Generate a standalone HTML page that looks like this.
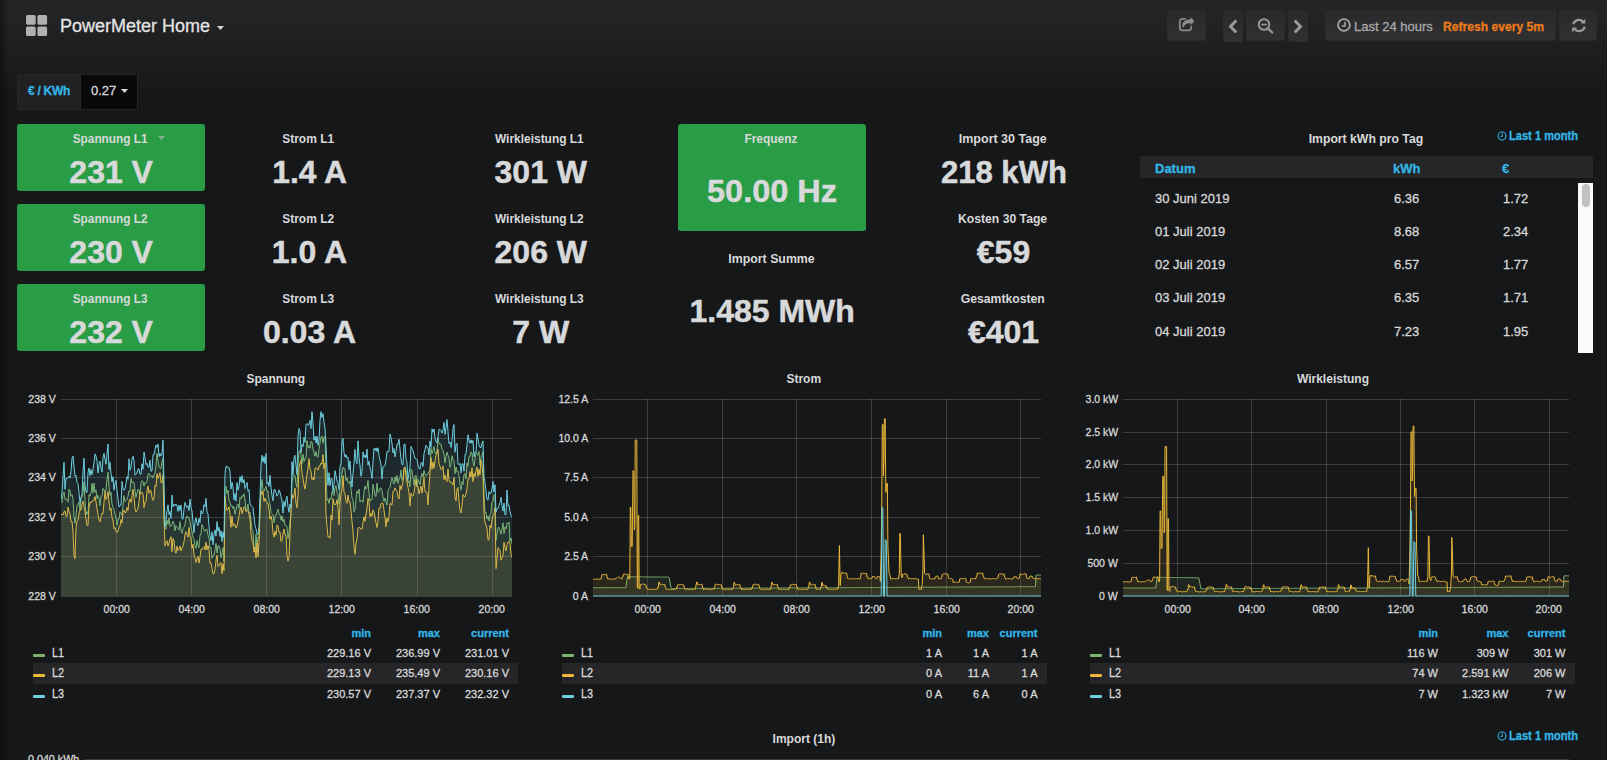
<!DOCTYPE html>
<html lang="de"><head><meta charset="utf-8"><title>PowerMeter Home</title>
<style>
html,body{margin:0;padding:0}
body{width:1607px;height:760px;overflow:hidden;position:relative;background:#161719 linear-gradient(180deg,#222426 10px,#161719 100px) no-repeat;background-size:100% 760px;color:#d8d9da;font-family:"Liberation Sans",Arial,sans-serif;font-size:13px}
.a{position:absolute;white-space:nowrap;-webkit-text-stroke:.3px currentColor}
.lshadow{left:0;top:0;width:9px;height:760px;background:linear-gradient(90deg,rgba(0,0,0,.38),rgba(0,0,0,0))}
.btn{top:10px;height:29px;border:1px solid #2b2b2e;border-radius:2px;background:linear-gradient(180deg,#29292c,#313134);box-sizing:content-box}
.btn svg{position:absolute}
.ttl{-webkit-text-stroke:0;font-weight:bold;font-size:13px;line-height:16px;text-align:center;color:#d8d9da}
.ttl span,.sb{display:inline-block;transform:scaleX(.925);transform-origin:50% 50%}
.sl{display:inline-block;transform-origin:0 50%}
.sr{display:inline-block;transform-origin:100% 50%}
.sc{display:inline-block;transform-origin:50% 50%}
.val{-webkit-text-stroke:.5px currentColor;font-weight:bold;font-size:32px;line-height:36px;text-align:center;color:#d8d9da}
.green{background:#299c46;border-radius:3px}
.ax{font-size:11px;line-height:12px;color:#d8d9da}
.lg{font-size:11px;line-height:14px;color:#d8d9da}
.ln{font-size:12px;line-height:14px;color:#d8d9da}
.lh{font-size:11px;line-height:14px;color:#33b5e5;font-weight:bold}
.r{text-align:right}
.c{text-align:center}
.td{font-size:13px;line-height:16px;color:#d8d9da}
.th{font-size:13px;line-height:16px;color:#33b5e5;font-weight:bold}
.th span{display:inline-block;transform:scaleX(1);transform-origin:0 50%}
.tinfo{font-size:12px;line-height:14px;color:#33b5e5;font-weight:bold}
.tinfo span{display:inline-block;transform:scaleX(.924);transform-origin:0 50%}
</style></head><body>
<div class="a lshadow"></div>

<svg class="a" style="left:26px;top:14.800px" width="22" height="22" viewBox="0 0 22 22"><g fill="#b1b2b1"><rect x="0" y="0" width="9.700" height="9.700" rx="1.600"/><rect x="11.400" y="0" width="9.700" height="9.700" rx="1.600"/><rect x="0" y="11.400" width="9.700" height="9.700" rx="1.600"/><rect x="11.400" y="11.400" width="9.700" height="9.700" rx="1.600"/></g></svg>
<div class="a" id="dtitle" style="left:60px;top:14px;font-size:18px;line-height:24px;color:#e3e3e3">PowerMeter Home</div>
<svg class="a" style="left:217px;top:26px" width="7" height="4" viewBox="0 0 7 4"><path d="M0 0h7L3.5 4z" fill="#d8d9da"/></svg>
<svg class="a" style="left:1176px;top:15px;z-index:2" width="20" height="20" viewBox="0 0 20 20"><path d="M9.200 3.800H6.400A2.600 2.600 0 0 0 3.800 6.400V12.700A2.600 2.600 0 0 0 6.400 15.300H12.700A2.600 2.600 0 0 0 15.300 12.700V11.600" fill="none" stroke="#8c8c8c" stroke-width="1.700" stroke-linecap="round"/><path d="M14.700 2.100L18.200 6.200L14.700 10.300V8.200C10.800 8.100 8.600 9.200 7 13.100C5.300 8.600 7.500 4.300 14.700 4.200Z" fill="#8f8f8f"/></svg>
<div class="a btn" style="left:1167px;width:37px;"></div>
<div class="a btn" style="left:1223px;width:18px;height:30px"><svg style="left:4px;top:8px" width="10" height="15" viewBox="0 0 10 15"><path d="M8.300 1.600L2.500 7.500l5.800 5.900" fill="none" stroke="#9a9a9a" stroke-width="2.900"/></svg></div>
<div class="a btn" style="left:1246px;width:37px;"></div>
<svg class="a" style="left:1254px;top:15px;z-index:2" width="20" height="20" viewBox="0 0 20 20"><circle cx="10" cy="9.500" r="5.300" fill="none" stroke="#979797" stroke-width="2"/><path d="M13.900 13.400l4.300 4.100" stroke="#979797" stroke-width="2.400" stroke-linecap="round"/><path d="M7.100 9.500h5.800" stroke="#979797" stroke-width="1.700"/></svg>
<div class="a btn" style="left:1288px;width:18px;height:30px"><svg style="left:4px;top:8px" width="10" height="15" viewBox="0 0 10 15"><path d="M1.700 1.600l5.800 5.900-5.800 5.900" fill="none" stroke="#9a9a9a" stroke-width="2.900"/></svg></div>
<svg class="a" style="left:1335.600px;top:17.100px;z-index:2" width="16" height="16" viewBox="0 0 16 16"><circle cx="8" cy="8" r="5.900" fill="none" stroke="#a6a6a6" stroke-width="1.800"/><path d="M9 4.700v4.300H5.600" fill="none" stroke="#a6a6a6" stroke-width="1.500"/></svg>
<div class="a btn" style="left:1325px;width:229px;"><span class="a" id="tr1" style="left:28px;top:7px;font-size:13px;line-height:17px;color:#a8a8a8">Last 24 hours</span><span class="a" id="tr2" style="left:117px;top:7px;font-size:13px;line-height:17px;color:#eb7b18;font-weight:bold"><span class="sl" style="transform:scaleX(.932)">Refresh every 5m</span></span></div>
<div class="a btn" style="left:1559px;width:36px;"><svg style="left:10.500px;top:7px" width="15.500" height="15" viewBox="-.5 0 15.500 15"><path d="M1.800 6.200A5.700 5.400 0 0 1 11.700 3.700" fill="none" stroke="#9a9a9a" stroke-width="2.300"/><path d="M13.800 .8v4.600H9.200z" fill="#9a9a9a"/><path d="M13.200 8.800A5.700 5.400 0 0 1 3.300 11.300" fill="none" stroke="#9a9a9a" stroke-width="2.300"/><path d="M.6 14.300V9.400h4.900z" fill="#9a9a9a"/></svg></div>
<div class="a" style="left:17px;top:74px;width:63px;height:34px;background:#212124;border:1px solid #262628;border-right:none;border-radius:2px 0 0 2px"></div>
<div class="a" id="vlab" style="left:28px;top:84px;font-size:12px;line-height:15px;font-weight:bold;color:#33b5e5;letter-spacing:-.28px">€ / KWh</div>
<div class="a" style="left:80px;top:74px;width:56px;height:34px;background:#09090b;border:1px solid #262628;border-radius:0 2px 2px 0"></div>
<div class="a" id="vval" style="left:91px;top:83px;font-size:13px;line-height:16px;color:#d8d9da">0.27</div>
<svg class="a" style="left:121px;top:89px" width="7" height="4" viewBox="0 0 7 4"><path d="M0 0h7L3.500 4z" fill="#d8d9da"/></svg>
<div class="a green" style="left:17.0px;top:124px;width:188.3px;height:67px"></div>
<div class="a ttl" style="left:16.0px;top:131px;width:188.3px"><span style="transform:scaleX(0.911)">Spannung L1</span></div>
<div class="a val" style="left:17.0px;top:154.0px;width:188.3px"><span class="sc" style="transform:scaleX(1.000)">231 V</span></div>
<svg class="a" style="left:158px;top:136px" width="7" height="4" viewBox="0 0 7 4"><path d="M0 0h7L3.500 4z" fill="#7fb38b"/></svg>
<div class="a ttl" style="left:214.3px;top:131px;width:188.3px"><span style="transform:scaleX(0.923)">Strom L1</span></div>
<div class="a val" style="left:215.3px;top:154.0px;width:188.3px"><span class="sc" style="transform:scaleX(0.992)">1.4 A</span></div>
<div class="a ttl" style="left:412.6px;top:131px;width:254.4px"><span style="transform:scaleX(0.919)">Wirkleistung L1</span></div>
<div class="a val" style="left:413.6px;top:154.0px;width:254.4px"><span class="sc" style="transform:scaleX(1.000)">301 W</span></div>
<div class="a green" style="left:17.0px;top:204px;width:188.3px;height:67px"></div>
<div class="a ttl" style="left:16.0px;top:211px;width:188.3px"><span style="transform:scaleX(0.911)">Spannung L2</span></div>
<div class="a val" style="left:17.0px;top:234.0px;width:188.3px"><span class="sc" style="transform:scaleX(1.000)">230 V</span></div>
<div class="a ttl" style="left:214.3px;top:211px;width:188.3px"><span style="transform:scaleX(0.923)">Strom L2</span></div>
<div class="a val" style="left:215.3px;top:234.0px;width:188.3px"><span class="sc" style="transform:scaleX(1.000)">1.0 A</span></div>
<div class="a ttl" style="left:412.6px;top:211px;width:254.4px"><span style="transform:scaleX(0.919)">Wirkleistung L2</span></div>
<div class="a val" style="left:413.6px;top:234.0px;width:254.4px"><span class="sc" style="transform:scaleX(1.000)">206 W</span></div>
<div class="a green" style="left:17.0px;top:284px;width:188.3px;height:67px"></div>
<div class="a ttl" style="left:16.0px;top:291px;width:188.3px"><span style="transform:scaleX(0.911)">Spannung L3</span></div>
<div class="a val" style="left:17.0px;top:314.0px;width:188.3px"><span class="sc" style="transform:scaleX(1.000)">232 V</span></div>
<div class="a ttl" style="left:214.3px;top:291px;width:188.3px"><span style="transform:scaleX(0.923)">Strom L3</span></div>
<div class="a val" style="left:215.3px;top:314.0px;width:188.3px"><span class="sc" style="transform:scaleX(1.000)">0.03 A</span></div>
<div class="a ttl" style="left:412.6px;top:291px;width:254.4px"><span style="transform:scaleX(0.919)">Wirkleistung L3</span></div>
<div class="a val" style="left:413.6px;top:314.0px;width:254.4px"><span class="sc" style="transform:scaleX(1.000)">7 W</span></div>
<div class="a green" style="left:678.0px;top:124px;width:188.3px;height:107px"></div>
<div class="a ttl" style="left:677.0px;top:131px;width:188.3px"><span style="transform:scaleX(0.917)">Frequenz</span></div>
<div class="a val" style="left:678.0px;top:173.2px;width:188.3px"><span class="sc" style="transform:scaleX(1.015)">50.00 Hz</span></div>
<div class="a ttl" style="left:677.0px;top:251px;width:188.3px"><span style="transform:scaleX(0.949)">Import Summe</span></div>
<div class="a val" style="left:678.0px;top:293.2px;width:188.3px"><span class="sc" style="transform:scaleX(1.000)">1.485 MWh</span></div>
<div class="a ttl" style="left:875.3px;top:131px;width:254.4px"><span style="transform:scaleX(0.961)">Import 30 Tage</span></div>
<div class="a val" style="left:876.3px;top:154.0px;width:254.4px"><span class="sc" style="transform:scaleX(0.971)">218 kWh</span></div>
<div class="a ttl" style="left:875.3px;top:211px;width:254.4px"><span style="transform:scaleX(0.937)">Kosten 30 Tage</span></div>
<div class="a val" style="left:876.3px;top:234.0px;width:254.4px"><span class="sc" style="transform:scaleX(1.000)">€59</span></div>
<div class="a ttl" style="left:875.3px;top:291px;width:254.4px"><span style="transform:scaleX(0.938)">Gesamtkosten</span></div>
<div class="a val" style="left:876.3px;top:314.0px;width:254.4px"><span class="sc" style="transform:scaleX(1.000)">€401</span></div>
<div class="a ttl" style="left:1139.7px;top:131px;width:452.7px"><span style="transform:scaleX(0.940)">Import kWh pro Tag</span></div>
<svg class="a" style="left:1497px;top:131px" width="10" height="10" viewBox="0 0 10 10"><circle cx="5" cy="5" r="4" fill="none" stroke="#33b5e5" stroke-width="1.100"/><path d="M5.300 2.600v2.800H3.300" fill="none" stroke="#33b5e5" stroke-width="1"/></svg>
<div class="a tinfo" style="left:1509px;top:129px"><span>Last 1 month</span></div>
<div class="a" style="left:1140px;top:156px;width:453px;height:22px;background:#262628"></div>
<div class="a th" style="left:1155px;top:161px"><span>Datum</span></div>
<div class="a th" style="left:1393px;top:161px"><span>kWh</span></div>
<div class="a th" style="left:1502px;top:161px"><span>€</span></div>
<div class="a td" style="left:1155px;top:190.5px">30 Juni 2019</div>
<div class="a td" style="left:1394px;top:190.5px">6.36</div>
<div class="a td" style="left:1503px;top:190.5px">1.72</div>
<div class="a td" style="left:1155px;top:223.8px">01 Juli 2019</div>
<div class="a td" style="left:1394px;top:223.8px">8.68</div>
<div class="a td" style="left:1503px;top:223.8px">2.34</div>
<div class="a td" style="left:1155px;top:257.0px">02 Juli 2019</div>
<div class="a td" style="left:1394px;top:257.0px">6.57</div>
<div class="a td" style="left:1503px;top:257.0px">1.77</div>
<div class="a td" style="left:1155px;top:290.2px">03 Juli 2019</div>
<div class="a td" style="left:1394px;top:290.2px">6.35</div>
<div class="a td" style="left:1503px;top:290.2px">1.71</div>
<div class="a td" style="left:1155px;top:323.5px">04 Juli 2019</div>
<div class="a td" style="left:1394px;top:323.5px">7.23</div>
<div class="a td" style="left:1503px;top:323.5px">1.95</div>
<div class="a" style="left:1578px;top:183px;width:15px;height:170px;background:#fafafa"></div>
<div class="a" style="left:1581.500px;top:184px;width:8.500px;height:23px;background:#c1c1c1;border-radius:4px"></div>
<div class="a ttl" style="left:16.0px;top:371px;width:518.8px"><span>Spannung</span></div>
<svg class="a" style="left:0;top:390px" width="1607" height="215" viewBox="0 390 1607 215"><path d="M61 399.5H512" stroke="#fff" stroke-opacity=".16" stroke-width="1"/><path d="M61 438.5H512" stroke="#fff" stroke-opacity=".16" stroke-width="1"/><path d="M61 477.5H512" stroke="#fff" stroke-opacity=".16" stroke-width="1"/><path d="M61 517.5H512" stroke="#fff" stroke-opacity=".16" stroke-width="1"/><path d="M61 556.5H512" stroke="#fff" stroke-opacity=".16" stroke-width="1"/><path d="M61 596.5H512" stroke="#fff" stroke-opacity=".16" stroke-width="1"/><path d="M116.5 399V596" stroke="#fff" stroke-opacity=".16" stroke-width="1"/><path d="M191.5 399V596" stroke="#fff" stroke-opacity=".16" stroke-width="1"/><path d="M266.5 399V596" stroke="#fff" stroke-opacity=".16" stroke-width="1"/><path d="M341.5 399V596" stroke="#fff" stroke-opacity=".16" stroke-width="1"/><path d="M417.5 399V596" stroke="#fff" stroke-opacity=".16" stroke-width="1"/><path d="M492.5 399V596" stroke="#fff" stroke-opacity=".16" stroke-width="1"/><clipPath id="cp61"><rect x="61" y="396" width="451" height="201.500"/></clipPath><g clip-path="url(#cp61)"><path d="M61.0 500.8 62.0 502.5 63.0 494.9 64.0 492.1 65.0 499.1 66.0 499.6 67.0 499.0 68.0 502.1 69.0 489.2 70.0 491.0 71.0 496.1 72.0 494.6 73.0 499.1 74.0 516.9 75.0 523.3 76.0 515.6 77.0 505.1 78.0 504.7 79.0 502.0 80.0 509.8 81.0 498.3 82.0 496.9 83.0 493.8 84.0 482.1 85.0 499.2 86.0 514.9 87.0 511.6 88.0 514.3 89.0 494.6 90.0 496.1 91.0 493.1 92.0 483.4 93.0 492.9 94.0 483.1 95.0 492.2 96.0 489.9 97.0 498.9 98.0 495.2 99.0 498.1 100.0 505.8 101.0 496.5 102.0 495.9 103.0 488.3 104.0 490.0 105.0 491.7 106.0 489.9 107.0 479.2 108.0 472.1 109.0 485.9 110.0 495.4 111.0 492.2 112.0 503.9 113.0 507.5 114.0 509.9 115.0 514.4 116.0 518.1 117.0 525.5 118.0 518.8 119.0 519.2 120.0 511.7 121.0 513.7 122.0 515.6 123.0 505.3 124.0 495.6 125.0 501.2 126.0 500.6 127.0 499.4 128.0 496.3 129.0 490.7 130.0 491.6 131.0 478.4 132.0 483.1 133.0 481.7 134.0 482.6 135.0 490.1 136.0 497.4 137.0 493.0 138.0 489.1 139.0 490.5 140.0 494.5 141.0 482.7 142.0 480.5 143.0 481.6 144.0 486.0 145.0 482.3 146.0 483.1 147.0 481.4 148.0 474.6 149.0 473.2 150.0 476.3 151.0 476.4 152.0 475.5 153.0 477.8 154.0 475.1 155.0 472.7 156.0 465.4 157.0 453.5 158.0 460.3 159.0 466.3 160.0 468.1 161.0 468.4 162.0 461.1 163.0 458.1 164.0 505.1 165.0 527.6 166.0 529.3 167.0 520.3 168.0 524.2 169.0 517.9 170.0 526.6 171.0 526.1 172.0 524.0 173.0 521.1 174.0 523.3 175.0 530.8 176.0 525.6 177.0 526.7 178.0 528.9 179.0 530.2 180.0 521.5 181.0 530.7 182.0 533.3 183.0 528.2 184.0 527.3 185.0 524.8 186.0 518.1 187.0 516.0 188.0 517.8 189.0 517.5 190.0 522.3 191.0 527.9 192.0 531.5 193.0 537.2 194.0 539.1 195.0 545.5 196.0 548.5 197.0 540.5 198.0 545.7 199.0 547.7 200.0 534.9 201.0 534.2 202.0 524.6 203.0 526.6 204.0 529.8 205.0 531.3 206.0 529.4 207.0 529.4 208.0 535.1 209.0 538.1 210.0 548.2 211.0 547.2 212.0 558.4 213.0 555.5 214.0 555.4 215.0 550.3 216.0 543.4 217.0 553.1 218.0 545.8 219.0 545.9 220.0 548.6 221.0 557.7 222.0 552.9 223.0 547.6 224.0 561.3 225.0 488.5 226.0 486.2 227.0 493.5 228.0 490.0 229.0 500.1 230.0 502.6 231.0 506.2 232.0 505.3 233.0 508.6 234.0 506.6 235.0 514.4 236.0 510.5 237.0 505.5 238.0 504.1 239.0 508.4 240.0 497.4 241.0 498.8 242.0 495.6 243.0 496.5 244.0 493.7 245.0 500.0 246.0 509.7 247.0 509.7 248.0 503.9 249.0 512.6 250.0 512.0 251.0 520.2 252.0 529.6 253.0 531.5 254.0 548.0 255.0 551.9 256.0 534.3 257.0 546.5 258.0 537.1 259.0 538.0 260.0 503.5 261.0 488.8 262.0 479.5 263.0 490.4 264.0 491.2 265.0 488.7 266.0 486.5 267.0 490.8 268.0 491.1 269.0 500.5 270.0 504.0 271.0 512.4 272.0 513.7 273.0 514.7 274.0 522.7 275.0 515.6 276.0 515.7 277.0 511.8 278.0 509.3 279.0 514.1 280.0 514.8 281.0 520.3 282.0 515.6 283.0 521.9 284.0 519.1 285.0 525.0 286.0 525.1 287.0 526.8 288.0 538.6 289.0 531.7 290.0 520.6 291.0 514.3 292.0 482.4 293.0 476.3 294.0 476.1 295.0 475.6 296.0 483.4 297.0 487.4 298.0 463.8 299.0 451.5 300.0 450.6 301.0 454.6 302.0 464.2 303.0 454.2 304.0 461.6 305.0 458.1 306.0 457.8 307.0 440.6 308.0 447.7 309.0 445.6 310.0 448.3 311.0 441.2 312.0 442.3 313.0 449.2 314.0 452.4 315.0 456.2 316.0 451.4 317.0 456.4 318.0 457.2 319.0 449.3 320.0 442.8 321.0 437.0 322.0 435.9 323.0 443.2 324.0 437.2 325.0 436.2 326.0 469.5 327.0 500.3 328.0 498.9 329.0 503.4 330.0 498.0 331.0 499.0 332.0 491.8 333.0 493.5 334.0 495.7 335.0 488.1 336.0 485.8 337.0 492.4 338.0 494.4 339.0 504.4 340.0 484.6 341.0 478.6 342.0 472.8 343.0 467.5 344.0 467.9 345.0 470.6 346.0 480.5 347.0 477.6 348.0 482.4 349.0 483.7 350.0 481.1 351.0 488.8 352.0 497.8 353.0 500.4 354.0 511.8 355.0 509.4 356.0 498.8 357.0 491.0 358.0 493.6 359.0 489.1 360.0 501.9 361.0 501.3 362.0 500.0 363.0 502.3 364.0 491.7 365.0 485.9 366.0 489.0 367.0 487.5 368.0 480.5 369.0 493.6 370.0 501.0 371.0 499.6 372.0 499.6 373.0 484.3 374.0 489.5 375.0 495.7 376.0 496.4 377.0 483.1 378.0 492.4 379.0 491.6 380.0 488.3 381.0 487.9 382.0 490.5 383.0 497.0 384.0 501.4 385.0 497.9 386.0 502.1 387.0 505.2 388.0 490.6 389.0 488.6 390.0 487.4 391.0 481.7 392.0 477.5 393.0 481.3 394.0 484.1 395.0 476.8 396.0 481.7 397.0 475.4 398.0 483.5 399.0 478.6 400.0 478.1 401.0 470.0 402.0 480.5 403.0 479.3 404.0 468.6 405.0 466.5 406.0 470.4 407.0 475.4 408.0 483.0 409.0 480.6 410.0 487.0 411.0 469.0 412.0 470.5 413.0 478.1 414.0 485.4 415.0 475.8 416.0 475.3 417.0 486.4 418.0 479.2 419.0 482.2 420.0 484.7 421.0 477.3 422.0 473.4 423.0 476.8 424.0 470.5 425.0 474.1 426.0 476.2 427.0 474.3 428.0 474.0 429.0 471.6 430.0 469.9 431.0 448.3 432.0 453.5 433.0 449.9 434.0 446.5 435.0 453.2 436.0 453.9 437.0 450.8 438.0 437.7 439.0 443.7 440.0 443.6 441.0 444.2 442.0 449.1 443.0 450.9 444.0 454.1 445.0 462.9 446.0 456.7 447.0 452.0 448.0 455.5 449.0 458.3 450.0 467.3 451.0 464.1 452.0 455.7 453.0 459.9 454.0 460.7 455.0 473.7 456.0 466.9 457.0 471.9 458.0 471.4 459.0 475.1 460.0 484.8 461.0 490.3 462.0 481.4 463.0 484.6 464.0 474.1 465.0 473.6 466.0 478.8 467.0 462.9 468.0 466.4 469.0 456.5 470.0 456.3 471.0 451.9 472.0 452.7 473.0 462.8 474.0 466.1 475.0 458.2 476.0 453.7 477.0 453.5 478.0 455.2 479.0 451.5 480.0 465.0 481.0 456.9 482.0 454.9 483.0 451.8 484.0 493.8 485.0 512.8 486.0 512.2 487.0 519.1 488.0 515.8 489.0 520.9 490.0 515.4 491.0 512.5 492.0 501.7 493.0 501.3 494.0 495.1 495.0 494.9 496.0 540.2 497.0 534.1 498.0 527.6 499.0 527.3 500.0 530.5 501.0 534.2 502.0 529.2 503.0 522.8 504.0 533.6 505.0 526.8 506.0 529.0 507.0 523.1 508.0 523.4 509.0 522.1 510.0 541.4 511.0 537.9 512.0 544.1 L512.0 596 L61.0 596Z" fill="#7eb26d" fill-opacity=".1"/><path d="M61.0 500.8 62.0 502.5 63.0 494.9 64.0 492.1 65.0 499.1 66.0 499.6 67.0 499.0 68.0 502.1 69.0 489.2 70.0 491.0 71.0 496.1 72.0 494.6 73.0 499.1 74.0 516.9 75.0 523.3 76.0 515.6 77.0 505.1 78.0 504.7 79.0 502.0 80.0 509.8 81.0 498.3 82.0 496.9 83.0 493.8 84.0 482.1 85.0 499.2 86.0 514.9 87.0 511.6 88.0 514.3 89.0 494.6 90.0 496.1 91.0 493.1 92.0 483.4 93.0 492.9 94.0 483.1 95.0 492.2 96.0 489.9 97.0 498.9 98.0 495.2 99.0 498.1 100.0 505.8 101.0 496.5 102.0 495.9 103.0 488.3 104.0 490.0 105.0 491.7 106.0 489.9 107.0 479.2 108.0 472.1 109.0 485.9 110.0 495.4 111.0 492.2 112.0 503.9 113.0 507.5 114.0 509.9 115.0 514.4 116.0 518.1 117.0 525.5 118.0 518.8 119.0 519.2 120.0 511.7 121.0 513.7 122.0 515.6 123.0 505.3 124.0 495.6 125.0 501.2 126.0 500.6 127.0 499.4 128.0 496.3 129.0 490.7 130.0 491.6 131.0 478.4 132.0 483.1 133.0 481.7 134.0 482.6 135.0 490.1 136.0 497.4 137.0 493.0 138.0 489.1 139.0 490.5 140.0 494.5 141.0 482.7 142.0 480.5 143.0 481.6 144.0 486.0 145.0 482.3 146.0 483.1 147.0 481.4 148.0 474.6 149.0 473.2 150.0 476.3 151.0 476.4 152.0 475.5 153.0 477.8 154.0 475.1 155.0 472.7 156.0 465.4 157.0 453.5 158.0 460.3 159.0 466.3 160.0 468.1 161.0 468.4 162.0 461.1 163.0 458.1 164.0 505.1 165.0 527.6 166.0 529.3 167.0 520.3 168.0 524.2 169.0 517.9 170.0 526.6 171.0 526.1 172.0 524.0 173.0 521.1 174.0 523.3 175.0 530.8 176.0 525.6 177.0 526.7 178.0 528.9 179.0 530.2 180.0 521.5 181.0 530.7 182.0 533.3 183.0 528.2 184.0 527.3 185.0 524.8 186.0 518.1 187.0 516.0 188.0 517.8 189.0 517.5 190.0 522.3 191.0 527.9 192.0 531.5 193.0 537.2 194.0 539.1 195.0 545.5 196.0 548.5 197.0 540.5 198.0 545.7 199.0 547.7 200.0 534.9 201.0 534.2 202.0 524.6 203.0 526.6 204.0 529.8 205.0 531.3 206.0 529.4 207.0 529.4 208.0 535.1 209.0 538.1 210.0 548.2 211.0 547.2 212.0 558.4 213.0 555.5 214.0 555.4 215.0 550.3 216.0 543.4 217.0 553.1 218.0 545.8 219.0 545.9 220.0 548.6 221.0 557.7 222.0 552.9 223.0 547.6 224.0 561.3 225.0 488.5 226.0 486.2 227.0 493.5 228.0 490.0 229.0 500.1 230.0 502.6 231.0 506.2 232.0 505.3 233.0 508.6 234.0 506.6 235.0 514.4 236.0 510.5 237.0 505.5 238.0 504.1 239.0 508.4 240.0 497.4 241.0 498.8 242.0 495.6 243.0 496.5 244.0 493.7 245.0 500.0 246.0 509.7 247.0 509.7 248.0 503.9 249.0 512.6 250.0 512.0 251.0 520.2 252.0 529.6 253.0 531.5 254.0 548.0 255.0 551.9 256.0 534.3 257.0 546.5 258.0 537.1 259.0 538.0 260.0 503.5 261.0 488.8 262.0 479.5 263.0 490.4 264.0 491.2 265.0 488.7 266.0 486.5 267.0 490.8 268.0 491.1 269.0 500.5 270.0 504.0 271.0 512.4 272.0 513.7 273.0 514.7 274.0 522.7 275.0 515.6 276.0 515.7 277.0 511.8 278.0 509.3 279.0 514.1 280.0 514.8 281.0 520.3 282.0 515.6 283.0 521.9 284.0 519.1 285.0 525.0 286.0 525.1 287.0 526.8 288.0 538.6 289.0 531.7 290.0 520.6 291.0 514.3 292.0 482.4 293.0 476.3 294.0 476.1 295.0 475.6 296.0 483.4 297.0 487.4 298.0 463.8 299.0 451.5 300.0 450.6 301.0 454.6 302.0 464.2 303.0 454.2 304.0 461.6 305.0 458.1 306.0 457.8 307.0 440.6 308.0 447.7 309.0 445.6 310.0 448.3 311.0 441.2 312.0 442.3 313.0 449.2 314.0 452.4 315.0 456.2 316.0 451.4 317.0 456.4 318.0 457.2 319.0 449.3 320.0 442.8 321.0 437.0 322.0 435.9 323.0 443.2 324.0 437.2 325.0 436.2 326.0 469.5 327.0 500.3 328.0 498.9 329.0 503.4 330.0 498.0 331.0 499.0 332.0 491.8 333.0 493.5 334.0 495.7 335.0 488.1 336.0 485.8 337.0 492.4 338.0 494.4 339.0 504.4 340.0 484.6 341.0 478.6 342.0 472.8 343.0 467.5 344.0 467.9 345.0 470.6 346.0 480.5 347.0 477.6 348.0 482.4 349.0 483.7 350.0 481.1 351.0 488.8 352.0 497.8 353.0 500.4 354.0 511.8 355.0 509.4 356.0 498.8 357.0 491.0 358.0 493.6 359.0 489.1 360.0 501.9 361.0 501.3 362.0 500.0 363.0 502.3 364.0 491.7 365.0 485.9 366.0 489.0 367.0 487.5 368.0 480.5 369.0 493.6 370.0 501.0 371.0 499.6 372.0 499.6 373.0 484.3 374.0 489.5 375.0 495.7 376.0 496.4 377.0 483.1 378.0 492.4 379.0 491.6 380.0 488.3 381.0 487.9 382.0 490.5 383.0 497.0 384.0 501.4 385.0 497.9 386.0 502.1 387.0 505.2 388.0 490.6 389.0 488.6 390.0 487.4 391.0 481.7 392.0 477.5 393.0 481.3 394.0 484.1 395.0 476.8 396.0 481.7 397.0 475.4 398.0 483.5 399.0 478.6 400.0 478.1 401.0 470.0 402.0 480.5 403.0 479.3 404.0 468.6 405.0 466.5 406.0 470.4 407.0 475.4 408.0 483.0 409.0 480.6 410.0 487.0 411.0 469.0 412.0 470.5 413.0 478.1 414.0 485.4 415.0 475.8 416.0 475.3 417.0 486.4 418.0 479.2 419.0 482.2 420.0 484.7 421.0 477.3 422.0 473.4 423.0 476.8 424.0 470.5 425.0 474.1 426.0 476.2 427.0 474.3 428.0 474.0 429.0 471.6 430.0 469.9 431.0 448.3 432.0 453.5 433.0 449.9 434.0 446.5 435.0 453.2 436.0 453.9 437.0 450.8 438.0 437.7 439.0 443.7 440.0 443.6 441.0 444.2 442.0 449.1 443.0 450.9 444.0 454.1 445.0 462.9 446.0 456.7 447.0 452.0 448.0 455.5 449.0 458.3 450.0 467.3 451.0 464.1 452.0 455.7 453.0 459.9 454.0 460.7 455.0 473.7 456.0 466.9 457.0 471.9 458.0 471.4 459.0 475.1 460.0 484.8 461.0 490.3 462.0 481.4 463.0 484.6 464.0 474.1 465.0 473.6 466.0 478.8 467.0 462.9 468.0 466.4 469.0 456.5 470.0 456.3 471.0 451.9 472.0 452.7 473.0 462.8 474.0 466.1 475.0 458.2 476.0 453.7 477.0 453.5 478.0 455.2 479.0 451.5 480.0 465.0 481.0 456.9 482.0 454.9 483.0 451.8 484.0 493.8 485.0 512.8 486.0 512.2 487.0 519.1 488.0 515.8 489.0 520.9 490.0 515.4 491.0 512.5 492.0 501.7 493.0 501.3 494.0 495.1 495.0 494.9 496.0 540.2 497.0 534.1 498.0 527.6 499.0 527.3 500.0 530.5 501.0 534.2 502.0 529.2 503.0 522.8 504.0 533.6 505.0 526.8 506.0 529.0 507.0 523.1 508.0 523.4 509.0 522.1 510.0 541.4 511.0 537.9 512.0 544.1" fill="none" stroke="#7eb26d" stroke-width="1" stroke-linejoin="round"/><path d="M61.0 514.9 62.0 514.1 63.0 515.0 64.0 511.4 65.0 511.1 66.0 515.9 67.0 516.3 68.0 507.1 69.0 511.5 70.0 513.4 71.0 521.8 72.0 521.2 73.0 531.6 74.0 555.4 75.0 558.7 76.0 527.8 77.0 521.3 78.0 520.0 79.0 513.5 80.0 510.0 81.0 510.0 82.0 504.3 83.0 501.3 84.0 506.0 85.0 512.0 86.0 518.1 87.0 525.4 88.0 525.3 89.0 507.0 90.0 502.2 91.0 503.0 92.0 500.9 93.0 501.2 94.0 500.2 95.0 496.5 96.0 501.8 97.0 507.9 98.0 514.1 99.0 520.4 100.0 522.0 101.0 516.9 102.0 513.0 103.0 513.7 104.0 502.2 105.0 491.5 106.0 499.3 107.0 497.4 108.0 491.5 109.0 501.9 110.0 510.6 111.0 508.1 112.0 517.4 113.0 520.0 114.0 528.9 115.0 527.5 116.0 531.2 117.0 532.6 118.0 530.9 119.0 526.5 120.0 526.2 121.0 519.5 122.0 523.0 123.0 512.3 124.0 510.1 125.0 512.7 126.0 512.4 127.0 507.3 128.0 510.3 129.0 501.3 130.0 499.2 131.0 502.4 132.0 495.8 133.0 489.1 134.0 497.2 135.0 508.1 136.0 512.0 137.0 510.4 138.0 508.3 139.0 501.6 140.0 491.6 141.0 493.3 142.0 492.3 143.0 494.0 144.0 507.5 145.0 502.0 146.0 501.3 147.0 491.0 148.0 486.1 149.0 493.3 150.0 490.5 151.0 490.6 152.0 497.4 153.0 500.4 154.0 498.1 155.0 485.1 156.0 486.6 157.0 473.6 158.0 478.5 159.0 475.9 160.0 472.7 161.0 482.6 162.0 482.5 163.0 475.2 164.0 519.7 165.0 545.8 166.0 542.5 167.0 540.6 168.0 546.0 169.0 542.7 170.0 539.2 171.0 536.7 172.0 551.7 173.0 538.4 174.0 541.0 175.0 550.5 176.0 553.2 177.0 546.0 178.0 550.7 179.0 549.3 180.0 545.9 181.0 550.9 182.0 548.2 183.0 546.5 184.0 541.7 185.0 534.6 186.0 531.6 187.0 534.5 188.0 537.2 189.0 527.3 190.0 536.1 191.0 538.4 192.0 548.4 193.0 544.3 194.0 555.0 195.0 557.7 196.0 562.4 197.0 558.9 198.0 556.4 199.0 563.1 200.0 557.2 201.0 549.1 202.0 549.6 203.0 547.6 204.0 546.6 205.0 549.9 206.0 542.1 207.0 549.8 208.0 545.5 209.0 549.5 210.0 563.3 211.0 562.6 212.0 568.5 213.0 573.8 214.0 573.8 215.0 569.4 216.0 560.3 217.0 555.3 218.0 566.5 219.0 565.5 220.0 563.4 221.0 562.5 222.0 573.8 223.0 563.7 224.0 570.8 225.0 496.3 226.0 506.7 227.0 510.5 228.0 509.0 229.0 506.8 230.0 514.4 231.0 527.4 232.0 516.0 233.0 526.2 234.0 523.7 235.0 524.8 236.0 527.9 237.0 525.6 238.0 521.0 239.0 515.7 240.0 509.6 241.0 507.2 242.0 513.7 243.0 510.0 244.0 506.7 245.0 507.5 246.0 511.7 247.0 510.3 248.0 510.7 249.0 514.6 250.0 519.2 251.0 533.9 252.0 540.2 253.0 542.7 254.0 552.3 255.0 547.0 256.0 558.0 257.0 543.0 258.0 556.7 259.0 542.3 260.0 510.1 261.0 490.6 262.0 494.5 263.0 491.4 264.0 501.4 265.0 498.4 266.0 501.3 267.0 503.0 268.0 503.4 269.0 509.4 270.0 519.2 271.0 516.1 272.0 520.7 273.0 532.6 274.0 537.2 275.0 531.1 276.0 535.2 277.0 524.9 278.0 525.9 279.0 532.5 280.0 531.9 281.0 541.6 282.0 540.5 283.0 533.6 284.0 529.1 285.0 534.9 286.0 535.3 287.0 555.8 288.0 561.2 289.0 557.4 290.0 532.6 291.0 512.2 292.0 494.5 293.0 498.4 294.0 494.8 295.0 488.0 296.0 503.3 297.0 507.8 298.0 495.5 299.0 466.5 300.0 463.0 301.0 460.5 302.0 473.3 303.0 478.4 304.0 484.9 305.0 489.1 306.0 482.0 307.0 473.9 308.0 467.9 309.0 458.6 310.0 469.1 311.0 471.5 312.0 479.7 313.0 477.5 314.0 480.0 315.0 468.1 316.0 468.1 317.0 468.6 318.0 470.1 319.0 466.1 320.0 465.7 321.0 463.0 322.0 464.1 323.0 454.6 324.0 468.6 325.0 463.0 326.0 514.8 327.0 526.4 328.0 537.0 329.0 536.4 330.0 538.4 331.0 514.9 332.0 520.2 333.0 498.7 334.0 504.1 335.0 504.4 336.0 504.3 337.0 499.7 338.0 508.3 339.0 524.9 340.0 502.7 341.0 494.3 342.0 489.9 343.0 475.8 344.0 492.0 345.0 493.7 346.0 501.1 347.0 503.2 348.0 495.1 349.0 501.7 350.0 501.9 351.0 510.6 352.0 521.5 353.0 530.9 354.0 547.0 355.0 554.4 356.0 543.1 357.0 538.9 358.0 528.4 359.0 527.1 360.0 528.4 361.0 529.1 362.0 529.1 363.0 522.2 364.0 516.9 365.0 521.3 366.0 513.9 367.0 508.4 368.0 498.2 369.0 501.0 370.0 516.7 371.0 513.3 372.0 516.1 373.0 509.8 374.0 512.4 375.0 517.0 376.0 522.9 377.0 527.5 378.0 521.3 379.0 508.0 380.0 508.4 381.0 503.8 382.0 503.0 383.0 503.3 384.0 510.6 385.0 516.9 386.0 526.9 387.0 517.9 388.0 521.7 389.0 516.4 390.0 503.5 391.0 504.0 392.0 504.9 393.0 491.1 394.0 490.8 395.0 487.9 396.0 489.8 397.0 491.7 398.0 496.7 399.0 499.0 400.0 485.4 401.0 489.6 402.0 486.1 403.0 481.9 404.0 467.9 405.0 468.2 406.0 476.3 407.0 482.3 408.0 487.2 409.0 492.9 410.0 505.9 411.0 493.0 412.0 495.9 413.0 495.9 414.0 492.6 415.0 485.5 416.0 479.3 417.0 487.0 418.0 486.5 419.0 493.8 420.0 489.5 421.0 486.1 422.0 493.1 423.0 485.9 424.0 477.2 425.0 491.6 426.0 491.3 427.0 492.9 428.0 504.8 429.0 487.1 430.0 473.1 431.0 457.4 432.0 469.3 433.0 461.9 434.0 468.3 435.0 460.9 436.0 455.3 437.0 453.1 438.0 449.1 439.0 463.4 440.0 466.3 441.0 469.4 442.0 469.3 443.0 465.9 444.0 479.7 445.0 474.8 446.0 479.8 447.0 481.5 448.0 469.0 449.0 479.5 450.0 482.1 451.0 482.9 452.0 482.7 453.0 484.9 454.0 477.4 455.0 497.6 456.0 500.8 457.0 488.9 458.0 487.4 459.0 501.4 460.0 510.5 461.0 513.0 462.0 505.4 463.0 494.5 464.0 496.5 465.0 496.9 466.0 493.3 467.0 488.8 468.0 479.1 469.0 478.6 470.0 471.6 471.0 477.1 472.0 467.6 473.0 481.6 474.0 473.3 475.0 476.7 476.0 470.1 477.0 467.0 478.0 476.3 479.0 469.2 480.0 474.9 481.0 460.0 482.0 465.2 483.0 475.7 484.0 512.8 485.0 522.8 486.0 524.7 487.0 528.3 488.0 539.8 489.0 539.8 490.0 525.1 491.0 528.3 492.0 519.6 493.0 515.3 494.0 514.5 495.0 507.7 496.0 568.6 497.0 558.2 498.0 547.7 499.0 549.1 500.0 550.3 501.0 560.2 502.0 557.9 503.0 555.8 504.0 542.3 505.0 547.9 506.0 550.8 507.0 544.2 508.0 542.1 509.0 541.6 510.0 543.8 511.0 554.3 512.0 557.4 L512.0 596 L61.0 596Z" fill="#eab839" fill-opacity=".1"/><path d="M61.0 514.9 62.0 514.1 63.0 515.0 64.0 511.4 65.0 511.1 66.0 515.9 67.0 516.3 68.0 507.1 69.0 511.5 70.0 513.4 71.0 521.8 72.0 521.2 73.0 531.6 74.0 555.4 75.0 558.7 76.0 527.8 77.0 521.3 78.0 520.0 79.0 513.5 80.0 510.0 81.0 510.0 82.0 504.3 83.0 501.3 84.0 506.0 85.0 512.0 86.0 518.1 87.0 525.4 88.0 525.3 89.0 507.0 90.0 502.2 91.0 503.0 92.0 500.9 93.0 501.2 94.0 500.2 95.0 496.5 96.0 501.8 97.0 507.9 98.0 514.1 99.0 520.4 100.0 522.0 101.0 516.9 102.0 513.0 103.0 513.7 104.0 502.2 105.0 491.5 106.0 499.3 107.0 497.4 108.0 491.5 109.0 501.9 110.0 510.6 111.0 508.1 112.0 517.4 113.0 520.0 114.0 528.9 115.0 527.5 116.0 531.2 117.0 532.6 118.0 530.9 119.0 526.5 120.0 526.2 121.0 519.5 122.0 523.0 123.0 512.3 124.0 510.1 125.0 512.7 126.0 512.4 127.0 507.3 128.0 510.3 129.0 501.3 130.0 499.2 131.0 502.4 132.0 495.8 133.0 489.1 134.0 497.2 135.0 508.1 136.0 512.0 137.0 510.4 138.0 508.3 139.0 501.6 140.0 491.6 141.0 493.3 142.0 492.3 143.0 494.0 144.0 507.5 145.0 502.0 146.0 501.3 147.0 491.0 148.0 486.1 149.0 493.3 150.0 490.5 151.0 490.6 152.0 497.4 153.0 500.4 154.0 498.1 155.0 485.1 156.0 486.6 157.0 473.6 158.0 478.5 159.0 475.9 160.0 472.7 161.0 482.6 162.0 482.5 163.0 475.2 164.0 519.7 165.0 545.8 166.0 542.5 167.0 540.6 168.0 546.0 169.0 542.7 170.0 539.2 171.0 536.7 172.0 551.7 173.0 538.4 174.0 541.0 175.0 550.5 176.0 553.2 177.0 546.0 178.0 550.7 179.0 549.3 180.0 545.9 181.0 550.9 182.0 548.2 183.0 546.5 184.0 541.7 185.0 534.6 186.0 531.6 187.0 534.5 188.0 537.2 189.0 527.3 190.0 536.1 191.0 538.4 192.0 548.4 193.0 544.3 194.0 555.0 195.0 557.7 196.0 562.4 197.0 558.9 198.0 556.4 199.0 563.1 200.0 557.2 201.0 549.1 202.0 549.6 203.0 547.6 204.0 546.6 205.0 549.9 206.0 542.1 207.0 549.8 208.0 545.5 209.0 549.5 210.0 563.3 211.0 562.6 212.0 568.5 213.0 573.8 214.0 573.8 215.0 569.4 216.0 560.3 217.0 555.3 218.0 566.5 219.0 565.5 220.0 563.4 221.0 562.5 222.0 573.8 223.0 563.7 224.0 570.8 225.0 496.3 226.0 506.7 227.0 510.5 228.0 509.0 229.0 506.8 230.0 514.4 231.0 527.4 232.0 516.0 233.0 526.2 234.0 523.7 235.0 524.8 236.0 527.9 237.0 525.6 238.0 521.0 239.0 515.7 240.0 509.6 241.0 507.2 242.0 513.7 243.0 510.0 244.0 506.7 245.0 507.5 246.0 511.7 247.0 510.3 248.0 510.7 249.0 514.6 250.0 519.2 251.0 533.9 252.0 540.2 253.0 542.7 254.0 552.3 255.0 547.0 256.0 558.0 257.0 543.0 258.0 556.7 259.0 542.3 260.0 510.1 261.0 490.6 262.0 494.5 263.0 491.4 264.0 501.4 265.0 498.4 266.0 501.3 267.0 503.0 268.0 503.4 269.0 509.4 270.0 519.2 271.0 516.1 272.0 520.7 273.0 532.6 274.0 537.2 275.0 531.1 276.0 535.2 277.0 524.9 278.0 525.9 279.0 532.5 280.0 531.9 281.0 541.6 282.0 540.5 283.0 533.6 284.0 529.1 285.0 534.9 286.0 535.3 287.0 555.8 288.0 561.2 289.0 557.4 290.0 532.6 291.0 512.2 292.0 494.5 293.0 498.4 294.0 494.8 295.0 488.0 296.0 503.3 297.0 507.8 298.0 495.5 299.0 466.5 300.0 463.0 301.0 460.5 302.0 473.3 303.0 478.4 304.0 484.9 305.0 489.1 306.0 482.0 307.0 473.9 308.0 467.9 309.0 458.6 310.0 469.1 311.0 471.5 312.0 479.7 313.0 477.5 314.0 480.0 315.0 468.1 316.0 468.1 317.0 468.6 318.0 470.1 319.0 466.1 320.0 465.7 321.0 463.0 322.0 464.1 323.0 454.6 324.0 468.6 325.0 463.0 326.0 514.8 327.0 526.4 328.0 537.0 329.0 536.4 330.0 538.4 331.0 514.9 332.0 520.2 333.0 498.7 334.0 504.1 335.0 504.4 336.0 504.3 337.0 499.7 338.0 508.3 339.0 524.9 340.0 502.7 341.0 494.3 342.0 489.9 343.0 475.8 344.0 492.0 345.0 493.7 346.0 501.1 347.0 503.2 348.0 495.1 349.0 501.7 350.0 501.9 351.0 510.6 352.0 521.5 353.0 530.9 354.0 547.0 355.0 554.4 356.0 543.1 357.0 538.9 358.0 528.4 359.0 527.1 360.0 528.4 361.0 529.1 362.0 529.1 363.0 522.2 364.0 516.9 365.0 521.3 366.0 513.9 367.0 508.4 368.0 498.2 369.0 501.0 370.0 516.7 371.0 513.3 372.0 516.1 373.0 509.8 374.0 512.4 375.0 517.0 376.0 522.9 377.0 527.5 378.0 521.3 379.0 508.0 380.0 508.4 381.0 503.8 382.0 503.0 383.0 503.3 384.0 510.6 385.0 516.9 386.0 526.9 387.0 517.9 388.0 521.7 389.0 516.4 390.0 503.5 391.0 504.0 392.0 504.9 393.0 491.1 394.0 490.8 395.0 487.9 396.0 489.8 397.0 491.7 398.0 496.7 399.0 499.0 400.0 485.4 401.0 489.6 402.0 486.1 403.0 481.9 404.0 467.9 405.0 468.2 406.0 476.3 407.0 482.3 408.0 487.2 409.0 492.9 410.0 505.9 411.0 493.0 412.0 495.9 413.0 495.9 414.0 492.6 415.0 485.5 416.0 479.3 417.0 487.0 418.0 486.5 419.0 493.8 420.0 489.5 421.0 486.1 422.0 493.1 423.0 485.9 424.0 477.2 425.0 491.6 426.0 491.3 427.0 492.9 428.0 504.8 429.0 487.1 430.0 473.1 431.0 457.4 432.0 469.3 433.0 461.9 434.0 468.3 435.0 460.9 436.0 455.3 437.0 453.1 438.0 449.1 439.0 463.4 440.0 466.3 441.0 469.4 442.0 469.3 443.0 465.9 444.0 479.7 445.0 474.8 446.0 479.8 447.0 481.5 448.0 469.0 449.0 479.5 450.0 482.1 451.0 482.9 452.0 482.7 453.0 484.9 454.0 477.4 455.0 497.6 456.0 500.8 457.0 488.9 458.0 487.4 459.0 501.4 460.0 510.5 461.0 513.0 462.0 505.4 463.0 494.5 464.0 496.5 465.0 496.9 466.0 493.3 467.0 488.8 468.0 479.1 469.0 478.6 470.0 471.6 471.0 477.1 472.0 467.6 473.0 481.6 474.0 473.3 475.0 476.7 476.0 470.1 477.0 467.0 478.0 476.3 479.0 469.2 480.0 474.9 481.0 460.0 482.0 465.2 483.0 475.7 484.0 512.8 485.0 522.8 486.0 524.7 487.0 528.3 488.0 539.8 489.0 539.8 490.0 525.1 491.0 528.3 492.0 519.6 493.0 515.3 494.0 514.5 495.0 507.7 496.0 568.6 497.0 558.2 498.0 547.7 499.0 549.1 500.0 550.3 501.0 560.2 502.0 557.9 503.0 555.8 504.0 542.3 505.0 547.9 506.0 550.8 507.0 544.2 508.0 542.1 509.0 541.6 510.0 543.8 511.0 554.3 512.0 557.4" fill="none" stroke="#eab839" stroke-width="1" stroke-linejoin="round"/><path d="M61.0 499.8 62.0 492.0 63.0 476.9 64.0 462.3 65.0 489.3 66.0 478.4 67.0 478.8 68.0 477.8 69.0 476.0 70.0 478.1 71.0 471.8 72.0 458.2 73.0 456.1 74.0 466.4 75.0 476.4 76.0 475.3 77.0 482.4 78.0 483.8 79.0 492.3 80.0 502.7 81.0 497.4 82.0 494.3 83.0 471.3 84.0 458.1 85.0 484.9 86.0 491.9 87.0 492.6 88.0 472.4 89.0 468.0 90.0 475.7 91.0 469.5 92.0 474.6 93.0 469.5 94.0 462.7 95.0 453.9 96.0 456.2 97.0 460.8 98.0 472.9 99.0 464.4 100.0 461.1 101.0 468.3 102.0 472.1 103.0 457.6 104.0 453.4 105.0 459.3 106.0 464.2 107.0 453.3 108.0 444.1 109.0 469.6 110.0 462.3 111.0 473.5 112.0 481.9 113.0 476.7 114.0 490.1 115.0 483.5 116.0 480.4 117.0 489.9 118.0 499.0 119.0 507.1 120.0 505.3 121.0 505.2 122.0 481.5 123.0 489.0 124.0 490.3 125.0 488.4 126.0 483.8 127.0 476.5 128.0 479.2 129.0 458.8 130.0 470.2 131.0 467.5 132.0 459.1 133.0 456.2 134.0 460.7 135.0 475.2 136.0 474.1 137.0 473.0 138.0 469.0 139.0 468.8 140.0 474.2 141.0 474.3 142.0 463.7 143.0 469.3 144.0 452.0 145.0 457.5 146.0 464.7 147.0 463.2 148.0 467.0 149.0 467.4 150.0 460.2 151.0 471.3 152.0 470.8 153.0 454.7 154.0 454.7 155.0 449.7 156.0 445.0 157.0 447.4 158.0 444.1 159.0 456.6 160.0 453.4 161.0 456.1 162.0 454.1 163.0 440.1 164.0 481.8 165.0 526.6 166.0 520.5 167.0 510.8 168.0 504.8 169.0 514.6 170.0 511.5 171.0 518.5 172.0 495.1 173.0 506.8 174.0 504.2 175.0 505.6 176.0 504.0 177.0 505.9 178.0 511.4 179.0 505.1 180.0 510.6 181.0 505.0 182.0 518.7 183.0 519.2 184.0 509.3 185.0 502.3 186.0 505.7 187.0 507.4 188.0 505.7 189.0 510.6 190.0 499.1 191.0 507.7 192.0 510.9 193.0 522.6 194.0 532.8 195.0 521.6 196.0 517.8 197.0 523.1 198.0 525.7 199.0 518.2 200.0 522.6 201.0 510.5 202.0 513.8 203.0 512.9 204.0 504.7 205.0 506.8 206.0 498.4 207.0 512.2 208.0 514.0 209.0 526.2 210.0 535.9 211.0 540.7 212.0 531.7 213.0 544.9 214.0 534.8 215.0 529.9 216.0 536.0 217.0 521.5 218.0 531.3 219.0 527.3 220.0 536.6 221.0 530.7 222.0 541.5 223.0 531.9 224.0 537.8 225.0 473.6 226.0 466.3 227.0 466.2 228.0 467.8 229.0 467.6 230.0 471.7 231.0 489.1 232.0 482.3 233.0 486.7 234.0 500.1 235.0 493.5 236.0 501.2 237.0 482.5 238.0 490.0 239.0 486.6 240.0 476.7 241.0 482.2 242.0 475.6 243.0 483.1 244.0 479.5 245.0 488.5 246.0 485.6 247.0 482.4 248.0 491.1 249.0 489.8 250.0 503.8 251.0 505.6 252.0 506.4 253.0 507.6 254.0 516.2 255.0 525.7 256.0 528.8 257.0 534.2 258.0 534.2 259.0 527.2 260.0 496.2 261.0 465.6 262.0 455.2 263.0 462.1 264.0 456.5 265.0 463.6 266.0 453.6 267.0 483.6 268.0 482.2 269.0 486.4 270.0 475.3 271.0 487.4 272.0 495.7 273.0 500.8 274.0 489.6 275.0 489.6 276.0 492.9 277.0 496.1 278.0 494.6 279.0 489.8 280.0 492.2 281.0 496.6 282.0 501.0 283.0 513.1 284.0 501.3 285.0 506.7 286.0 499.4 287.0 496.2 288.0 506.6 289.0 512.3 290.0 504.1 291.0 507.7 292.0 461.7 293.0 475.3 294.0 457.5 295.0 455.3 296.0 465.3 297.0 474.5 298.0 435.9 299.0 428.4 300.0 430.8 301.0 452.7 302.0 444.4 303.0 446.7 304.0 437.1 305.0 442.5 306.0 424.6 307.0 423.5 308.0 425.4 309.0 424.5 310.0 420.3 311.0 428.6 312.0 411.6 313.0 422.8 314.0 440.1 315.0 436.3 316.0 443.0 317.0 436.1 318.0 445.2 319.0 439.8 320.0 420.5 321.0 411.6 322.0 417.4 323.0 413.7 324.0 422.2 325.0 428.1 326.0 445.1 327.0 468.4 328.0 485.2 329.0 472.7 330.0 485.8 331.0 478.5 332.0 478.6 333.0 492.5 334.0 484.3 335.0 470.7 336.0 475.7 337.0 481.1 338.0 483.6 339.0 489.7 340.0 466.2 341.0 463.7 342.0 441.6 343.0 438.4 344.0 452.6 345.0 457.1 346.0 454.6 347.0 458.2 348.0 457.0 349.0 469.5 350.0 460.9 351.0 477.9 352.0 487.0 353.0 473.3 354.0 463.1 355.0 449.3 356.0 460.6 357.0 463.7 358.0 440.8 359.0 457.0 360.0 466.0 361.0 476.3 362.0 471.2 363.0 451.9 364.0 457.5 365.0 454.8 366.0 458.0 367.0 449.1 368.0 465.1 369.0 461.3 370.0 467.4 371.0 471.6 372.0 478.6 373.0 461.7 374.0 448.4 375.0 450.4 376.0 447.8 377.0 451.5 378.0 447.9 379.0 455.8 380.0 460.0 381.0 464.9 382.0 479.1 383.0 466.7 384.0 466.6 385.0 465.1 386.0 460.0 387.0 451.6 388.0 451.3 389.0 451.2 390.0 433.9 391.0 437.9 392.0 443.3 393.0 453.0 394.0 448.5 395.0 456.9 396.0 451.8 397.0 444.1 398.0 444.5 399.0 439.3 400.0 449.2 401.0 459.0 402.0 464.3 403.0 465.1 404.0 444.1 405.0 444.1 406.0 458.5 407.0 463.0 408.0 479.4 409.0 473.1 410.0 467.3 411.0 446.4 412.0 448.6 413.0 450.7 414.0 454.6 415.0 458.3 416.0 458.4 417.0 459.4 418.0 465.2 419.0 468.4 420.0 469.0 421.0 462.9 422.0 462.1 423.0 466.5 424.0 453.5 425.0 449.4 426.0 445.2 427.0 446.9 428.0 448.3 429.0 455.0 430.0 440.9 431.0 447.4 432.0 428.8 433.0 432.3 434.0 429.0 435.0 437.8 436.0 441.9 437.0 442.6 438.0 436.5 439.0 429.5 440.0 429.3 441.0 430.5 442.0 433.0 443.0 429.9 444.0 422.4 445.0 434.4 446.0 427.3 447.0 419.6 448.0 431.7 449.0 443.5 450.0 441.9 451.0 447.6 452.0 440.5 453.0 428.7 454.0 424.5 455.0 452.2 456.0 444.5 457.0 443.4 458.0 463.9 459.0 464.9 460.0 463.3 461.0 473.1 462.0 464.1 463.0 463.7 464.0 471.3 465.0 454.5 466.0 454.2 467.0 444.6 468.0 434.7 469.0 440.1 470.0 443.3 471.0 439.8 472.0 443.3 473.0 440.4 474.0 456.9 475.0 452.0 476.0 452.7 477.0 433.3 478.0 439.0 479.0 444.7 480.0 447.2 481.0 447.6 482.0 443.0 483.0 440.9 484.0 477.2 485.0 482.2 486.0 490.6 487.0 499.4 488.0 500.1 489.0 491.6 490.0 494.0 491.0 493.0 492.0 488.4 493.0 481.3 494.0 492.0 495.0 484.7 496.0 511.9 497.0 508.4 498.0 508.5 499.0 505.3 500.0 502.5 501.0 497.3 502.0 505.5 503.0 511.1 504.0 503.1 505.0 515.0 506.0 514.5 507.0 490.0 508.0 505.7 509.0 505.0 510.0 511.4 511.0 515.4 512.0 517.0 L512.0 596 L61.0 596Z" fill="#6ed0e0" fill-opacity=".1"/><path d="M61.0 499.8 62.0 492.0 63.0 476.9 64.0 462.3 65.0 489.3 66.0 478.4 67.0 478.8 68.0 477.8 69.0 476.0 70.0 478.1 71.0 471.8 72.0 458.2 73.0 456.1 74.0 466.4 75.0 476.4 76.0 475.3 77.0 482.4 78.0 483.8 79.0 492.3 80.0 502.7 81.0 497.4 82.0 494.3 83.0 471.3 84.0 458.1 85.0 484.9 86.0 491.9 87.0 492.6 88.0 472.4 89.0 468.0 90.0 475.7 91.0 469.5 92.0 474.6 93.0 469.5 94.0 462.7 95.0 453.9 96.0 456.2 97.0 460.8 98.0 472.9 99.0 464.4 100.0 461.1 101.0 468.3 102.0 472.1 103.0 457.6 104.0 453.4 105.0 459.3 106.0 464.2 107.0 453.3 108.0 444.1 109.0 469.6 110.0 462.3 111.0 473.5 112.0 481.9 113.0 476.7 114.0 490.1 115.0 483.5 116.0 480.4 117.0 489.9 118.0 499.0 119.0 507.1 120.0 505.3 121.0 505.2 122.0 481.5 123.0 489.0 124.0 490.3 125.0 488.4 126.0 483.8 127.0 476.5 128.0 479.2 129.0 458.8 130.0 470.2 131.0 467.5 132.0 459.1 133.0 456.2 134.0 460.7 135.0 475.2 136.0 474.1 137.0 473.0 138.0 469.0 139.0 468.8 140.0 474.2 141.0 474.3 142.0 463.7 143.0 469.3 144.0 452.0 145.0 457.5 146.0 464.7 147.0 463.2 148.0 467.0 149.0 467.4 150.0 460.2 151.0 471.3 152.0 470.8 153.0 454.7 154.0 454.7 155.0 449.7 156.0 445.0 157.0 447.4 158.0 444.1 159.0 456.6 160.0 453.4 161.0 456.1 162.0 454.1 163.0 440.1 164.0 481.8 165.0 526.6 166.0 520.5 167.0 510.8 168.0 504.8 169.0 514.6 170.0 511.5 171.0 518.5 172.0 495.1 173.0 506.8 174.0 504.2 175.0 505.6 176.0 504.0 177.0 505.9 178.0 511.4 179.0 505.1 180.0 510.6 181.0 505.0 182.0 518.7 183.0 519.2 184.0 509.3 185.0 502.3 186.0 505.7 187.0 507.4 188.0 505.7 189.0 510.6 190.0 499.1 191.0 507.7 192.0 510.9 193.0 522.6 194.0 532.8 195.0 521.6 196.0 517.8 197.0 523.1 198.0 525.7 199.0 518.2 200.0 522.6 201.0 510.5 202.0 513.8 203.0 512.9 204.0 504.7 205.0 506.8 206.0 498.4 207.0 512.2 208.0 514.0 209.0 526.2 210.0 535.9 211.0 540.7 212.0 531.7 213.0 544.9 214.0 534.8 215.0 529.9 216.0 536.0 217.0 521.5 218.0 531.3 219.0 527.3 220.0 536.6 221.0 530.7 222.0 541.5 223.0 531.9 224.0 537.8 225.0 473.6 226.0 466.3 227.0 466.2 228.0 467.8 229.0 467.6 230.0 471.7 231.0 489.1 232.0 482.3 233.0 486.7 234.0 500.1 235.0 493.5 236.0 501.2 237.0 482.5 238.0 490.0 239.0 486.6 240.0 476.7 241.0 482.2 242.0 475.6 243.0 483.1 244.0 479.5 245.0 488.5 246.0 485.6 247.0 482.4 248.0 491.1 249.0 489.8 250.0 503.8 251.0 505.6 252.0 506.4 253.0 507.6 254.0 516.2 255.0 525.7 256.0 528.8 257.0 534.2 258.0 534.2 259.0 527.2 260.0 496.2 261.0 465.6 262.0 455.2 263.0 462.1 264.0 456.5 265.0 463.6 266.0 453.6 267.0 483.6 268.0 482.2 269.0 486.4 270.0 475.3 271.0 487.4 272.0 495.7 273.0 500.8 274.0 489.6 275.0 489.6 276.0 492.9 277.0 496.1 278.0 494.6 279.0 489.8 280.0 492.2 281.0 496.6 282.0 501.0 283.0 513.1 284.0 501.3 285.0 506.7 286.0 499.4 287.0 496.2 288.0 506.6 289.0 512.3 290.0 504.1 291.0 507.7 292.0 461.7 293.0 475.3 294.0 457.5 295.0 455.3 296.0 465.3 297.0 474.5 298.0 435.9 299.0 428.4 300.0 430.8 301.0 452.7 302.0 444.4 303.0 446.7 304.0 437.1 305.0 442.5 306.0 424.6 307.0 423.5 308.0 425.4 309.0 424.5 310.0 420.3 311.0 428.6 312.0 411.6 313.0 422.8 314.0 440.1 315.0 436.3 316.0 443.0 317.0 436.1 318.0 445.2 319.0 439.8 320.0 420.5 321.0 411.6 322.0 417.4 323.0 413.7 324.0 422.2 325.0 428.1 326.0 445.1 327.0 468.4 328.0 485.2 329.0 472.7 330.0 485.8 331.0 478.5 332.0 478.6 333.0 492.5 334.0 484.3 335.0 470.7 336.0 475.7 337.0 481.1 338.0 483.6 339.0 489.7 340.0 466.2 341.0 463.7 342.0 441.6 343.0 438.4 344.0 452.6 345.0 457.1 346.0 454.6 347.0 458.2 348.0 457.0 349.0 469.5 350.0 460.9 351.0 477.9 352.0 487.0 353.0 473.3 354.0 463.1 355.0 449.3 356.0 460.6 357.0 463.7 358.0 440.8 359.0 457.0 360.0 466.0 361.0 476.3 362.0 471.2 363.0 451.9 364.0 457.5 365.0 454.8 366.0 458.0 367.0 449.1 368.0 465.1 369.0 461.3 370.0 467.4 371.0 471.6 372.0 478.6 373.0 461.7 374.0 448.4 375.0 450.4 376.0 447.8 377.0 451.5 378.0 447.9 379.0 455.8 380.0 460.0 381.0 464.9 382.0 479.1 383.0 466.7 384.0 466.6 385.0 465.1 386.0 460.0 387.0 451.6 388.0 451.3 389.0 451.2 390.0 433.9 391.0 437.9 392.0 443.3 393.0 453.0 394.0 448.5 395.0 456.9 396.0 451.8 397.0 444.1 398.0 444.5 399.0 439.3 400.0 449.2 401.0 459.0 402.0 464.3 403.0 465.1 404.0 444.1 405.0 444.1 406.0 458.5 407.0 463.0 408.0 479.4 409.0 473.1 410.0 467.3 411.0 446.4 412.0 448.6 413.0 450.7 414.0 454.6 415.0 458.3 416.0 458.4 417.0 459.4 418.0 465.2 419.0 468.4 420.0 469.0 421.0 462.9 422.0 462.1 423.0 466.5 424.0 453.5 425.0 449.4 426.0 445.2 427.0 446.9 428.0 448.3 429.0 455.0 430.0 440.9 431.0 447.4 432.0 428.8 433.0 432.3 434.0 429.0 435.0 437.8 436.0 441.9 437.0 442.6 438.0 436.5 439.0 429.5 440.0 429.3 441.0 430.5 442.0 433.0 443.0 429.9 444.0 422.4 445.0 434.4 446.0 427.3 447.0 419.6 448.0 431.7 449.0 443.5 450.0 441.9 451.0 447.6 452.0 440.5 453.0 428.7 454.0 424.5 455.0 452.2 456.0 444.5 457.0 443.4 458.0 463.9 459.0 464.9 460.0 463.3 461.0 473.1 462.0 464.1 463.0 463.7 464.0 471.3 465.0 454.5 466.0 454.2 467.0 444.6 468.0 434.7 469.0 440.1 470.0 443.3 471.0 439.8 472.0 443.3 473.0 440.4 474.0 456.9 475.0 452.0 476.0 452.7 477.0 433.3 478.0 439.0 479.0 444.7 480.0 447.2 481.0 447.6 482.0 443.0 483.0 440.9 484.0 477.2 485.0 482.2 486.0 490.6 487.0 499.4 488.0 500.1 489.0 491.6 490.0 494.0 491.0 493.0 492.0 488.4 493.0 481.3 494.0 492.0 495.0 484.7 496.0 511.9 497.0 508.4 498.0 508.5 499.0 505.3 500.0 502.5 501.0 497.3 502.0 505.5 503.0 511.1 504.0 503.1 505.0 515.0 506.0 514.5 507.0 490.0 508.0 505.7 509.0 505.0 510.0 511.4 511.0 515.4 512.0 517.0" fill="none" stroke="#6ed0e0" stroke-width="1" stroke-linejoin="round"/></g></svg>
<div class="a ax r" style="left:-24px;width:80px;top:392.7px"><span class="sr" style="transform:scaleX(.955)">238 V</span></div>
<div class="a ax r" style="left:-24px;width:80px;top:432.1px"><span class="sr" style="transform:scaleX(.955)">236 V</span></div>
<div class="a ax r" style="left:-24px;width:80px;top:471.4px"><span class="sr" style="transform:scaleX(.955)">234 V</span></div>
<div class="a ax r" style="left:-24px;width:80px;top:510.8px"><span class="sr" style="transform:scaleX(.955)">232 V</span></div>
<div class="a ax r" style="left:-24px;width:80px;top:550.1px"><span class="sr" style="transform:scaleX(.955)">230 V</span></div>
<div class="a ax r" style="left:-24px;width:80px;top:589.5px"><span class="sr" style="transform:scaleX(.955)">228 V</span></div>
<div class="a ax c" style="left:86.4px;width:60px;top:603px"><span class="sc" style="transform:scaleX(.957)">00:00</span></div>
<div class="a ax c" style="left:161.6px;width:60px;top:603px"><span class="sc" style="transform:scaleX(.957)">04:00</span></div>
<div class="a ax c" style="left:236.7px;width:60px;top:603px"><span class="sc" style="transform:scaleX(.957)">08:00</span></div>
<div class="a ax c" style="left:311.9px;width:60px;top:603px"><span class="sc" style="transform:scaleX(.957)">12:00</span></div>
<div class="a ax c" style="left:387.1px;width:60px;top:603px"><span class="sc" style="transform:scaleX(.957)">16:00</span></div>
<div class="a ax c" style="left:462.2px;width:60px;top:603px"><span class="sc" style="transform:scaleX(.957)">20:00</span></div>
<div class="a lh r" style="left:301.0px;width:70px;top:626px">min</div>
<div class="a lh r" style="left:370.0px;width:70px;top:626px">max</div>
<div class="a lh r" style="left:439.0px;width:70px;top:626px">current</div>
<div class="a" style="left:33px;top:663px;width:485px;height:21px;background:#262628"></div>
<div class="a" style="left:33px;top:654px;width:12px;height:3px;background:#7eb26d;border-radius:1px"></div>
<div class="a ln" style="left:52px;top:646px"><span class="sl" style="transform:scaleX(.9)">L1</span></div>
<div class="a lg r" style="left:281.0px;width:90px;top:646px">229.16 V</div>
<div class="a lg r" style="left:350.0px;width:90px;top:646px">236.99 V</div>
<div class="a lg r" style="left:419.0px;width:90px;top:646px">231.01 V</div>
<div class="a" style="left:33px;top:674px;width:12px;height:3px;background:#eab839;border-radius:1px"></div>
<div class="a ln" style="left:52px;top:666px"><span class="sl" style="transform:scaleX(.9)">L2</span></div>
<div class="a lg r" style="left:281.0px;width:90px;top:666px">229.13 V</div>
<div class="a lg r" style="left:350.0px;width:90px;top:666px">235.49 V</div>
<div class="a lg r" style="left:419.0px;width:90px;top:666px">230.16 V</div>
<div class="a" style="left:33px;top:695px;width:12px;height:3px;background:#6ed0e0;border-radius:1px"></div>
<div class="a ln" style="left:52px;top:687px"><span class="sl" style="transform:scaleX(.9)">L3</span></div>
<div class="a lg r" style="left:281.0px;width:90px;top:687px">230.57 V</div>
<div class="a lg r" style="left:350.0px;width:90px;top:687px">237.37 V</div>
<div class="a lg r" style="left:419.0px;width:90px;top:687px">232.32 V</div>
<div class="a ttl" style="left:544.8px;top:371px;width:518.8px"><span>Strom</span></div>
<svg class="a" style="left:0;top:390px" width="1607" height="215" viewBox="0 390 1607 215"><path d="M593 399.5H1041" stroke="#fff" stroke-opacity=".16" stroke-width="1"/><path d="M593 438.5H1041" stroke="#fff" stroke-opacity=".16" stroke-width="1"/><path d="M593 477.5H1041" stroke="#fff" stroke-opacity=".16" stroke-width="1"/><path d="M593 517.5H1041" stroke="#fff" stroke-opacity=".16" stroke-width="1"/><path d="M593 556.5H1041" stroke="#fff" stroke-opacity=".16" stroke-width="1"/><path d="M593 596.5H1041" stroke="#fff" stroke-opacity=".16" stroke-width="1"/><path d="M647.5 399V596" stroke="#fff" stroke-opacity=".16" stroke-width="1"/><path d="M722.5 399V596" stroke="#fff" stroke-opacity=".16" stroke-width="1"/><path d="M796.5 399V596" stroke="#fff" stroke-opacity=".16" stroke-width="1"/><path d="M871.5 399V596" stroke="#fff" stroke-opacity=".16" stroke-width="1"/><path d="M946.5 399V596" stroke="#fff" stroke-opacity=".16" stroke-width="1"/><path d="M1020.5 399V596" stroke="#fff" stroke-opacity=".16" stroke-width="1"/><clipPath id="cp593"><rect x="593" y="396" width="448" height="201.500"/></clipPath><g clip-path="url(#cp593)"><path d="M593.0 587.7 593.5 587.7 594.0 587.7 594.5 587.7 595.0 587.7 595.5 587.7 596.0 587.7 596.5 587.7 597.0 587.7 597.5 587.7 598.0 587.7 598.5 587.7 599.0 587.7 599.5 587.7 600.0 587.7 600.5 587.7 601.0 587.7 601.5 587.7 602.0 587.7 602.5 587.7 603.0 587.7 603.5 587.7 604.0 587.7 604.5 587.7 605.0 587.7 605.5 587.7 606.0 587.7 606.5 587.7 607.0 587.7 607.5 587.7 607.9 587.7 608.4 587.7 608.9 587.7 609.4 587.7 609.9 587.7 610.4 587.7 610.9 587.7 611.4 587.7 611.9 587.7 612.4 587.7 612.9 587.7 613.4 587.7 613.9 587.7 614.4 587.7 614.9 587.7 615.4 587.7 615.9 587.7 616.4 587.7 616.9 587.7 617.4 587.7 617.9 587.7 618.4 587.7 618.9 587.7 619.4 587.7 619.9 587.7 620.4 587.7 620.9 587.7 621.4 587.7 621.9 587.7 622.4 587.7 622.9 587.7 623.4 587.7 623.9 587.7 624.4 587.7 624.9 587.7 625.4 587.7 625.9 587.7 626.4 584.0 626.9 580.4 627.4 576.7 627.9 576.7 628.4 576.7 628.9 576.7 629.4 576.7 629.9 576.7 630.4 576.7 630.9 576.7 631.4 576.7 631.9 576.7 632.4 576.7 632.9 576.7 633.4 576.7 633.9 576.7 634.4 576.8 634.9 576.8 635.4 576.8 635.9 576.8 636.4 576.8 636.9 576.8 637.4 576.8 637.8 576.8 638.3 576.8 638.8 576.8 639.3 576.8 639.8 576.8 640.3 576.8 640.8 576.8 641.3 576.8 641.8 576.8 642.3 576.8 642.8 576.9 643.3 576.9 643.8 576.9 644.3 576.9 644.8 576.9 645.3 576.9 645.8 576.9 646.3 576.9 646.8 576.9 647.3 576.9 647.8 576.9 648.3 576.9 648.8 576.9 649.3 576.9 649.8 576.9 650.3 576.9 650.8 576.9 651.3 577.0 651.8 577.0 652.3 577.0 652.8 577.0 653.3 577.0 653.8 577.0 654.3 577.0 654.8 577.0 655.3 577.0 655.8 577.0 656.3 577.0 656.8 577.0 657.3 577.0 657.8 577.0 658.3 577.0 658.8 577.0 659.3 577.0 659.8 577.0 660.3 577.1 660.8 577.1 661.3 577.1 661.8 577.1 662.3 577.1 662.8 577.1 663.3 577.1 663.8 577.1 664.3 577.1 664.8 577.1 665.3 577.1 665.8 577.1 666.3 577.1 666.8 577.1 667.3 577.1 667.7 577.1 668.2 577.1 668.7 577.2 669.2 577.5 669.7 580.2 670.2 583.0 670.7 585.8 671.2 588.5 671.7 588.5 672.2 588.5 672.7 588.5 673.2 588.5 673.7 588.5 674.2 588.5 674.7 588.5 675.2 588.5 675.7 588.5 676.2 588.5 676.7 588.5 677.2 588.5 677.7 588.5 678.2 588.5 678.7 588.5 679.2 588.5 679.7 588.5 680.2 588.5 680.7 588.5 681.2 588.5 681.7 588.5 682.2 588.5 682.7 588.5 683.2 588.5 683.7 588.4 684.2 588.4 684.7 588.4 685.2 588.4 685.7 588.4 686.2 588.4 686.7 588.4 687.2 588.4 687.7 588.4 688.2 588.4 688.7 588.4 689.2 588.4 689.7 588.4 690.2 588.4 690.7 588.4 691.2 588.4 691.7 588.4 692.2 588.4 692.7 588.4 693.2 588.4 693.7 588.4 694.2 588.4 694.7 588.4 695.2 588.4 695.7 588.4 696.2 588.4 696.7 588.4 697.2 588.4 697.6 588.4 698.1 588.4 698.6 588.4 699.1 588.4 699.6 588.4 700.1 588.4 700.6 588.4 701.1 588.4 701.6 588.4 702.1 588.4 702.6 588.4 703.1 588.3 703.6 588.3 704.1 588.3 704.6 588.3 705.1 588.3 705.6 588.3 706.1 588.3 706.6 588.3 707.1 588.3 707.6 588.3 708.1 588.3 708.6 588.3 709.1 588.3 709.6 588.3 710.1 588.3 710.6 588.3 711.1 588.3 711.6 588.3 712.1 588.3 712.6 588.3 713.1 588.3 713.6 588.3 714.1 588.3 714.6 588.3 715.1 588.3 715.6 588.3 716.1 588.3 716.6 588.3 717.1 588.3 717.6 588.3 718.1 588.3 718.6 588.3 719.1 588.3 719.6 588.3 720.1 588.3 720.6 588.3 721.1 588.3 721.6 588.3 722.1 588.3 722.6 588.2 723.1 588.2 723.6 588.2 724.1 588.2 724.6 588.2 725.1 588.2 725.6 588.2 726.1 588.2 726.6 588.2 727.1 588.2 727.5 588.2 728.0 588.2 728.5 588.2 729.0 588.2 729.5 588.2 730.0 588.2 730.5 588.2 731.0 588.2 731.5 588.2 732.0 588.2 732.5 588.2 733.0 588.2 733.5 588.2 734.0 588.2 734.5 588.2 735.0 588.2 735.5 588.2 736.0 588.2 736.5 588.2 737.0 588.2 737.5 588.2 738.0 588.2 738.5 588.2 739.0 588.2 739.5 588.2 740.0 588.2 740.5 588.2 741.0 588.2 741.5 588.2 742.0 588.1 742.5 588.1 743.0 588.1 743.5 588.1 744.0 588.1 744.5 588.1 745.0 588.1 745.5 588.1 746.0 588.1 746.5 588.1 747.0 588.1 747.5 588.1 748.0 588.1 748.5 588.1 749.0 588.1 749.5 588.1 750.0 588.1 750.5 588.1 751.0 588.1 751.5 588.1 752.0 588.1 752.5 588.1 753.0 588.1 753.5 588.1 754.0 588.1 754.5 588.1 755.0 588.1 755.5 588.1 756.0 588.1 756.5 588.1 757.0 588.1 757.4 588.1 757.9 588.1 758.4 588.1 758.9 588.1 759.4 588.1 759.9 588.1 760.4 588.1 760.9 588.1 761.4 588.1 761.9 588.0 762.4 588.0 762.9 588.0 763.4 588.0 763.9 588.0 764.4 588.0 764.9 588.0 765.4 588.0 765.9 588.0 766.4 588.0 766.9 588.0 767.4 588.0 767.9 588.0 768.4 588.0 768.9 588.0 769.4 588.0 769.9 588.0 770.4 588.0 770.9 588.0 771.4 588.0 771.9 588.0 772.4 588.0 772.9 588.0 773.4 588.0 773.9 588.0 774.4 588.0 774.9 588.0 775.4 588.0 775.9 588.0 776.4 588.0 776.9 588.0 777.4 588.0 777.9 588.0 778.4 588.0 778.9 588.0 779.4 588.0 779.9 588.0 780.4 588.0 780.9 588.0 781.4 587.9 781.9 587.9 782.4 587.9 782.9 587.9 783.4 587.9 783.9 587.9 784.4 587.9 784.9 587.9 785.4 587.9 785.9 587.9 786.4 587.9 786.9 587.9 787.3 587.9 787.8 587.9 788.3 587.9 788.8 587.9 789.3 587.9 789.8 587.9 790.3 587.9 790.8 587.9 791.3 587.9 791.8 587.9 792.3 587.9 792.8 587.9 793.3 587.9 793.8 587.9 794.3 587.9 794.8 587.9 795.3 587.9 795.8 587.9 796.3 587.9 796.8 587.9 797.3 587.9 797.8 587.9 798.3 587.9 798.8 587.9 799.3 587.9 799.8 587.9 800.3 587.9 800.8 587.8 801.3 587.8 801.8 587.8 802.3 587.8 802.8 587.8 803.3 587.8 803.8 587.8 804.3 587.8 804.8 587.8 805.3 587.8 805.8 587.8 806.3 587.8 806.8 587.8 807.3 587.8 807.8 587.8 808.3 587.8 808.8 587.8 809.3 587.8 809.8 587.8 810.3 587.8 810.8 587.8 811.3 587.8 811.8 587.8 812.3 587.8 812.8 587.8 813.3 587.8 813.8 587.8 814.3 587.8 814.8 587.8 815.3 587.8 815.8 587.8 816.3 587.8 816.8 587.8 817.2 587.8 817.7 587.8 818.2 587.8 818.7 587.8 819.2 587.8 819.7 587.8 820.2 587.7 820.7 587.7 821.2 587.7 821.7 587.7 822.2 587.7 822.7 587.7 823.2 587.7 823.7 587.7 824.2 587.7 824.7 587.7 825.2 587.7 825.7 587.7 826.2 587.7 826.7 587.7 827.2 587.7 827.7 587.7 828.2 587.7 828.7 587.7 829.2 587.7 829.7 587.7 830.2 587.7 830.7 587.7 831.2 587.7 831.7 587.7 832.2 587.7 832.7 587.7 833.2 587.7 833.7 587.7 834.2 587.7 834.7 587.7 835.2 587.7 835.7 587.7 836.2 587.7 836.7 587.7 837.2 587.7 837.7 587.7 838.2 587.7 838.7 587.7 839.2 587.7 839.7 587.6 840.2 587.6 840.7 587.6 841.2 587.6 841.7 587.6 842.2 587.6 842.7 587.6 843.2 587.6 843.7 587.6 844.2 587.6 844.7 587.6 845.2 587.6 845.7 587.6 846.2 587.6 846.7 587.6 847.1 587.6 847.6 587.6 848.1 587.6 848.6 587.6 849.1 587.6 849.6 587.6 850.1 587.6 850.6 587.6 851.1 587.6 851.6 587.6 852.1 587.6 852.6 587.6 853.1 587.6 853.6 587.6 854.1 587.6 854.6 587.6 855.1 587.6 855.6 587.6 856.1 587.6 856.6 587.6 857.1 587.6 857.6 587.6 858.1 587.6 858.6 587.6 859.1 587.6 859.6 587.5 860.1 587.5 860.6 587.5 861.1 587.5 861.6 587.5 862.1 587.5 862.6 587.5 863.1 587.5 863.6 587.5 864.1 587.5 864.6 587.5 865.1 587.5 865.6 587.5 866.1 587.5 866.6 587.5 867.1 587.5 867.6 587.5 868.1 587.5 868.6 587.5 869.1 587.5 869.6 587.5 870.1 587.5 870.6 587.5 871.1 587.5 871.6 587.5 872.1 587.5 872.6 587.5 873.1 587.5 873.6 587.5 874.1 587.5 874.6 587.5 875.1 587.5 875.6 587.5 876.1 587.5 876.6 587.5 877.0 587.5 877.5 587.5 878.0 587.5 878.5 587.5 879.0 587.4 879.5 587.4 880.0 587.4 880.5 587.4 881.0 587.4 881.5 587.4 882.0 587.4 882.5 587.4 883.0 587.4 883.5 587.4 884.0 587.4 884.5 587.4 885.0 587.4 885.5 587.4 886.0 587.4 886.5 587.4 887.0 587.4 887.5 587.4 888.0 587.4 888.5 587.4 889.0 587.4 889.5 587.4 890.0 587.4 890.5 587.4 891.0 587.4 891.5 587.4 892.0 587.4 892.5 587.4 893.0 587.4 893.5 587.4 894.0 587.4 894.5 587.4 895.0 587.4 895.5 587.4 896.0 587.4 896.5 587.4 897.0 587.4 897.5 587.4 898.0 587.4 898.5 587.3 899.0 587.3 899.5 587.3 900.0 587.3 900.5 587.3 901.0 587.3 901.5 587.3 902.0 587.3 902.5 587.3 903.0 587.3 903.5 587.3 904.0 587.3 904.5 587.3 905.0 587.3 905.5 587.3 906.0 587.3 906.5 587.3 906.9 587.3 907.4 587.3 907.9 587.3 908.4 587.3 908.9 587.3 909.4 587.3 909.9 587.3 910.4 587.3 910.9 587.3 911.4 587.3 911.9 587.3 912.4 587.3 912.9 587.3 913.4 587.3 913.9 587.3 914.4 587.3 914.9 587.3 915.4 587.3 915.9 587.3 916.4 587.3 916.9 587.3 917.4 587.3 917.9 587.2 918.4 587.2 918.9 587.2 919.4 587.2 919.9 587.2 920.4 587.2 920.9 587.2 921.4 587.2 921.9 587.2 922.4 587.2 922.9 587.2 923.4 587.2 923.9 587.2 924.4 587.2 924.9 587.2 925.4 587.2 925.9 587.2 926.4 587.2 926.9 587.2 927.4 587.2 927.9 587.2 928.4 587.2 928.9 587.2 929.4 587.2 929.9 587.2 930.4 587.2 930.9 587.2 931.4 587.2 931.9 587.2 932.4 587.2 932.9 587.2 933.4 587.2 933.9 587.2 934.4 587.2 934.9 587.2 935.4 587.2 935.9 587.2 936.4 587.2 936.8 587.2 937.3 587.1 937.8 587.1 938.3 587.1 938.8 587.1 939.3 587.1 939.8 587.1 940.3 587.1 940.8 587.1 941.3 587.1 941.8 587.1 942.3 587.1 942.8 587.1 943.3 587.1 943.8 587.1 944.3 587.1 944.8 587.1 945.3 587.1 945.8 587.1 946.3 587.1 946.8 587.1 947.3 587.1 947.8 587.1 948.3 587.1 948.8 587.1 949.3 587.1 949.8 587.1 950.3 587.1 950.8 587.1 951.3 587.1 951.8 587.1 952.3 587.1 952.8 587.1 953.3 587.1 953.8 587.1 954.3 587.1 954.8 587.1 955.3 587.1 955.8 587.1 956.3 587.1 956.8 587.1 957.3 587.0 957.8 587.0 958.3 587.0 958.8 587.0 959.3 587.0 959.8 587.0 960.3 587.0 960.8 587.0 961.3 587.0 961.8 587.0 962.3 587.0 962.8 587.0 963.3 587.0 963.8 587.0 964.3 587.0 964.8 587.0 965.3 587.0 965.8 587.0 966.3 587.0 966.7 587.0 967.2 587.0 967.7 587.0 968.2 587.0 968.7 587.0 969.2 587.0 969.7 587.0 970.2 587.0 970.7 587.0 971.2 587.0 971.7 587.0 972.2 587.0 972.7 587.0 973.2 587.0 973.7 587.0 974.2 587.0 974.7 587.0 975.2 587.0 975.7 587.0 976.2 587.0 976.7 586.9 977.2 586.9 977.7 586.9 978.2 586.9 978.7 586.9 979.2 586.9 979.7 586.9 980.2 586.9 980.7 586.9 981.2 586.9 981.7 586.9 982.2 586.9 982.7 586.9 983.2 586.9 983.7 586.9 984.2 586.9 984.7 586.9 985.2 586.9 985.7 586.9 986.2 586.9 986.7 586.9 987.2 586.9 987.7 586.9 988.2 586.9 988.7 586.9 989.2 586.9 989.7 586.9 990.2 586.9 990.7 586.9 991.2 586.9 991.7 586.9 992.2 586.9 992.7 586.9 993.2 586.9 993.7 586.9 994.2 586.9 994.7 586.9 995.2 586.9 995.7 586.9 996.2 586.8 996.6 586.8 997.1 586.8 997.6 586.8 998.1 586.8 998.6 586.8 999.1 586.8 999.6 586.8 1000.1 586.8 1000.6 586.8 1001.1 586.8 1001.6 586.8 1002.1 586.8 1002.6 586.8 1003.1 586.8 1003.6 586.8 1004.1 586.8 1004.6 586.8 1005.1 586.8 1005.6 586.8 1006.1 586.8 1006.6 586.8 1007.1 586.8 1007.6 586.8 1008.1 586.8 1008.6 586.8 1009.1 586.8 1009.6 586.8 1010.1 586.8 1010.6 586.8 1011.1 586.8 1011.6 586.8 1012.1 586.8 1012.6 586.8 1013.1 586.8 1013.6 586.8 1014.1 586.8 1014.6 586.8 1015.1 586.8 1015.6 586.7 1016.1 586.7 1016.6 586.7 1017.1 586.7 1017.6 586.7 1018.1 586.7 1018.6 586.7 1019.1 586.7 1019.6 586.7 1020.1 586.7 1020.6 586.7 1021.1 586.7 1021.6 586.7 1022.1 586.7 1022.6 586.7 1023.1 586.7 1023.6 586.7 1024.1 586.7 1024.6 586.7 1025.1 586.7 1025.6 586.7 1026.1 586.7 1026.5 586.7 1027.0 586.7 1027.5 586.7 1028.0 586.7 1028.5 586.7 1029.0 586.7 1029.5 586.7 1030.0 586.7 1030.5 586.7 1031.0 586.7 1031.5 586.7 1032.0 586.7 1032.5 586.7 1033.0 586.7 1033.5 586.7 1034.0 586.7 1034.5 586.7 1035.0 586.6 1035.5 586.6 1036.0 575.1 1036.5 575.1 1037.0 575.1 1037.5 575.1 1038.0 575.1 1038.5 575.1 1039.0 575.1 1039.5 575.1 1040.0 575.1 1040.5 575.1 1041.0 575.1 L1041.0 596 L593.0 596Z" fill="#7eb26d" fill-opacity=".1"/><path d="M593.0 587.7 593.5 587.7 594.0 587.7 594.5 587.7 595.0 587.7 595.5 587.7 596.0 587.7 596.5 587.7 597.0 587.7 597.5 587.7 598.0 587.7 598.5 587.7 599.0 587.7 599.5 587.7 600.0 587.7 600.5 587.7 601.0 587.7 601.5 587.7 602.0 587.7 602.5 587.7 603.0 587.7 603.5 587.7 604.0 587.7 604.5 587.7 605.0 587.7 605.5 587.7 606.0 587.7 606.5 587.7 607.0 587.7 607.5 587.7 607.9 587.7 608.4 587.7 608.9 587.7 609.4 587.7 609.9 587.7 610.4 587.7 610.9 587.7 611.4 587.7 611.9 587.7 612.4 587.7 612.9 587.7 613.4 587.7 613.9 587.7 614.4 587.7 614.9 587.7 615.4 587.7 615.9 587.7 616.4 587.7 616.9 587.7 617.4 587.7 617.9 587.7 618.4 587.7 618.9 587.7 619.4 587.7 619.9 587.7 620.4 587.7 620.9 587.7 621.4 587.7 621.9 587.7 622.4 587.7 622.9 587.7 623.4 587.7 623.9 587.7 624.4 587.7 624.9 587.7 625.4 587.7 625.9 587.7 626.4 584.0 626.9 580.4 627.4 576.7 627.9 576.7 628.4 576.7 628.9 576.7 629.4 576.7 629.9 576.7 630.4 576.7 630.9 576.7 631.4 576.7 631.9 576.7 632.4 576.7 632.9 576.7 633.4 576.7 633.9 576.7 634.4 576.8 634.9 576.8 635.4 576.8 635.9 576.8 636.4 576.8 636.9 576.8 637.4 576.8 637.8 576.8 638.3 576.8 638.8 576.8 639.3 576.8 639.8 576.8 640.3 576.8 640.8 576.8 641.3 576.8 641.8 576.8 642.3 576.8 642.8 576.9 643.3 576.9 643.8 576.9 644.3 576.9 644.8 576.9 645.3 576.9 645.8 576.9 646.3 576.9 646.8 576.9 647.3 576.9 647.8 576.9 648.3 576.9 648.8 576.9 649.3 576.9 649.8 576.9 650.3 576.9 650.8 576.9 651.3 577.0 651.8 577.0 652.3 577.0 652.8 577.0 653.3 577.0 653.8 577.0 654.3 577.0 654.8 577.0 655.3 577.0 655.8 577.0 656.3 577.0 656.8 577.0 657.3 577.0 657.8 577.0 658.3 577.0 658.8 577.0 659.3 577.0 659.8 577.0 660.3 577.1 660.8 577.1 661.3 577.1 661.8 577.1 662.3 577.1 662.8 577.1 663.3 577.1 663.8 577.1 664.3 577.1 664.8 577.1 665.3 577.1 665.8 577.1 666.3 577.1 666.8 577.1 667.3 577.1 667.7 577.1 668.2 577.1 668.7 577.2 669.2 577.5 669.7 580.2 670.2 583.0 670.7 585.8 671.2 588.5 671.7 588.5 672.2 588.5 672.7 588.5 673.2 588.5 673.7 588.5 674.2 588.5 674.7 588.5 675.2 588.5 675.7 588.5 676.2 588.5 676.7 588.5 677.2 588.5 677.7 588.5 678.2 588.5 678.7 588.5 679.2 588.5 679.7 588.5 680.2 588.5 680.7 588.5 681.2 588.5 681.7 588.5 682.2 588.5 682.7 588.5 683.2 588.5 683.7 588.4 684.2 588.4 684.7 588.4 685.2 588.4 685.7 588.4 686.2 588.4 686.7 588.4 687.2 588.4 687.7 588.4 688.2 588.4 688.7 588.4 689.2 588.4 689.7 588.4 690.2 588.4 690.7 588.4 691.2 588.4 691.7 588.4 692.2 588.4 692.7 588.4 693.2 588.4 693.7 588.4 694.2 588.4 694.7 588.4 695.2 588.4 695.7 588.4 696.2 588.4 696.7 588.4 697.2 588.4 697.6 588.4 698.1 588.4 698.6 588.4 699.1 588.4 699.6 588.4 700.1 588.4 700.6 588.4 701.1 588.4 701.6 588.4 702.1 588.4 702.6 588.4 703.1 588.3 703.6 588.3 704.1 588.3 704.6 588.3 705.1 588.3 705.6 588.3 706.1 588.3 706.6 588.3 707.1 588.3 707.6 588.3 708.1 588.3 708.6 588.3 709.1 588.3 709.6 588.3 710.1 588.3 710.6 588.3 711.1 588.3 711.6 588.3 712.1 588.3 712.6 588.3 713.1 588.3 713.6 588.3 714.1 588.3 714.6 588.3 715.1 588.3 715.6 588.3 716.1 588.3 716.6 588.3 717.1 588.3 717.6 588.3 718.1 588.3 718.6 588.3 719.1 588.3 719.6 588.3 720.1 588.3 720.6 588.3 721.1 588.3 721.6 588.3 722.1 588.3 722.6 588.2 723.1 588.2 723.6 588.2 724.1 588.2 724.6 588.2 725.1 588.2 725.6 588.2 726.1 588.2 726.6 588.2 727.1 588.2 727.5 588.2 728.0 588.2 728.5 588.2 729.0 588.2 729.5 588.2 730.0 588.2 730.5 588.2 731.0 588.2 731.5 588.2 732.0 588.2 732.5 588.2 733.0 588.2 733.5 588.2 734.0 588.2 734.5 588.2 735.0 588.2 735.5 588.2 736.0 588.2 736.5 588.2 737.0 588.2 737.5 588.2 738.0 588.2 738.5 588.2 739.0 588.2 739.5 588.2 740.0 588.2 740.5 588.2 741.0 588.2 741.5 588.2 742.0 588.1 742.5 588.1 743.0 588.1 743.5 588.1 744.0 588.1 744.5 588.1 745.0 588.1 745.5 588.1 746.0 588.1 746.5 588.1 747.0 588.1 747.5 588.1 748.0 588.1 748.5 588.1 749.0 588.1 749.5 588.1 750.0 588.1 750.5 588.1 751.0 588.1 751.5 588.1 752.0 588.1 752.5 588.1 753.0 588.1 753.5 588.1 754.0 588.1 754.5 588.1 755.0 588.1 755.5 588.1 756.0 588.1 756.5 588.1 757.0 588.1 757.4 588.1 757.9 588.1 758.4 588.1 758.9 588.1 759.4 588.1 759.9 588.1 760.4 588.1 760.9 588.1 761.4 588.1 761.9 588.0 762.4 588.0 762.9 588.0 763.4 588.0 763.9 588.0 764.4 588.0 764.9 588.0 765.4 588.0 765.9 588.0 766.4 588.0 766.9 588.0 767.4 588.0 767.9 588.0 768.4 588.0 768.9 588.0 769.4 588.0 769.9 588.0 770.4 588.0 770.9 588.0 771.4 588.0 771.9 588.0 772.4 588.0 772.9 588.0 773.4 588.0 773.9 588.0 774.4 588.0 774.9 588.0 775.4 588.0 775.9 588.0 776.4 588.0 776.9 588.0 777.4 588.0 777.9 588.0 778.4 588.0 778.9 588.0 779.4 588.0 779.9 588.0 780.4 588.0 780.9 588.0 781.4 587.9 781.9 587.9 782.4 587.9 782.9 587.9 783.4 587.9 783.9 587.9 784.4 587.9 784.9 587.9 785.4 587.9 785.9 587.9 786.4 587.9 786.9 587.9 787.3 587.9 787.8 587.9 788.3 587.9 788.8 587.9 789.3 587.9 789.8 587.9 790.3 587.9 790.8 587.9 791.3 587.9 791.8 587.9 792.3 587.9 792.8 587.9 793.3 587.9 793.8 587.9 794.3 587.9 794.8 587.9 795.3 587.9 795.8 587.9 796.3 587.9 796.8 587.9 797.3 587.9 797.8 587.9 798.3 587.9 798.8 587.9 799.3 587.9 799.8 587.9 800.3 587.9 800.8 587.8 801.3 587.8 801.8 587.8 802.3 587.8 802.8 587.8 803.3 587.8 803.8 587.8 804.3 587.8 804.8 587.8 805.3 587.8 805.8 587.8 806.3 587.8 806.8 587.8 807.3 587.8 807.8 587.8 808.3 587.8 808.8 587.8 809.3 587.8 809.8 587.8 810.3 587.8 810.8 587.8 811.3 587.8 811.8 587.8 812.3 587.8 812.8 587.8 813.3 587.8 813.8 587.8 814.3 587.8 814.8 587.8 815.3 587.8 815.8 587.8 816.3 587.8 816.8 587.8 817.2 587.8 817.7 587.8 818.2 587.8 818.7 587.8 819.2 587.8 819.7 587.8 820.2 587.7 820.7 587.7 821.2 587.7 821.7 587.7 822.2 587.7 822.7 587.7 823.2 587.7 823.7 587.7 824.2 587.7 824.7 587.7 825.2 587.7 825.7 587.7 826.2 587.7 826.7 587.7 827.2 587.7 827.7 587.7 828.2 587.7 828.7 587.7 829.2 587.7 829.7 587.7 830.2 587.7 830.7 587.7 831.2 587.7 831.7 587.7 832.2 587.7 832.7 587.7 833.2 587.7 833.7 587.7 834.2 587.7 834.7 587.7 835.2 587.7 835.7 587.7 836.2 587.7 836.7 587.7 837.2 587.7 837.7 587.7 838.2 587.7 838.7 587.7 839.2 587.7 839.7 587.6 840.2 587.6 840.7 587.6 841.2 587.6 841.7 587.6 842.2 587.6 842.7 587.6 843.2 587.6 843.7 587.6 844.2 587.6 844.7 587.6 845.2 587.6 845.7 587.6 846.2 587.6 846.7 587.6 847.1 587.6 847.6 587.6 848.1 587.6 848.6 587.6 849.1 587.6 849.6 587.6 850.1 587.6 850.6 587.6 851.1 587.6 851.6 587.6 852.1 587.6 852.6 587.6 853.1 587.6 853.6 587.6 854.1 587.6 854.6 587.6 855.1 587.6 855.6 587.6 856.1 587.6 856.6 587.6 857.1 587.6 857.6 587.6 858.1 587.6 858.6 587.6 859.1 587.6 859.6 587.5 860.1 587.5 860.6 587.5 861.1 587.5 861.6 587.5 862.1 587.5 862.6 587.5 863.1 587.5 863.6 587.5 864.1 587.5 864.6 587.5 865.1 587.5 865.6 587.5 866.1 587.5 866.6 587.5 867.1 587.5 867.6 587.5 868.1 587.5 868.6 587.5 869.1 587.5 869.6 587.5 870.1 587.5 870.6 587.5 871.1 587.5 871.6 587.5 872.1 587.5 872.6 587.5 873.1 587.5 873.6 587.5 874.1 587.5 874.6 587.5 875.1 587.5 875.6 587.5 876.1 587.5 876.6 587.5 877.0 587.5 877.5 587.5 878.0 587.5 878.5 587.5 879.0 587.4 879.5 587.4 880.0 587.4 880.5 587.4 881.0 587.4 881.5 587.4 882.0 587.4 882.5 587.4 883.0 587.4 883.5 587.4 884.0 587.4 884.5 587.4 885.0 587.4 885.5 587.4 886.0 587.4 886.5 587.4 887.0 587.4 887.5 587.4 888.0 587.4 888.5 587.4 889.0 587.4 889.5 587.4 890.0 587.4 890.5 587.4 891.0 587.4 891.5 587.4 892.0 587.4 892.5 587.4 893.0 587.4 893.5 587.4 894.0 587.4 894.5 587.4 895.0 587.4 895.5 587.4 896.0 587.4 896.5 587.4 897.0 587.4 897.5 587.4 898.0 587.4 898.5 587.3 899.0 587.3 899.5 587.3 900.0 587.3 900.5 587.3 901.0 587.3 901.5 587.3 902.0 587.3 902.5 587.3 903.0 587.3 903.5 587.3 904.0 587.3 904.5 587.3 905.0 587.3 905.5 587.3 906.0 587.3 906.5 587.3 906.9 587.3 907.4 587.3 907.9 587.3 908.4 587.3 908.9 587.3 909.4 587.3 909.9 587.3 910.4 587.3 910.9 587.3 911.4 587.3 911.9 587.3 912.4 587.3 912.9 587.3 913.4 587.3 913.9 587.3 914.4 587.3 914.9 587.3 915.4 587.3 915.9 587.3 916.4 587.3 916.9 587.3 917.4 587.3 917.9 587.2 918.4 587.2 918.9 587.2 919.4 587.2 919.9 587.2 920.4 587.2 920.9 587.2 921.4 587.2 921.9 587.2 922.4 587.2 922.9 587.2 923.4 587.2 923.9 587.2 924.4 587.2 924.9 587.2 925.4 587.2 925.9 587.2 926.4 587.2 926.9 587.2 927.4 587.2 927.9 587.2 928.4 587.2 928.9 587.2 929.4 587.2 929.9 587.2 930.4 587.2 930.9 587.2 931.4 587.2 931.9 587.2 932.4 587.2 932.9 587.2 933.4 587.2 933.9 587.2 934.4 587.2 934.9 587.2 935.4 587.2 935.9 587.2 936.4 587.2 936.8 587.2 937.3 587.1 937.8 587.1 938.3 587.1 938.8 587.1 939.3 587.1 939.8 587.1 940.3 587.1 940.8 587.1 941.3 587.1 941.8 587.1 942.3 587.1 942.8 587.1 943.3 587.1 943.8 587.1 944.3 587.1 944.8 587.1 945.3 587.1 945.8 587.1 946.3 587.1 946.8 587.1 947.3 587.1 947.8 587.1 948.3 587.1 948.8 587.1 949.3 587.1 949.8 587.1 950.3 587.1 950.8 587.1 951.3 587.1 951.8 587.1 952.3 587.1 952.8 587.1 953.3 587.1 953.8 587.1 954.3 587.1 954.8 587.1 955.3 587.1 955.8 587.1 956.3 587.1 956.8 587.1 957.3 587.0 957.8 587.0 958.3 587.0 958.8 587.0 959.3 587.0 959.8 587.0 960.3 587.0 960.8 587.0 961.3 587.0 961.8 587.0 962.3 587.0 962.8 587.0 963.3 587.0 963.8 587.0 964.3 587.0 964.8 587.0 965.3 587.0 965.8 587.0 966.3 587.0 966.7 587.0 967.2 587.0 967.7 587.0 968.2 587.0 968.7 587.0 969.2 587.0 969.7 587.0 970.2 587.0 970.7 587.0 971.2 587.0 971.7 587.0 972.2 587.0 972.7 587.0 973.2 587.0 973.7 587.0 974.2 587.0 974.7 587.0 975.2 587.0 975.7 587.0 976.2 587.0 976.7 586.9 977.2 586.9 977.7 586.9 978.2 586.9 978.7 586.9 979.2 586.9 979.7 586.9 980.2 586.9 980.7 586.9 981.2 586.9 981.7 586.9 982.2 586.9 982.7 586.9 983.2 586.9 983.7 586.9 984.2 586.9 984.7 586.9 985.2 586.9 985.7 586.9 986.2 586.9 986.7 586.9 987.2 586.9 987.7 586.9 988.2 586.9 988.7 586.9 989.2 586.9 989.7 586.9 990.2 586.9 990.7 586.9 991.2 586.9 991.7 586.9 992.2 586.9 992.7 586.9 993.2 586.9 993.7 586.9 994.2 586.9 994.7 586.9 995.2 586.9 995.7 586.9 996.2 586.8 996.6 586.8 997.1 586.8 997.6 586.8 998.1 586.8 998.6 586.8 999.1 586.8 999.6 586.8 1000.1 586.8 1000.6 586.8 1001.1 586.8 1001.6 586.8 1002.1 586.8 1002.6 586.8 1003.1 586.8 1003.6 586.8 1004.1 586.8 1004.6 586.8 1005.1 586.8 1005.6 586.8 1006.1 586.8 1006.6 586.8 1007.1 586.8 1007.6 586.8 1008.1 586.8 1008.6 586.8 1009.1 586.8 1009.6 586.8 1010.1 586.8 1010.6 586.8 1011.1 586.8 1011.6 586.8 1012.1 586.8 1012.6 586.8 1013.1 586.8 1013.6 586.8 1014.1 586.8 1014.6 586.8 1015.1 586.8 1015.6 586.7 1016.1 586.7 1016.6 586.7 1017.1 586.7 1017.6 586.7 1018.1 586.7 1018.6 586.7 1019.1 586.7 1019.6 586.7 1020.1 586.7 1020.6 586.7 1021.1 586.7 1021.6 586.7 1022.1 586.7 1022.6 586.7 1023.1 586.7 1023.6 586.7 1024.1 586.7 1024.6 586.7 1025.1 586.7 1025.6 586.7 1026.1 586.7 1026.5 586.7 1027.0 586.7 1027.5 586.7 1028.0 586.7 1028.5 586.7 1029.0 586.7 1029.5 586.7 1030.0 586.7 1030.5 586.7 1031.0 586.7 1031.5 586.7 1032.0 586.7 1032.5 586.7 1033.0 586.7 1033.5 586.7 1034.0 586.7 1034.5 586.7 1035.0 586.6 1035.5 586.6 1036.0 575.1 1036.5 575.1 1037.0 575.1 1037.5 575.1 1038.0 575.1 1038.5 575.1 1039.0 575.1 1039.5 575.1 1040.0 575.1 1040.5 575.1 1041.0 575.1" fill="none" stroke="#7eb26d" stroke-width="1" stroke-linejoin="round"/><path d="M593.0 579.3 593.5 579.0 594.0 579.0 594.5 579.3 595.0 579.5 595.5 579.0 596.0 579.0 596.5 579.1 597.0 578.8 597.5 579.0 598.0 579.3 598.5 579.2 599.0 579.2 599.5 579.2 600.0 579.1 600.5 579.1 601.0 579.2 601.5 577.2 602.0 574.6 602.5 574.5 603.0 574.4 603.5 574.7 604.0 574.7 604.5 574.4 605.0 574.5 605.5 574.7 606.0 574.5 606.5 574.1 607.0 576.9 607.5 577.0 607.9 579.2 608.4 579.2 608.9 579.2 609.4 578.8 609.9 578.8 610.4 579.0 610.9 579.2 611.4 579.5 611.9 579.3 612.4 579.0 612.9 578.8 613.4 578.9 613.9 579.3 614.4 579.2 614.9 579.0 615.4 578.9 615.9 578.5 616.4 578.0 616.9 578.1 617.4 577.5 617.9 577.3 618.4 577.0 618.9 577.3 619.4 577.4 619.9 577.6 620.4 578.6 620.9 578.6 621.4 579.1 621.9 579.0 622.4 576.9 622.9 576.9 623.4 574.2 623.9 574.3 624.4 574.0 624.9 574.1 625.4 574.2 625.9 574.4 626.4 574.8 626.9 574.4 627.4 574.3 627.9 573.9 628.4 576.3 628.9 578.9 629.0 579.4 629.8 578.8 630.3 507.1 630.8 507.1 631.4 546.4 632.2 546.4 633.0 470.6 633.8 472.0 634.4 530.1 634.9 524.7 635.2 440.0 636.8 440.0 637.3 587.5 637.9 588.3 638.1 515.2 638.7 515.2 639.2 588.3 640.0 589.1 640.3 584.6 640.8 584.4 641.3 584.2 641.8 584.3 642.3 584.1 642.8 584.0 643.3 584.1 643.8 584.3 644.3 584.5 644.8 584.2 645.3 584.3 645.8 584.8 646.3 587.6 646.8 587.5 647.3 589.2 647.8 589.1 648.3 589.2 648.8 589.6 649.3 589.5 649.8 589.1 650.3 589.1 650.8 589.3 651.3 589.2 651.8 589.0 652.3 589.1 652.8 589.5 653.3 589.6 653.8 589.4 654.3 589.6 654.8 589.5 655.3 589.3 655.8 589.3 656.3 589.2 656.8 589.3 657.3 589.1 657.8 587.2 658.3 587.6 658.8 582.3 659.3 582.0 659.8 584.4 660.3 584.7 660.8 584.6 661.3 584.4 661.8 584.1 662.3 584.3 662.8 584.6 663.3 584.6 663.8 584.9 664.3 584.8 664.8 584.4 665.3 587.4 665.8 587.7 666.3 589.6 666.8 589.3 667.3 589.2 667.7 589.3 668.2 589.3 668.7 589.4 669.2 589.4 669.7 589.8 670.2 589.7 670.7 589.2 671.2 589.5 671.7 589.7 672.2 589.4 672.7 589.5 673.2 589.5 673.7 589.6 674.2 589.6 674.7 589.1 675.2 589.3 675.7 589.5 676.2 589.1 676.7 587.2 677.2 587.5 677.7 584.8 678.2 584.7 678.7 584.6 679.2 584.5 679.7 584.7 680.2 584.6 680.7 584.5 681.2 584.5 681.7 584.6 682.2 584.9 682.7 584.9 683.2 584.8 683.7 584.8 684.2 587.4 684.7 589.0 685.2 589.1 685.7 589.4 686.2 589.5 686.7 589.3 687.2 589.0 687.7 589.2 688.2 589.4 688.7 589.4 689.2 589.4 689.7 589.1 690.2 589.6 690.7 589.7 691.2 589.3 691.7 589.8 692.2 589.6 692.7 589.3 693.2 589.3 693.7 589.5 694.2 589.2 694.7 588.9 695.2 589.3 695.7 587.2 696.2 584.2 696.7 582.0 697.2 581.9 697.6 584.7 698.1 584.6 698.6 584.4 699.1 584.6 699.6 584.4 700.1 584.5 700.6 584.6 701.1 584.4 701.6 584.5 702.1 584.5 702.6 587.6 703.1 587.8 703.6 589.7 704.1 589.4 704.6 588.7 705.1 588.7 705.6 589.3 706.1 589.3 706.6 589.2 707.1 589.0 707.6 589.4 708.1 589.3 708.6 589.1 709.1 589.2 709.6 589.5 710.1 589.9 710.6 589.5 711.1 589.5 711.6 589.5 712.1 589.2 712.6 589.2 713.1 589.2 713.6 589.2 714.1 589.2 714.6 587.4 715.1 584.6 715.6 584.1 716.1 583.9 716.6 584.3 717.1 584.4 717.6 584.6 718.1 584.6 718.6 584.6 719.1 584.5 719.6 584.6 720.1 585.1 720.6 585.0 721.1 584.5 721.6 586.9 722.1 586.9 722.6 589.3 723.1 589.5 723.6 589.5 724.1 589.5 724.6 589.5 725.1 589.7 725.6 589.5 726.1 589.2 726.6 589.3 727.1 589.3 727.5 588.9 728.0 589.0 728.5 589.3 729.0 589.2 729.5 589.4 730.0 589.4 730.5 589.3 731.0 589.6 731.5 589.4 732.0 589.0 732.5 589.2 733.0 587.4 733.5 587.2 734.0 582.4 734.5 582.3 735.0 584.6 735.5 584.9 736.0 584.9 736.5 584.8 737.0 584.6 737.5 584.6 738.0 584.4 738.5 584.3 739.0 584.6 739.5 584.8 740.0 584.7 740.5 587.7 741.0 588.1 741.5 589.8 742.0 589.3 742.5 589.2 743.0 589.3 743.5 589.3 744.0 589.7 744.5 589.7 745.0 589.6 745.5 589.4 746.0 589.2 746.5 589.3 747.0 589.3 747.5 589.2 748.0 589.2 748.5 589.2 749.0 589.3 749.5 589.6 750.0 589.5 750.5 589.0 751.0 588.9 751.5 589.2 752.0 587.3 752.5 587.4 753.0 584.6 753.5 584.6 754.0 584.6 754.5 584.2 755.0 584.1 755.5 584.2 756.0 584.5 756.5 584.8 757.0 584.7 757.4 584.5 757.9 584.5 758.4 584.4 758.9 584.5 759.4 587.3 759.9 588.9 760.4 589.3 760.9 589.4 761.4 589.2 761.9 589.2 762.4 589.2 762.9 589.3 763.4 589.2 763.9 589.6 764.4 590.0 764.9 589.6 765.4 589.3 765.9 589.2 766.4 589.1 766.9 589.5 767.4 589.4 767.9 589.4 768.4 589.5 768.9 589.4 769.4 589.3 769.9 589.5 770.4 589.7 770.9 587.9 771.4 584.6 771.9 582.0 772.4 582.5 772.9 584.9 773.4 584.9 773.9 584.7 774.4 584.5 774.9 584.4 775.4 584.5 775.9 584.6 776.4 584.7 776.9 584.4 777.4 584.4 777.9 587.4 778.4 587.7 778.9 589.5 779.4 589.2 779.9 589.1 780.4 589.5 780.9 589.7 781.4 589.3 781.9 589.3 782.4 589.4 782.9 589.4 783.4 589.2 783.9 589.2 784.4 589.3 784.9 589.4 785.4 589.4 785.9 589.4 786.4 589.4 786.9 589.7 787.3 589.4 787.8 589.4 788.3 589.6 788.8 589.5 789.3 587.7 789.8 587.6 790.3 584.7 790.8 584.7 791.3 584.9 791.8 584.7 792.3 584.3 792.8 584.3 793.3 584.5 793.8 584.7 794.3 584.8 794.8 584.5 795.3 584.6 795.8 584.5 796.3 584.4 796.8 587.4 797.3 587.4 797.8 589.5 798.3 589.4 798.8 589.2 799.3 589.2 799.8 589.4 800.3 589.6 800.8 589.4 801.3 589.6 801.8 589.4 802.3 589.1 802.8 589.3 803.3 589.4 803.8 589.3 804.3 589.2 804.8 589.1 805.3 589.0 805.8 589.5 806.3 589.4 806.8 589.3 807.3 589.5 807.8 589.4 808.3 587.5 808.8 587.4 809.3 582.1 809.8 582.0 810.3 584.6 810.8 584.9 811.3 584.9 811.8 584.7 812.3 584.4 812.8 584.2 813.3 584.5 813.8 584.8 814.3 584.6 814.8 584.7 815.3 584.6 815.8 587.4 816.3 589.4 816.8 589.5 817.2 589.4 817.7 589.1 818.2 588.9 818.7 589.1 819.2 589.6 819.7 589.5 820.2 589.5 820.7 587.7 821.2 587.7 821.7 582.3 822.2 582.4 822.7 585.6 823.2 585.4 823.7 585.1 824.2 585.2 824.7 585.4 825.2 585.6 825.7 585.9 826.2 585.7 826.7 587.9 827.2 587.8 827.7 589.2 828.2 589.5 828.7 589.5 829.2 589.4 829.7 589.2 830.2 589.0 830.7 589.2 831.2 589.3 831.7 589.4 832.2 589.3 832.7 589.4 833.2 589.3 833.7 589.2 834.2 589.2 834.7 589.2 835.2 589.2 835.7 589.3 836.2 588.9 836.7 588.9 837.2 589.5 837.7 589.2 837.8 589.1 838.6 584.2 839.4 545.5 840.2 585.6 841.0 573.9 842.4 572.1 842.7 573.2 843.2 573.2 843.7 573.0 844.2 572.9 844.7 573.0 845.2 573.4 845.7 573.2 846.2 572.9 846.7 573.1 847.1 576.3 847.6 578.2 848.1 578.5 848.6 579.0 849.1 579.1 849.6 578.9 850.1 578.7 850.6 578.9 851.1 578.6 851.6 578.0 852.1 578.5 852.6 579.2 853.1 579.1 853.6 578.7 854.1 578.5 854.6 578.4 855.1 578.7 855.6 579.1 856.1 579.0 856.6 578.5 857.1 578.7 857.6 578.8 858.1 578.7 858.6 578.8 859.1 579.0 859.6 578.9 860.1 578.9 860.6 576.5 861.1 573.2 861.6 573.3 862.1 573.3 862.6 573.3 863.1 573.2 863.6 573.2 864.1 573.3 864.6 573.6 865.1 573.5 865.6 573.3 866.1 573.5 866.6 573.6 867.1 576.9 867.6 576.8 868.1 578.8 868.6 578.8 869.1 578.3 869.6 578.3 870.1 578.7 870.6 578.6 871.1 578.7 871.6 577.9 872.1 577.8 872.6 576.1 873.1 576.7 873.6 576.9 874.1 576.5 874.6 576.5 875.1 577.7 875.6 578.6 876.1 578.7 876.6 578.7 877.0 578.0 877.5 576.3 878.0 576.4 878.5 576.5 879.0 576.6 879.5 576.7 880.0 577.8 880.4 581.5 881.2 546.4 881.7 508.5 882.3 424.6 883.1 424.6 883.4 476.0 883.9 462.5 884.4 418.7 885.2 418.7 885.8 492.3 886.6 483.6 887.4 483.6 887.9 546.4 889.0 572.1 890.1 575.6 890.5 578.8 891.0 578.8 891.5 578.9 892.0 578.9 892.5 578.6 893.0 578.6 893.5 578.5 894.0 578.3 894.5 578.5 895.0 578.9 895.5 579.0 896.0 578.8 896.5 578.6 897.0 578.4 897.5 578.7 898.0 578.8 898.5 578.8 899.3 573.4 899.8 533.4 900.3 533.4 901.2 576.1 902.2 577.7 902.5 574.3 903.0 574.4 903.5 574.3 904.0 574.0 904.5 573.8 905.0 573.9 905.5 573.9 906.0 573.7 906.5 574.1 906.9 574.3 907.4 577.1 907.9 577.2 908.4 578.9 908.9 578.7 909.4 578.5 909.9 578.2 910.4 578.4 910.9 578.7 911.4 578.8 911.9 578.8 912.4 578.7 912.9 578.8 913.4 578.8 913.9 578.7 914.4 578.6 914.9 578.4 915.4 578.3 915.9 578.5 916.4 579.0 916.9 579.2 917.4 579.1 917.9 579.0 918.4 579.2 918.9 589.6 919.4 589.5 919.9 589.4 920.4 588.9 920.9 589.0 921.1 589.6 922.2 584.2 923.0 568.0 923.3 534.7 923.8 546.4 924.6 573.4 926.0 574.8 926.4 574.0 926.9 573.9 927.4 573.9 927.9 574.1 928.4 574.0 928.9 573.9 929.4 577.1 929.9 578.7 930.4 578.5 930.9 578.6 931.4 578.8 931.9 579.2 932.4 579.0 932.9 578.9 933.4 578.7 933.9 578.8 934.4 579.0 934.9 577.9 935.4 577.9 935.9 576.3 936.4 576.4 936.8 576.1 937.3 576.0 937.8 576.2 938.3 577.8 938.8 579.0 939.3 578.7 939.8 578.7 940.3 578.8 940.8 578.9 941.3 577.5 941.8 577.4 942.3 574.2 942.8 574.2 943.3 573.9 943.8 573.5 944.3 573.6 944.8 573.8 945.3 573.7 945.8 573.8 946.3 573.8 946.8 574.0 947.3 574.1 947.8 574.0 948.3 576.5 948.8 578.3 949.3 578.4 949.8 578.7 950.3 578.9 950.8 578.6 951.3 578.6 951.8 578.9 952.3 579.2 952.8 579.4 953.3 582.6 953.8 581.9 954.3 581.8 954.8 582.4 955.3 582.3 955.8 582.2 956.3 582.2 956.8 582.2 957.3 582.5 957.8 582.5 958.3 582.2 958.8 582.0 959.3 582.0 959.8 578.7 960.3 578.7 960.8 578.6 961.3 578.7 961.8 578.5 962.3 578.6 962.8 578.7 963.3 578.6 963.8 578.5 964.3 578.5 964.8 578.4 965.3 578.4 965.8 578.7 966.3 582.2 966.7 582.1 967.2 582.5 967.7 582.6 968.2 583.0 968.7 583.0 969.2 582.6 969.7 582.4 970.2 582.4 970.7 578.6 971.2 578.4 971.7 578.4 972.2 578.6 972.7 578.7 973.2 578.7 973.7 578.9 974.2 578.6 974.7 578.7 975.2 578.9 975.7 578.7 976.2 576.8 976.7 576.7 977.2 573.1 977.7 573.2 978.2 573.2 978.7 573.5 979.2 573.4 979.7 573.1 980.2 573.0 980.7 573.0 981.2 573.4 981.7 573.3 982.2 572.9 982.7 572.9 983.2 576.3 983.7 576.5 984.2 578.7 984.7 578.7 985.2 578.3 985.7 578.3 986.2 578.9 986.7 578.9 987.2 578.5 987.7 578.6 988.2 579.2 988.7 578.9 989.2 578.4 989.7 578.7 990.2 578.7 990.7 578.8 991.2 579.0 991.7 578.8 992.2 578.6 992.7 578.7 993.2 578.6 993.7 578.6 994.2 578.6 994.7 579.0 995.2 578.9 995.7 578.7 996.2 578.7 996.6 578.6 997.1 578.5 997.6 578.5 998.1 577.2 998.6 574.4 999.1 574.0 999.6 574.0 1000.1 574.1 1000.6 573.8 1001.1 573.8 1001.6 573.8 1002.1 573.8 1002.6 574.2 1003.1 574.4 1003.6 574.2 1004.1 574.0 1004.6 576.9 1005.1 577.2 1005.6 579.1 1006.1 579.0 1006.6 578.9 1007.1 578.9 1007.6 578.5 1008.1 578.4 1008.6 578.8 1009.1 578.8 1009.6 578.5 1010.1 578.4 1010.6 578.6 1011.1 578.9 1011.6 579.2 1012.1 579.0 1012.6 578.8 1013.1 578.0 1013.6 578.2 1014.1 576.6 1014.6 576.7 1015.1 577.0 1015.6 576.6 1016.1 576.3 1016.6 577.6 1017.1 578.5 1017.6 578.3 1018.1 578.3 1018.6 578.6 1019.1 578.4 1019.6 576.2 1020.1 573.6 1020.6 574.0 1021.1 574.1 1021.6 574.3 1022.1 574.4 1022.6 574.4 1023.1 574.4 1023.6 573.9 1024.1 573.8 1024.6 573.7 1025.1 573.7 1025.6 574.0 1026.1 574.0 1026.5 576.8 1027.0 578.6 1027.5 578.5 1028.0 578.3 1028.5 578.4 1029.0 578.8 1029.5 577.9 1030.0 576.0 1030.5 576.0 1031.0 576.2 1031.5 576.2 1032.0 576.0 1032.5 578.0 1033.0 577.9 1033.5 578.4 1034.0 578.5 1034.5 578.7 1035.0 578.8 1035.5 578.6 1036.0 578.9 1036.5 578.8 1037.0 578.6 1037.5 578.5 1038.0 578.4 1038.5 578.6 1039.0 578.7 1039.5 578.6 1040.0 578.6 1040.5 578.6 1041.0 578.7 L1041.0 596 L593.0 596Z" fill="#eab839" fill-opacity=".1"/><path d="M593.0 579.3 593.5 579.0 594.0 579.0 594.5 579.3 595.0 579.5 595.5 579.0 596.0 579.0 596.5 579.1 597.0 578.8 597.5 579.0 598.0 579.3 598.5 579.2 599.0 579.2 599.5 579.2 600.0 579.1 600.5 579.1 601.0 579.2 601.5 577.2 602.0 574.6 602.5 574.5 603.0 574.4 603.5 574.7 604.0 574.7 604.5 574.4 605.0 574.5 605.5 574.7 606.0 574.5 606.5 574.1 607.0 576.9 607.5 577.0 607.9 579.2 608.4 579.2 608.9 579.2 609.4 578.8 609.9 578.8 610.4 579.0 610.9 579.2 611.4 579.5 611.9 579.3 612.4 579.0 612.9 578.8 613.4 578.9 613.9 579.3 614.4 579.2 614.9 579.0 615.4 578.9 615.9 578.5 616.4 578.0 616.9 578.1 617.4 577.5 617.9 577.3 618.4 577.0 618.9 577.3 619.4 577.4 619.9 577.6 620.4 578.6 620.9 578.6 621.4 579.1 621.9 579.0 622.4 576.9 622.9 576.9 623.4 574.2 623.9 574.3 624.4 574.0 624.9 574.1 625.4 574.2 625.9 574.4 626.4 574.8 626.9 574.4 627.4 574.3 627.9 573.9 628.4 576.3 628.9 578.9 629.0 579.4 629.8 578.8 630.3 507.1 630.8 507.1 631.4 546.4 632.2 546.4 633.0 470.6 633.8 472.0 634.4 530.1 634.9 524.7 635.2 440.0 636.8 440.0 637.3 587.5 637.9 588.3 638.1 515.2 638.7 515.2 639.2 588.3 640.0 589.1 640.3 584.6 640.8 584.4 641.3 584.2 641.8 584.3 642.3 584.1 642.8 584.0 643.3 584.1 643.8 584.3 644.3 584.5 644.8 584.2 645.3 584.3 645.8 584.8 646.3 587.6 646.8 587.5 647.3 589.2 647.8 589.1 648.3 589.2 648.8 589.6 649.3 589.5 649.8 589.1 650.3 589.1 650.8 589.3 651.3 589.2 651.8 589.0 652.3 589.1 652.8 589.5 653.3 589.6 653.8 589.4 654.3 589.6 654.8 589.5 655.3 589.3 655.8 589.3 656.3 589.2 656.8 589.3 657.3 589.1 657.8 587.2 658.3 587.6 658.8 582.3 659.3 582.0 659.8 584.4 660.3 584.7 660.8 584.6 661.3 584.4 661.8 584.1 662.3 584.3 662.8 584.6 663.3 584.6 663.8 584.9 664.3 584.8 664.8 584.4 665.3 587.4 665.8 587.7 666.3 589.6 666.8 589.3 667.3 589.2 667.7 589.3 668.2 589.3 668.7 589.4 669.2 589.4 669.7 589.8 670.2 589.7 670.7 589.2 671.2 589.5 671.7 589.7 672.2 589.4 672.7 589.5 673.2 589.5 673.7 589.6 674.2 589.6 674.7 589.1 675.2 589.3 675.7 589.5 676.2 589.1 676.7 587.2 677.2 587.5 677.7 584.8 678.2 584.7 678.7 584.6 679.2 584.5 679.7 584.7 680.2 584.6 680.7 584.5 681.2 584.5 681.7 584.6 682.2 584.9 682.7 584.9 683.2 584.8 683.7 584.8 684.2 587.4 684.7 589.0 685.2 589.1 685.7 589.4 686.2 589.5 686.7 589.3 687.2 589.0 687.7 589.2 688.2 589.4 688.7 589.4 689.2 589.4 689.7 589.1 690.2 589.6 690.7 589.7 691.2 589.3 691.7 589.8 692.2 589.6 692.7 589.3 693.2 589.3 693.7 589.5 694.2 589.2 694.7 588.9 695.2 589.3 695.7 587.2 696.2 584.2 696.7 582.0 697.2 581.9 697.6 584.7 698.1 584.6 698.6 584.4 699.1 584.6 699.6 584.4 700.1 584.5 700.6 584.6 701.1 584.4 701.6 584.5 702.1 584.5 702.6 587.6 703.1 587.8 703.6 589.7 704.1 589.4 704.6 588.7 705.1 588.7 705.6 589.3 706.1 589.3 706.6 589.2 707.1 589.0 707.6 589.4 708.1 589.3 708.6 589.1 709.1 589.2 709.6 589.5 710.1 589.9 710.6 589.5 711.1 589.5 711.6 589.5 712.1 589.2 712.6 589.2 713.1 589.2 713.6 589.2 714.1 589.2 714.6 587.4 715.1 584.6 715.6 584.1 716.1 583.9 716.6 584.3 717.1 584.4 717.6 584.6 718.1 584.6 718.6 584.6 719.1 584.5 719.6 584.6 720.1 585.1 720.6 585.0 721.1 584.5 721.6 586.9 722.1 586.9 722.6 589.3 723.1 589.5 723.6 589.5 724.1 589.5 724.6 589.5 725.1 589.7 725.6 589.5 726.1 589.2 726.6 589.3 727.1 589.3 727.5 588.9 728.0 589.0 728.5 589.3 729.0 589.2 729.5 589.4 730.0 589.4 730.5 589.3 731.0 589.6 731.5 589.4 732.0 589.0 732.5 589.2 733.0 587.4 733.5 587.2 734.0 582.4 734.5 582.3 735.0 584.6 735.5 584.9 736.0 584.9 736.5 584.8 737.0 584.6 737.5 584.6 738.0 584.4 738.5 584.3 739.0 584.6 739.5 584.8 740.0 584.7 740.5 587.7 741.0 588.1 741.5 589.8 742.0 589.3 742.5 589.2 743.0 589.3 743.5 589.3 744.0 589.7 744.5 589.7 745.0 589.6 745.5 589.4 746.0 589.2 746.5 589.3 747.0 589.3 747.5 589.2 748.0 589.2 748.5 589.2 749.0 589.3 749.5 589.6 750.0 589.5 750.5 589.0 751.0 588.9 751.5 589.2 752.0 587.3 752.5 587.4 753.0 584.6 753.5 584.6 754.0 584.6 754.5 584.2 755.0 584.1 755.5 584.2 756.0 584.5 756.5 584.8 757.0 584.7 757.4 584.5 757.9 584.5 758.4 584.4 758.9 584.5 759.4 587.3 759.9 588.9 760.4 589.3 760.9 589.4 761.4 589.2 761.9 589.2 762.4 589.2 762.9 589.3 763.4 589.2 763.9 589.6 764.4 590.0 764.9 589.6 765.4 589.3 765.9 589.2 766.4 589.1 766.9 589.5 767.4 589.4 767.9 589.4 768.4 589.5 768.9 589.4 769.4 589.3 769.9 589.5 770.4 589.7 770.9 587.9 771.4 584.6 771.9 582.0 772.4 582.5 772.9 584.9 773.4 584.9 773.9 584.7 774.4 584.5 774.9 584.4 775.4 584.5 775.9 584.6 776.4 584.7 776.9 584.4 777.4 584.4 777.9 587.4 778.4 587.7 778.9 589.5 779.4 589.2 779.9 589.1 780.4 589.5 780.9 589.7 781.4 589.3 781.9 589.3 782.4 589.4 782.9 589.4 783.4 589.2 783.9 589.2 784.4 589.3 784.9 589.4 785.4 589.4 785.9 589.4 786.4 589.4 786.9 589.7 787.3 589.4 787.8 589.4 788.3 589.6 788.8 589.5 789.3 587.7 789.8 587.6 790.3 584.7 790.8 584.7 791.3 584.9 791.8 584.7 792.3 584.3 792.8 584.3 793.3 584.5 793.8 584.7 794.3 584.8 794.8 584.5 795.3 584.6 795.8 584.5 796.3 584.4 796.8 587.4 797.3 587.4 797.8 589.5 798.3 589.4 798.8 589.2 799.3 589.2 799.8 589.4 800.3 589.6 800.8 589.4 801.3 589.6 801.8 589.4 802.3 589.1 802.8 589.3 803.3 589.4 803.8 589.3 804.3 589.2 804.8 589.1 805.3 589.0 805.8 589.5 806.3 589.4 806.8 589.3 807.3 589.5 807.8 589.4 808.3 587.5 808.8 587.4 809.3 582.1 809.8 582.0 810.3 584.6 810.8 584.9 811.3 584.9 811.8 584.7 812.3 584.4 812.8 584.2 813.3 584.5 813.8 584.8 814.3 584.6 814.8 584.7 815.3 584.6 815.8 587.4 816.3 589.4 816.8 589.5 817.2 589.4 817.7 589.1 818.2 588.9 818.7 589.1 819.2 589.6 819.7 589.5 820.2 589.5 820.7 587.7 821.2 587.7 821.7 582.3 822.2 582.4 822.7 585.6 823.2 585.4 823.7 585.1 824.2 585.2 824.7 585.4 825.2 585.6 825.7 585.9 826.2 585.7 826.7 587.9 827.2 587.8 827.7 589.2 828.2 589.5 828.7 589.5 829.2 589.4 829.7 589.2 830.2 589.0 830.7 589.2 831.2 589.3 831.7 589.4 832.2 589.3 832.7 589.4 833.2 589.3 833.7 589.2 834.2 589.2 834.7 589.2 835.2 589.2 835.7 589.3 836.2 588.9 836.7 588.9 837.2 589.5 837.7 589.2 837.8 589.1 838.6 584.2 839.4 545.5 840.2 585.6 841.0 573.9 842.4 572.1 842.7 573.2 843.2 573.2 843.7 573.0 844.2 572.9 844.7 573.0 845.2 573.4 845.7 573.2 846.2 572.9 846.7 573.1 847.1 576.3 847.6 578.2 848.1 578.5 848.6 579.0 849.1 579.1 849.6 578.9 850.1 578.7 850.6 578.9 851.1 578.6 851.6 578.0 852.1 578.5 852.6 579.2 853.1 579.1 853.6 578.7 854.1 578.5 854.6 578.4 855.1 578.7 855.6 579.1 856.1 579.0 856.6 578.5 857.1 578.7 857.6 578.8 858.1 578.7 858.6 578.8 859.1 579.0 859.6 578.9 860.1 578.9 860.6 576.5 861.1 573.2 861.6 573.3 862.1 573.3 862.6 573.3 863.1 573.2 863.6 573.2 864.1 573.3 864.6 573.6 865.1 573.5 865.6 573.3 866.1 573.5 866.6 573.6 867.1 576.9 867.6 576.8 868.1 578.8 868.6 578.8 869.1 578.3 869.6 578.3 870.1 578.7 870.6 578.6 871.1 578.7 871.6 577.9 872.1 577.8 872.6 576.1 873.1 576.7 873.6 576.9 874.1 576.5 874.6 576.5 875.1 577.7 875.6 578.6 876.1 578.7 876.6 578.7 877.0 578.0 877.5 576.3 878.0 576.4 878.5 576.5 879.0 576.6 879.5 576.7 880.0 577.8 880.4 581.5 881.2 546.4 881.7 508.5 882.3 424.6 883.1 424.6 883.4 476.0 883.9 462.5 884.4 418.7 885.2 418.7 885.8 492.3 886.6 483.6 887.4 483.6 887.9 546.4 889.0 572.1 890.1 575.6 890.5 578.8 891.0 578.8 891.5 578.9 892.0 578.9 892.5 578.6 893.0 578.6 893.5 578.5 894.0 578.3 894.5 578.5 895.0 578.9 895.5 579.0 896.0 578.8 896.5 578.6 897.0 578.4 897.5 578.7 898.0 578.8 898.5 578.8 899.3 573.4 899.8 533.4 900.3 533.4 901.2 576.1 902.2 577.7 902.5 574.3 903.0 574.4 903.5 574.3 904.0 574.0 904.5 573.8 905.0 573.9 905.5 573.9 906.0 573.7 906.5 574.1 906.9 574.3 907.4 577.1 907.9 577.2 908.4 578.9 908.9 578.7 909.4 578.5 909.9 578.2 910.4 578.4 910.9 578.7 911.4 578.8 911.9 578.8 912.4 578.7 912.9 578.8 913.4 578.8 913.9 578.7 914.4 578.6 914.9 578.4 915.4 578.3 915.9 578.5 916.4 579.0 916.9 579.2 917.4 579.1 917.9 579.0 918.4 579.2 918.9 589.6 919.4 589.5 919.9 589.4 920.4 588.9 920.9 589.0 921.1 589.6 922.2 584.2 923.0 568.0 923.3 534.7 923.8 546.4 924.6 573.4 926.0 574.8 926.4 574.0 926.9 573.9 927.4 573.9 927.9 574.1 928.4 574.0 928.9 573.9 929.4 577.1 929.9 578.7 930.4 578.5 930.9 578.6 931.4 578.8 931.9 579.2 932.4 579.0 932.9 578.9 933.4 578.7 933.9 578.8 934.4 579.0 934.9 577.9 935.4 577.9 935.9 576.3 936.4 576.4 936.8 576.1 937.3 576.0 937.8 576.2 938.3 577.8 938.8 579.0 939.3 578.7 939.8 578.7 940.3 578.8 940.8 578.9 941.3 577.5 941.8 577.4 942.3 574.2 942.8 574.2 943.3 573.9 943.8 573.5 944.3 573.6 944.8 573.8 945.3 573.7 945.8 573.8 946.3 573.8 946.8 574.0 947.3 574.1 947.8 574.0 948.3 576.5 948.8 578.3 949.3 578.4 949.8 578.7 950.3 578.9 950.8 578.6 951.3 578.6 951.8 578.9 952.3 579.2 952.8 579.4 953.3 582.6 953.8 581.9 954.3 581.8 954.8 582.4 955.3 582.3 955.8 582.2 956.3 582.2 956.8 582.2 957.3 582.5 957.8 582.5 958.3 582.2 958.8 582.0 959.3 582.0 959.8 578.7 960.3 578.7 960.8 578.6 961.3 578.7 961.8 578.5 962.3 578.6 962.8 578.7 963.3 578.6 963.8 578.5 964.3 578.5 964.8 578.4 965.3 578.4 965.8 578.7 966.3 582.2 966.7 582.1 967.2 582.5 967.7 582.6 968.2 583.0 968.7 583.0 969.2 582.6 969.7 582.4 970.2 582.4 970.7 578.6 971.2 578.4 971.7 578.4 972.2 578.6 972.7 578.7 973.2 578.7 973.7 578.9 974.2 578.6 974.7 578.7 975.2 578.9 975.7 578.7 976.2 576.8 976.7 576.7 977.2 573.1 977.7 573.2 978.2 573.2 978.7 573.5 979.2 573.4 979.7 573.1 980.2 573.0 980.7 573.0 981.2 573.4 981.7 573.3 982.2 572.9 982.7 572.9 983.2 576.3 983.7 576.5 984.2 578.7 984.7 578.7 985.2 578.3 985.7 578.3 986.2 578.9 986.7 578.9 987.2 578.5 987.7 578.6 988.2 579.2 988.7 578.9 989.2 578.4 989.7 578.7 990.2 578.7 990.7 578.8 991.2 579.0 991.7 578.8 992.2 578.6 992.7 578.7 993.2 578.6 993.7 578.6 994.2 578.6 994.7 579.0 995.2 578.9 995.7 578.7 996.2 578.7 996.6 578.6 997.1 578.5 997.6 578.5 998.1 577.2 998.6 574.4 999.1 574.0 999.6 574.0 1000.1 574.1 1000.6 573.8 1001.1 573.8 1001.6 573.8 1002.1 573.8 1002.6 574.2 1003.1 574.4 1003.6 574.2 1004.1 574.0 1004.6 576.9 1005.1 577.2 1005.6 579.1 1006.1 579.0 1006.6 578.9 1007.1 578.9 1007.6 578.5 1008.1 578.4 1008.6 578.8 1009.1 578.8 1009.6 578.5 1010.1 578.4 1010.6 578.6 1011.1 578.9 1011.6 579.2 1012.1 579.0 1012.6 578.8 1013.1 578.0 1013.6 578.2 1014.1 576.6 1014.6 576.7 1015.1 577.0 1015.6 576.6 1016.1 576.3 1016.6 577.6 1017.1 578.5 1017.6 578.3 1018.1 578.3 1018.6 578.6 1019.1 578.4 1019.6 576.2 1020.1 573.6 1020.6 574.0 1021.1 574.1 1021.6 574.3 1022.1 574.4 1022.6 574.4 1023.1 574.4 1023.6 573.9 1024.1 573.8 1024.6 573.7 1025.1 573.7 1025.6 574.0 1026.1 574.0 1026.5 576.8 1027.0 578.6 1027.5 578.5 1028.0 578.3 1028.5 578.4 1029.0 578.8 1029.5 577.9 1030.0 576.0 1030.5 576.0 1031.0 576.2 1031.5 576.2 1032.0 576.0 1032.5 578.0 1033.0 577.9 1033.5 578.4 1034.0 578.5 1034.5 578.7 1035.0 578.8 1035.5 578.6 1036.0 578.9 1036.5 578.8 1037.0 578.6 1037.5 578.5 1038.0 578.4 1038.5 578.6 1039.0 578.7 1039.5 578.6 1040.0 578.6 1040.5 578.6 1041.0 578.7" fill="none" stroke="#eab839" stroke-width="1" stroke-linejoin="round"/><path d="M593.0 595.9 593.5 595.9 594.0 595.9 594.5 595.9 595.0 595.9 595.5 595.9 596.0 595.9 596.5 595.9 597.0 595.9 597.5 595.9 598.0 595.9 598.5 595.9 599.0 595.9 599.5 595.9 600.0 595.9 600.5 595.9 601.0 595.9 601.5 595.9 602.0 595.9 602.5 595.9 603.0 595.9 603.5 595.9 604.0 595.9 604.5 595.9 605.0 595.9 605.5 595.9 606.0 595.9 606.5 595.9 607.0 595.9 607.5 595.9 607.9 595.9 608.4 595.9 608.9 595.9 609.4 595.9 609.9 595.9 610.4 595.9 610.9 595.9 611.4 595.9 611.9 595.9 612.4 595.9 612.9 595.9 613.4 595.9 613.9 595.9 614.4 595.9 614.9 595.9 615.4 595.9 615.9 595.9 616.4 595.9 616.9 595.9 617.4 595.9 617.9 595.9 618.4 595.9 618.9 595.9 619.4 595.9 619.9 595.9 620.4 595.9 620.9 595.9 621.4 595.9 621.9 595.9 622.4 595.9 622.9 595.9 623.4 595.9 623.9 595.9 624.4 595.9 624.9 595.9 625.4 595.9 625.9 595.9 626.4 595.9 626.9 595.9 627.4 595.9 627.9 595.9 628.4 595.9 628.9 595.9 629.4 595.9 629.9 595.9 630.4 595.9 630.9 595.9 631.4 595.9 631.9 595.9 632.4 595.9 632.9 595.9 633.4 595.9 633.9 595.9 634.4 595.9 634.9 595.9 635.4 595.9 635.9 595.9 636.4 595.9 636.9 595.9 637.4 595.9 637.8 595.9 638.3 595.9 638.8 595.9 639.3 595.9 639.8 595.9 640.3 595.9 640.8 595.9 641.3 595.9 641.8 595.9 642.3 595.9 642.8 595.9 643.3 595.9 643.8 595.9 644.3 595.9 644.8 595.9 645.3 595.9 645.8 595.9 646.3 595.9 646.8 595.9 647.3 595.9 647.8 595.9 648.3 595.9 648.8 595.9 649.3 595.9 649.8 595.9 650.3 595.9 650.8 595.9 651.3 595.9 651.8 595.9 652.3 595.9 652.8 595.9 653.3 595.9 653.8 595.9 654.3 595.9 654.8 595.9 655.3 595.9 655.8 595.9 656.3 595.9 656.8 595.9 657.3 595.9 657.8 595.9 658.3 595.9 658.8 595.9 659.3 595.9 659.8 595.9 660.3 595.9 660.8 595.9 661.3 595.9 661.8 595.9 662.3 595.9 662.8 595.9 663.3 595.9 663.8 595.9 664.3 595.9 664.8 595.9 665.3 595.9 665.8 595.9 666.3 595.9 666.8 595.9 667.3 595.9 667.7 595.9 668.2 595.9 668.7 595.9 669.2 595.9 669.7 595.9 670.2 595.9 670.7 595.9 671.2 595.9 671.7 595.9 672.2 595.9 672.7 595.9 673.2 595.9 673.7 595.9 674.2 595.9 674.7 595.9 675.2 595.9 675.7 595.9 676.2 595.9 676.7 595.9 677.2 595.9 677.7 595.9 678.2 595.9 678.7 595.9 679.2 595.9 679.7 595.9 680.2 595.9 680.7 595.9 681.2 595.9 681.7 595.9 682.2 595.9 682.7 595.9 683.2 595.9 683.7 595.9 684.2 595.9 684.7 595.9 685.2 595.9 685.7 595.9 686.2 595.9 686.7 595.9 687.2 595.9 687.7 595.9 688.2 595.9 688.7 595.9 689.2 595.9 689.7 595.9 690.2 595.9 690.7 595.9 691.2 595.9 691.7 595.9 692.2 595.9 692.7 595.9 693.2 595.9 693.7 595.9 694.2 595.9 694.7 595.9 695.2 595.9 695.7 595.9 696.2 595.9 696.7 595.9 697.2 595.9 697.6 595.9 698.1 595.9 698.6 595.9 699.1 595.9 699.6 595.9 700.1 595.9 700.6 595.9 701.1 595.9 701.6 595.9 702.1 595.9 702.6 595.9 703.1 595.9 703.6 595.9 704.1 595.9 704.6 595.9 705.1 595.9 705.6 595.9 706.1 595.9 706.6 595.9 707.1 595.9 707.6 595.9 708.1 595.9 708.6 595.9 709.1 595.9 709.6 595.9 710.1 595.9 710.6 595.9 711.1 595.9 711.6 595.9 712.1 595.9 712.6 595.9 713.1 595.9 713.6 595.9 714.1 595.9 714.6 595.9 715.1 595.9 715.6 595.9 716.1 595.9 716.6 595.9 717.1 595.9 717.6 595.9 718.1 595.9 718.6 595.9 719.1 595.9 719.6 595.9 720.1 595.9 720.6 595.9 721.1 595.9 721.6 595.9 722.1 595.9 722.6 595.9 723.1 595.9 723.6 595.9 724.1 595.9 724.6 595.9 725.1 595.9 725.6 595.9 726.1 595.9 726.6 595.9 727.1 595.9 727.5 595.9 728.0 595.9 728.5 595.9 729.0 595.9 729.5 595.9 730.0 595.9 730.5 595.9 731.0 595.9 731.5 595.9 732.0 595.9 732.5 595.9 733.0 595.9 733.5 595.9 734.0 595.9 734.5 595.9 735.0 595.9 735.5 595.9 736.0 595.9 736.5 595.9 737.0 595.9 737.5 595.9 738.0 595.9 738.5 595.9 739.0 595.9 739.5 595.9 740.0 595.9 740.5 595.9 741.0 595.9 741.5 595.9 742.0 595.9 742.5 595.9 743.0 595.9 743.5 595.9 744.0 595.9 744.5 595.9 745.0 595.9 745.5 595.9 746.0 595.9 746.5 595.9 747.0 595.9 747.5 595.9 748.0 595.9 748.5 595.9 749.0 595.9 749.5 595.9 750.0 595.9 750.5 595.9 751.0 595.9 751.5 595.9 752.0 595.9 752.5 595.9 753.0 595.9 753.5 595.9 754.0 595.9 754.5 595.9 755.0 595.9 755.5 595.9 756.0 595.9 756.5 595.9 757.0 595.9 757.4 595.9 757.9 595.9 758.4 595.9 758.9 595.9 759.4 595.9 759.9 595.9 760.4 595.9 760.9 595.9 761.4 595.9 761.9 595.9 762.4 595.9 762.9 595.9 763.4 595.9 763.9 595.9 764.4 595.9 764.9 595.9 765.4 595.9 765.9 595.9 766.4 595.9 766.9 595.9 767.4 595.9 767.9 595.9 768.4 595.9 768.9 595.9 769.4 595.9 769.9 595.9 770.4 595.9 770.9 595.9 771.4 595.9 771.9 595.9 772.4 595.9 772.9 595.9 773.4 595.9 773.9 595.9 774.4 595.9 774.9 595.9 775.4 595.9 775.9 595.9 776.4 595.9 776.9 595.9 777.4 595.9 777.9 595.9 778.4 595.9 778.9 595.9 779.4 595.9 779.9 595.9 780.4 595.9 780.9 595.9 781.4 595.9 781.9 595.9 782.4 595.9 782.9 595.9 783.4 595.9 783.9 595.9 784.4 595.9 784.9 595.9 785.4 595.9 785.9 595.9 786.4 595.9 786.9 595.9 787.3 595.9 787.8 595.9 788.3 595.9 788.8 595.9 789.3 595.9 789.8 595.9 790.3 595.9 790.8 595.9 791.3 595.9 791.8 595.9 792.3 595.9 792.8 595.9 793.3 595.9 793.8 595.9 794.3 595.9 794.8 595.9 795.3 595.9 795.8 595.9 796.3 595.9 796.8 595.9 797.3 595.9 797.8 595.9 798.3 595.9 798.8 595.9 799.3 595.9 799.8 595.9 800.3 595.9 800.8 595.9 801.3 595.9 801.8 595.9 802.3 595.9 802.8 595.9 803.3 595.9 803.8 595.9 804.3 595.9 804.8 595.9 805.3 595.9 805.8 595.9 806.3 595.9 806.8 595.9 807.3 595.9 807.8 595.9 808.3 595.9 808.8 595.9 809.3 595.9 809.8 595.9 810.3 595.9 810.8 595.9 811.3 595.9 811.8 595.9 812.3 595.9 812.8 595.9 813.3 595.9 813.8 595.9 814.3 595.9 814.8 595.9 815.3 595.9 815.8 595.9 816.3 595.9 816.8 595.9 817.2 595.9 817.7 595.9 818.2 595.9 818.7 595.9 819.2 595.9 819.7 595.9 820.2 595.9 820.7 595.9 821.2 595.9 821.7 595.9 822.2 595.9 822.7 595.9 823.2 595.9 823.7 595.9 824.2 595.9 824.7 595.9 825.2 595.9 825.7 595.9 826.2 595.9 826.7 595.9 827.2 595.9 827.7 595.9 828.2 595.9 828.7 595.9 829.2 595.9 829.7 595.9 830.2 595.9 830.7 595.9 831.2 595.9 831.7 595.9 832.2 595.9 832.7 595.9 833.2 595.9 833.7 595.9 834.2 595.9 834.7 595.9 835.2 595.9 835.7 595.9 836.2 595.9 836.7 595.9 837.2 595.9 837.7 595.9 838.2 595.9 838.7 595.9 839.2 595.9 839.7 595.9 840.2 595.9 840.7 595.9 841.2 595.9 841.7 595.9 842.2 595.9 842.7 595.9 843.2 595.9 843.7 595.9 844.2 595.9 844.7 595.9 845.2 595.9 845.7 595.9 846.2 595.9 846.7 595.9 847.1 595.9 847.6 595.9 848.1 595.9 848.6 595.9 849.1 595.9 849.6 595.9 850.1 595.9 850.6 595.9 851.1 595.9 851.6 595.9 852.1 595.9 852.6 595.9 853.1 595.9 853.6 595.9 854.1 595.9 854.6 595.9 855.1 595.9 855.6 595.9 856.1 595.9 856.6 595.9 857.1 595.9 857.6 595.9 858.1 595.9 858.6 595.9 859.1 595.9 859.6 595.9 860.1 595.9 860.6 595.9 861.1 595.9 861.6 595.9 862.1 595.9 862.6 595.9 863.1 595.9 863.6 595.9 864.1 595.9 864.6 595.9 865.1 595.9 865.6 595.9 866.1 595.9 866.6 595.9 867.1 595.9 867.6 595.9 868.1 595.9 868.6 595.9 869.1 595.9 869.6 595.9 870.1 595.9 870.6 595.9 871.1 595.9 871.6 595.9 872.1 595.9 872.6 595.9 873.1 595.9 873.6 595.9 874.1 595.9 874.6 595.9 875.1 595.9 875.6 595.9 876.1 595.9 876.6 595.9 877.0 595.9 877.5 595.9 878.0 595.9 878.5 595.9 879.0 595.9 879.5 595.9 880.0 595.9 880.1 595.9 881.2 595.6 882.0 507.1 882.8 508.5 883.6 596.1 884.4 596.1 885.2 539.6 886.3 540.9 887.1 596.1 888.2 595.9 888.5 595.9 889.0 595.9 889.5 595.9 890.0 595.9 890.5 595.9 891.0 595.9 891.5 595.9 892.0 595.9 892.5 595.9 893.0 595.9 893.5 595.9 894.0 595.9 894.5 595.9 895.0 595.9 895.5 595.9 896.0 595.9 896.5 595.9 897.0 595.9 897.5 595.9 898.0 595.9 898.5 595.9 899.0 595.9 899.5 595.9 900.0 595.9 900.5 595.9 901.0 595.9 901.5 595.9 902.0 595.9 902.5 595.9 903.0 595.9 903.5 595.9 904.0 595.9 904.5 595.9 905.0 595.9 905.5 595.9 906.0 595.9 906.5 595.9 906.9 595.9 907.4 595.9 907.9 595.9 908.4 595.9 908.9 595.9 909.4 595.9 909.9 595.9 910.4 595.9 910.9 595.9 911.4 595.9 911.9 595.9 912.4 595.9 912.9 595.9 913.4 595.9 913.9 595.9 914.4 595.9 914.9 595.9 915.4 595.9 915.9 595.9 916.4 595.9 916.9 595.9 917.4 595.9 917.9 595.9 918.4 595.9 918.9 595.9 919.4 595.9 919.9 595.9 920.4 595.9 920.9 595.9 921.4 595.9 921.9 595.9 922.4 595.9 922.9 595.9 923.4 595.9 923.9 595.9 924.4 595.9 924.9 595.9 925.4 595.9 925.9 595.9 926.4 595.9 926.9 595.9 927.4 595.9 927.9 595.9 928.4 595.9 928.9 595.9 929.4 595.9 929.9 595.9 930.4 595.9 930.9 595.9 931.4 595.9 931.9 595.9 932.4 595.9 932.9 595.9 933.4 595.9 933.9 595.9 934.4 595.9 934.9 595.9 935.4 595.9 935.9 595.9 936.4 595.9 936.8 595.9 937.3 595.9 937.8 595.9 938.3 595.9 938.8 595.9 939.3 595.9 939.8 595.9 940.3 595.9 940.8 595.9 941.3 595.9 941.8 595.9 942.3 595.9 942.8 595.9 943.3 595.9 943.8 595.9 944.3 595.9 944.8 595.9 945.3 595.9 945.8 595.9 946.3 595.9 946.8 595.9 947.3 595.9 947.8 595.9 948.3 595.9 948.8 595.9 949.3 595.9 949.8 595.9 950.3 595.9 950.8 595.9 951.3 595.9 951.8 595.9 952.3 595.9 952.8 595.9 953.3 595.9 953.8 595.9 954.3 595.9 954.8 595.9 955.3 595.9 955.8 595.9 956.3 595.9 956.8 595.9 957.3 595.9 957.8 595.9 958.3 595.9 958.8 595.9 959.3 595.9 959.8 595.9 960.3 595.9 960.8 595.9 961.3 595.9 961.8 595.9 962.3 595.9 962.8 595.9 963.3 595.9 963.8 595.9 964.3 595.9 964.8 595.9 965.3 595.9 965.8 595.9 966.3 595.9 966.7 595.9 967.2 595.9 967.7 595.9 968.2 595.9 968.7 595.9 969.2 595.9 969.7 595.9 970.2 595.9 970.7 595.9 971.2 595.9 971.7 595.9 972.2 595.9 972.7 595.9 973.2 595.9 973.7 595.9 974.2 595.9 974.7 595.9 975.2 595.9 975.7 595.9 976.2 595.9 976.7 595.9 977.2 595.9 977.7 595.9 978.2 595.9 978.7 595.9 979.2 595.9 979.7 595.9 980.2 595.9 980.7 595.9 981.2 595.9 981.7 595.9 982.2 595.9 982.7 595.9 983.2 595.9 983.7 595.9 984.2 595.9 984.7 595.9 985.2 595.9 985.7 595.9 986.2 595.9 986.7 595.9 987.2 595.9 987.7 595.9 988.2 595.9 988.7 595.9 989.2 595.9 989.7 595.9 990.2 595.9 990.7 595.9 991.2 595.9 991.7 595.9 992.2 595.9 992.7 595.9 993.2 595.9 993.7 595.9 994.2 595.9 994.7 595.9 995.2 595.9 995.7 595.9 996.2 595.9 996.6 595.9 997.1 595.9 997.6 595.9 998.1 595.9 998.6 595.9 999.1 595.9 999.6 595.9 1000.1 595.9 1000.6 595.9 1001.1 595.9 1001.6 595.9 1002.1 595.9 1002.6 595.9 1003.1 595.9 1003.6 595.9 1004.1 595.9 1004.6 595.9 1005.1 595.9 1005.6 595.9 1006.1 595.9 1006.6 595.9 1007.1 595.9 1007.6 595.9 1008.1 595.9 1008.6 595.9 1009.1 595.9 1009.6 595.9 1010.1 595.9 1010.6 595.9 1011.1 595.9 1011.6 595.9 1012.1 595.9 1012.6 595.9 1013.1 595.9 1013.6 595.9 1014.1 595.9 1014.6 595.9 1015.1 595.9 1015.6 595.9 1016.1 595.9 1016.6 595.9 1017.1 595.9 1017.6 595.9 1018.1 595.9 1018.6 595.9 1019.1 595.9 1019.6 595.9 1020.1 595.9 1020.6 595.9 1021.1 595.9 1021.6 595.9 1022.1 595.9 1022.6 595.9 1023.1 595.9 1023.6 595.9 1024.1 595.9 1024.6 595.9 1025.1 595.9 1025.6 595.9 1026.1 595.9 1026.5 595.9 1027.0 595.9 1027.5 595.9 1028.0 595.9 1028.5 595.9 1029.0 595.9 1029.5 595.9 1030.0 595.9 1030.5 595.9 1031.0 595.9 1031.5 595.9 1032.0 595.9 1032.5 595.9 1033.0 595.9 1033.5 595.9 1034.0 595.9 1034.5 595.9 1035.0 595.9 1035.5 595.9 1036.0 595.9 1036.5 595.9 1037.0 595.9 1037.5 595.9 1038.0 595.9 1038.5 595.9 1039.0 595.9 1039.5 595.9 1040.0 595.9 1040.5 595.9 1041.0 595.9 L1041.0 596 L593.0 596Z" fill="#6ed0e0" fill-opacity=".1"/><path d="M593.0 595.9 593.5 595.9 594.0 595.9 594.5 595.9 595.0 595.9 595.5 595.9 596.0 595.9 596.5 595.9 597.0 595.9 597.5 595.9 598.0 595.9 598.5 595.9 599.0 595.9 599.5 595.9 600.0 595.9 600.5 595.9 601.0 595.9 601.5 595.9 602.0 595.9 602.5 595.9 603.0 595.9 603.5 595.9 604.0 595.9 604.5 595.9 605.0 595.9 605.5 595.9 606.0 595.9 606.5 595.9 607.0 595.9 607.5 595.9 607.9 595.9 608.4 595.9 608.9 595.9 609.4 595.9 609.9 595.9 610.4 595.9 610.9 595.9 611.4 595.9 611.9 595.9 612.4 595.9 612.9 595.9 613.4 595.9 613.9 595.9 614.4 595.9 614.9 595.9 615.4 595.9 615.9 595.9 616.4 595.9 616.9 595.9 617.4 595.9 617.9 595.9 618.4 595.9 618.9 595.9 619.4 595.9 619.9 595.9 620.4 595.9 620.9 595.9 621.4 595.9 621.9 595.9 622.4 595.9 622.9 595.9 623.4 595.9 623.9 595.9 624.4 595.9 624.9 595.9 625.4 595.9 625.9 595.9 626.4 595.9 626.9 595.9 627.4 595.9 627.9 595.9 628.4 595.9 628.9 595.9 629.4 595.9 629.9 595.9 630.4 595.9 630.9 595.9 631.4 595.9 631.9 595.9 632.4 595.9 632.9 595.9 633.4 595.9 633.9 595.9 634.4 595.9 634.9 595.9 635.4 595.9 635.9 595.9 636.4 595.9 636.9 595.9 637.4 595.9 637.8 595.9 638.3 595.9 638.8 595.9 639.3 595.9 639.8 595.9 640.3 595.9 640.8 595.9 641.3 595.9 641.8 595.9 642.3 595.9 642.8 595.9 643.3 595.9 643.8 595.9 644.3 595.9 644.8 595.9 645.3 595.9 645.8 595.9 646.3 595.9 646.8 595.9 647.3 595.9 647.8 595.9 648.3 595.9 648.8 595.9 649.3 595.9 649.8 595.9 650.3 595.9 650.8 595.9 651.3 595.9 651.8 595.9 652.3 595.9 652.8 595.9 653.3 595.9 653.8 595.9 654.3 595.9 654.8 595.9 655.3 595.9 655.8 595.9 656.3 595.9 656.8 595.9 657.3 595.9 657.8 595.9 658.3 595.9 658.8 595.9 659.3 595.9 659.8 595.9 660.3 595.9 660.8 595.9 661.3 595.9 661.8 595.9 662.3 595.9 662.8 595.9 663.3 595.9 663.8 595.9 664.3 595.9 664.8 595.9 665.3 595.9 665.8 595.9 666.3 595.9 666.8 595.9 667.3 595.9 667.7 595.9 668.2 595.9 668.7 595.9 669.2 595.9 669.7 595.9 670.2 595.9 670.7 595.9 671.2 595.9 671.7 595.9 672.2 595.9 672.7 595.9 673.2 595.9 673.7 595.9 674.2 595.9 674.7 595.9 675.2 595.9 675.7 595.9 676.2 595.9 676.7 595.9 677.2 595.9 677.7 595.9 678.2 595.9 678.7 595.9 679.2 595.9 679.7 595.9 680.2 595.9 680.7 595.9 681.2 595.9 681.7 595.9 682.2 595.9 682.7 595.9 683.2 595.9 683.7 595.9 684.2 595.9 684.7 595.9 685.2 595.9 685.7 595.9 686.2 595.9 686.7 595.9 687.2 595.9 687.7 595.9 688.2 595.9 688.7 595.9 689.2 595.9 689.7 595.9 690.2 595.9 690.7 595.9 691.2 595.9 691.7 595.9 692.2 595.9 692.7 595.9 693.2 595.9 693.7 595.9 694.2 595.9 694.7 595.9 695.2 595.9 695.7 595.9 696.2 595.9 696.7 595.9 697.2 595.9 697.6 595.9 698.1 595.9 698.6 595.9 699.1 595.9 699.6 595.9 700.1 595.9 700.6 595.9 701.1 595.9 701.6 595.9 702.1 595.9 702.6 595.9 703.1 595.9 703.6 595.9 704.1 595.9 704.6 595.9 705.1 595.9 705.6 595.9 706.1 595.9 706.6 595.9 707.1 595.9 707.6 595.9 708.1 595.9 708.6 595.9 709.1 595.9 709.6 595.9 710.1 595.9 710.6 595.9 711.1 595.9 711.6 595.9 712.1 595.9 712.6 595.9 713.1 595.9 713.6 595.9 714.1 595.9 714.6 595.9 715.1 595.9 715.6 595.9 716.1 595.9 716.6 595.9 717.1 595.9 717.6 595.9 718.1 595.9 718.6 595.9 719.1 595.9 719.6 595.9 720.1 595.9 720.6 595.9 721.1 595.9 721.6 595.9 722.1 595.9 722.6 595.9 723.1 595.9 723.6 595.9 724.1 595.9 724.6 595.9 725.1 595.9 725.6 595.9 726.1 595.9 726.6 595.9 727.1 595.9 727.5 595.9 728.0 595.9 728.5 595.9 729.0 595.9 729.5 595.9 730.0 595.9 730.5 595.9 731.0 595.9 731.5 595.9 732.0 595.9 732.5 595.9 733.0 595.9 733.5 595.9 734.0 595.9 734.5 595.9 735.0 595.9 735.5 595.9 736.0 595.9 736.5 595.9 737.0 595.9 737.5 595.9 738.0 595.9 738.5 595.9 739.0 595.9 739.5 595.9 740.0 595.9 740.5 595.9 741.0 595.9 741.5 595.9 742.0 595.9 742.5 595.9 743.0 595.9 743.5 595.9 744.0 595.9 744.5 595.9 745.0 595.9 745.5 595.9 746.0 595.9 746.5 595.9 747.0 595.9 747.5 595.9 748.0 595.9 748.5 595.9 749.0 595.9 749.5 595.9 750.0 595.9 750.5 595.9 751.0 595.9 751.5 595.9 752.0 595.9 752.5 595.9 753.0 595.9 753.5 595.9 754.0 595.9 754.5 595.9 755.0 595.9 755.5 595.9 756.0 595.9 756.5 595.9 757.0 595.9 757.4 595.9 757.9 595.9 758.4 595.9 758.9 595.9 759.4 595.9 759.9 595.9 760.4 595.9 760.9 595.9 761.4 595.9 761.9 595.9 762.4 595.9 762.9 595.9 763.4 595.9 763.9 595.9 764.4 595.9 764.9 595.9 765.4 595.9 765.9 595.9 766.4 595.9 766.9 595.9 767.4 595.9 767.9 595.9 768.4 595.9 768.9 595.9 769.4 595.9 769.9 595.9 770.4 595.9 770.9 595.9 771.4 595.9 771.9 595.9 772.4 595.9 772.9 595.9 773.4 595.9 773.9 595.9 774.4 595.9 774.9 595.9 775.4 595.9 775.9 595.9 776.4 595.9 776.9 595.9 777.4 595.9 777.9 595.9 778.4 595.9 778.9 595.9 779.4 595.9 779.9 595.9 780.4 595.9 780.9 595.9 781.4 595.9 781.9 595.9 782.4 595.9 782.9 595.9 783.4 595.9 783.9 595.9 784.4 595.9 784.9 595.9 785.4 595.9 785.9 595.9 786.4 595.9 786.9 595.9 787.3 595.9 787.8 595.9 788.3 595.9 788.8 595.9 789.3 595.9 789.8 595.9 790.3 595.9 790.8 595.9 791.3 595.9 791.8 595.9 792.3 595.9 792.8 595.9 793.3 595.9 793.8 595.9 794.3 595.9 794.8 595.9 795.3 595.9 795.8 595.9 796.3 595.9 796.8 595.9 797.3 595.9 797.8 595.9 798.3 595.9 798.8 595.9 799.3 595.9 799.8 595.9 800.3 595.9 800.8 595.9 801.3 595.9 801.8 595.9 802.3 595.9 802.8 595.9 803.3 595.9 803.8 595.9 804.3 595.9 804.8 595.9 805.3 595.9 805.8 595.9 806.3 595.9 806.8 595.9 807.3 595.9 807.8 595.9 808.3 595.9 808.8 595.9 809.3 595.9 809.8 595.9 810.3 595.9 810.8 595.9 811.3 595.9 811.8 595.9 812.3 595.9 812.8 595.9 813.3 595.9 813.8 595.9 814.3 595.9 814.8 595.9 815.3 595.9 815.8 595.9 816.3 595.9 816.8 595.9 817.2 595.9 817.7 595.9 818.2 595.9 818.7 595.9 819.2 595.9 819.7 595.9 820.2 595.9 820.7 595.9 821.2 595.9 821.7 595.9 822.2 595.9 822.7 595.9 823.2 595.9 823.7 595.9 824.2 595.9 824.7 595.9 825.2 595.9 825.7 595.9 826.2 595.9 826.7 595.9 827.2 595.9 827.7 595.9 828.2 595.9 828.7 595.9 829.2 595.9 829.7 595.9 830.2 595.9 830.7 595.9 831.2 595.9 831.7 595.9 832.2 595.9 832.7 595.9 833.2 595.9 833.7 595.9 834.2 595.9 834.7 595.9 835.2 595.9 835.7 595.9 836.2 595.9 836.7 595.9 837.2 595.9 837.7 595.9 838.2 595.9 838.7 595.9 839.2 595.9 839.7 595.9 840.2 595.9 840.7 595.9 841.2 595.9 841.7 595.9 842.2 595.9 842.7 595.9 843.2 595.9 843.7 595.9 844.2 595.9 844.7 595.9 845.2 595.9 845.7 595.9 846.2 595.9 846.7 595.9 847.1 595.9 847.6 595.9 848.1 595.9 848.6 595.9 849.1 595.9 849.6 595.9 850.1 595.9 850.6 595.9 851.1 595.9 851.6 595.9 852.1 595.9 852.6 595.9 853.1 595.9 853.6 595.9 854.1 595.9 854.6 595.9 855.1 595.9 855.6 595.9 856.1 595.9 856.6 595.9 857.1 595.9 857.6 595.9 858.1 595.9 858.6 595.9 859.1 595.9 859.6 595.9 860.1 595.9 860.6 595.9 861.1 595.9 861.6 595.9 862.1 595.9 862.6 595.9 863.1 595.9 863.6 595.9 864.1 595.9 864.6 595.9 865.1 595.9 865.6 595.9 866.1 595.9 866.6 595.9 867.1 595.9 867.6 595.9 868.1 595.9 868.6 595.9 869.1 595.9 869.6 595.9 870.1 595.9 870.6 595.9 871.1 595.9 871.6 595.9 872.1 595.9 872.6 595.9 873.1 595.9 873.6 595.9 874.1 595.9 874.6 595.9 875.1 595.9 875.6 595.9 876.1 595.9 876.6 595.9 877.0 595.9 877.5 595.9 878.0 595.9 878.5 595.9 879.0 595.9 879.5 595.9 880.0 595.9 880.1 595.9 881.2 595.6 882.0 507.1 882.8 508.5 883.6 596.1 884.4 596.1 885.2 539.6 886.3 540.9 887.1 596.1 888.2 595.9 888.5 595.9 889.0 595.9 889.5 595.9 890.0 595.9 890.5 595.9 891.0 595.9 891.5 595.9 892.0 595.9 892.5 595.9 893.0 595.9 893.5 595.9 894.0 595.9 894.5 595.9 895.0 595.9 895.5 595.9 896.0 595.9 896.5 595.9 897.0 595.9 897.5 595.9 898.0 595.9 898.5 595.9 899.0 595.9 899.5 595.9 900.0 595.9 900.5 595.9 901.0 595.9 901.5 595.9 902.0 595.9 902.5 595.9 903.0 595.9 903.5 595.9 904.0 595.9 904.5 595.9 905.0 595.9 905.5 595.9 906.0 595.9 906.5 595.9 906.9 595.9 907.4 595.9 907.9 595.9 908.4 595.9 908.9 595.9 909.4 595.9 909.9 595.9 910.4 595.9 910.9 595.9 911.4 595.9 911.9 595.9 912.4 595.9 912.9 595.9 913.4 595.9 913.9 595.9 914.4 595.9 914.9 595.9 915.4 595.9 915.9 595.9 916.4 595.9 916.9 595.9 917.4 595.9 917.9 595.9 918.4 595.9 918.9 595.9 919.4 595.9 919.9 595.9 920.4 595.9 920.9 595.9 921.4 595.9 921.9 595.9 922.4 595.9 922.9 595.9 923.4 595.9 923.9 595.9 924.4 595.9 924.9 595.9 925.4 595.9 925.9 595.9 926.4 595.9 926.9 595.9 927.4 595.9 927.9 595.9 928.4 595.9 928.9 595.9 929.4 595.9 929.9 595.9 930.4 595.9 930.9 595.9 931.4 595.9 931.9 595.9 932.4 595.9 932.9 595.9 933.4 595.9 933.9 595.9 934.4 595.9 934.9 595.9 935.4 595.9 935.9 595.9 936.4 595.9 936.8 595.9 937.3 595.9 937.8 595.9 938.3 595.9 938.8 595.9 939.3 595.9 939.8 595.9 940.3 595.9 940.8 595.9 941.3 595.9 941.8 595.9 942.3 595.9 942.8 595.9 943.3 595.9 943.8 595.9 944.3 595.9 944.8 595.9 945.3 595.9 945.8 595.9 946.3 595.9 946.8 595.9 947.3 595.9 947.8 595.9 948.3 595.9 948.8 595.9 949.3 595.9 949.8 595.9 950.3 595.9 950.8 595.9 951.3 595.9 951.8 595.9 952.3 595.9 952.8 595.9 953.3 595.9 953.8 595.9 954.3 595.9 954.8 595.9 955.3 595.9 955.8 595.9 956.3 595.9 956.8 595.9 957.3 595.9 957.8 595.9 958.3 595.9 958.8 595.9 959.3 595.9 959.8 595.9 960.3 595.9 960.8 595.9 961.3 595.9 961.8 595.9 962.3 595.9 962.8 595.9 963.3 595.9 963.8 595.9 964.3 595.9 964.8 595.9 965.3 595.9 965.8 595.9 966.3 595.9 966.7 595.9 967.2 595.9 967.7 595.9 968.2 595.9 968.7 595.9 969.2 595.9 969.7 595.9 970.2 595.9 970.7 595.9 971.2 595.9 971.7 595.9 972.2 595.9 972.7 595.9 973.2 595.9 973.7 595.9 974.2 595.9 974.7 595.9 975.2 595.9 975.7 595.9 976.2 595.9 976.7 595.9 977.2 595.9 977.7 595.9 978.2 595.9 978.7 595.9 979.2 595.9 979.7 595.9 980.2 595.9 980.7 595.9 981.2 595.9 981.7 595.9 982.2 595.9 982.7 595.9 983.2 595.9 983.7 595.9 984.2 595.9 984.7 595.9 985.2 595.9 985.7 595.9 986.2 595.9 986.7 595.9 987.2 595.9 987.7 595.9 988.2 595.9 988.7 595.9 989.2 595.9 989.7 595.9 990.2 595.9 990.7 595.9 991.2 595.9 991.7 595.9 992.2 595.9 992.7 595.9 993.2 595.9 993.7 595.9 994.2 595.9 994.7 595.9 995.2 595.9 995.7 595.9 996.2 595.9 996.6 595.9 997.1 595.9 997.6 595.9 998.1 595.9 998.6 595.9 999.1 595.9 999.6 595.9 1000.1 595.9 1000.6 595.9 1001.1 595.9 1001.6 595.9 1002.1 595.9 1002.6 595.9 1003.1 595.9 1003.6 595.9 1004.1 595.9 1004.6 595.9 1005.1 595.9 1005.6 595.9 1006.1 595.9 1006.6 595.9 1007.1 595.9 1007.6 595.9 1008.1 595.9 1008.6 595.9 1009.1 595.9 1009.6 595.9 1010.1 595.9 1010.6 595.9 1011.1 595.9 1011.6 595.9 1012.1 595.9 1012.6 595.9 1013.1 595.9 1013.6 595.9 1014.1 595.9 1014.6 595.9 1015.1 595.9 1015.6 595.9 1016.1 595.9 1016.6 595.9 1017.1 595.9 1017.6 595.9 1018.1 595.9 1018.6 595.9 1019.1 595.9 1019.6 595.9 1020.1 595.9 1020.6 595.9 1021.1 595.9 1021.6 595.9 1022.1 595.9 1022.6 595.9 1023.1 595.9 1023.6 595.9 1024.1 595.9 1024.6 595.9 1025.1 595.9 1025.6 595.9 1026.1 595.9 1026.5 595.9 1027.0 595.9 1027.5 595.9 1028.0 595.9 1028.5 595.9 1029.0 595.9 1029.5 595.9 1030.0 595.9 1030.5 595.9 1031.0 595.9 1031.5 595.9 1032.0 595.9 1032.5 595.9 1033.0 595.9 1033.5 595.9 1034.0 595.9 1034.5 595.9 1035.0 595.9 1035.5 595.9 1036.0 595.9 1036.5 595.9 1037.0 595.9 1037.5 595.9 1038.0 595.9 1038.5 595.9 1039.0 595.9 1039.5 595.9 1040.0 595.9 1040.5 595.9 1041.0 595.9" fill="none" stroke="#6ed0e0" stroke-width="1" stroke-linejoin="round"/></g></svg>
<div class="a ax r" style="left:508px;width:80px;top:392.7px"><span class="sr" style="transform:scaleX(.955)">12.5 A</span></div>
<div class="a ax r" style="left:508px;width:80px;top:432.1px"><span class="sr" style="transform:scaleX(.955)">10.0 A</span></div>
<div class="a ax r" style="left:508px;width:80px;top:471.4px"><span class="sr" style="transform:scaleX(.955)">7.5 A</span></div>
<div class="a ax r" style="left:508px;width:80px;top:510.8px"><span class="sr" style="transform:scaleX(.955)">5.0 A</span></div>
<div class="a ax r" style="left:508px;width:80px;top:550.1px"><span class="sr" style="transform:scaleX(.955)">2.5 A</span></div>
<div class="a ax r" style="left:508px;width:80px;top:589.5px"><span class="sr" style="transform:scaleX(.955)">0 A</span></div>
<div class="a ax c" style="left:617.6px;width:60px;top:603px"><span class="sc" style="transform:scaleX(.957)">00:00</span></div>
<div class="a ax c" style="left:692.3px;width:60px;top:603px"><span class="sc" style="transform:scaleX(.957)">04:00</span></div>
<div class="a ax c" style="left:766.9px;width:60px;top:603px"><span class="sc" style="transform:scaleX(.957)">08:00</span></div>
<div class="a ax c" style="left:841.6px;width:60px;top:603px"><span class="sc" style="transform:scaleX(.957)">12:00</span></div>
<div class="a ax c" style="left:916.3px;width:60px;top:603px"><span class="sc" style="transform:scaleX(.957)">16:00</span></div>
<div class="a ax c" style="left:991.0px;width:60px;top:603px"><span class="sc" style="transform:scaleX(.957)">20:00</span></div>
<div class="a lh r" style="left:872.0px;width:70px;top:626px">min</div>
<div class="a lh r" style="left:919.0px;width:70px;top:626px">max</div>
<div class="a lh r" style="left:967.5px;width:70px;top:626px">current</div>
<div class="a" style="left:562px;top:663px;width:485px;height:21px;background:#262628"></div>
<div class="a" style="left:562px;top:654px;width:12px;height:3px;background:#7eb26d;border-radius:1px"></div>
<div class="a ln" style="left:581px;top:646px"><span class="sl" style="transform:scaleX(.9)">L1</span></div>
<div class="a lg r" style="left:852.0px;width:90px;top:646px">1 A</div>
<div class="a lg r" style="left:899.0px;width:90px;top:646px">1 A</div>
<div class="a lg r" style="left:947.5px;width:90px;top:646px">1 A</div>
<div class="a" style="left:562px;top:674px;width:12px;height:3px;background:#eab839;border-radius:1px"></div>
<div class="a ln" style="left:581px;top:666px"><span class="sl" style="transform:scaleX(.9)">L2</span></div>
<div class="a lg r" style="left:852.0px;width:90px;top:666px">0 A</div>
<div class="a lg r" style="left:899.0px;width:90px;top:666px">11 A</div>
<div class="a lg r" style="left:947.5px;width:90px;top:666px">1 A</div>
<div class="a" style="left:562px;top:695px;width:12px;height:3px;background:#6ed0e0;border-radius:1px"></div>
<div class="a ln" style="left:581px;top:687px"><span class="sl" style="transform:scaleX(.9)">L3</span></div>
<div class="a lg r" style="left:852.0px;width:90px;top:687px">0 A</div>
<div class="a lg r" style="left:899.0px;width:90px;top:687px">6 A</div>
<div class="a lg r" style="left:947.5px;width:90px;top:687px">0 A</div>
<div class="a ttl" style="left:1073.6px;top:371px;width:518.8px"><span>Wirkleistung</span></div>
<svg class="a" style="left:0;top:390px" width="1607" height="215" viewBox="0 390 1607 215"><path d="M1123 399.5H1569" stroke="#fff" stroke-opacity=".16" stroke-width="1"/><path d="M1123 432.5H1569" stroke="#fff" stroke-opacity=".16" stroke-width="1"/><path d="M1123 464.5H1569" stroke="#fff" stroke-opacity=".16" stroke-width="1"/><path d="M1123 497.5H1569" stroke="#fff" stroke-opacity=".16" stroke-width="1"/><path d="M1123 530.5H1569" stroke="#fff" stroke-opacity=".16" stroke-width="1"/><path d="M1123 563.5H1569" stroke="#fff" stroke-opacity=".16" stroke-width="1"/><path d="M1123 596.5H1569" stroke="#fff" stroke-opacity=".16" stroke-width="1"/><path d="M1177.5 399V596" stroke="#fff" stroke-opacity=".16" stroke-width="1"/><path d="M1251.5 399V596" stroke="#fff" stroke-opacity=".16" stroke-width="1"/><path d="M1326.5 399V596" stroke="#fff" stroke-opacity=".16" stroke-width="1"/><path d="M1400.5 399V596" stroke="#fff" stroke-opacity=".16" stroke-width="1"/><path d="M1474.5 399V596" stroke="#fff" stroke-opacity=".16" stroke-width="1"/><path d="M1549.5 399V596" stroke="#fff" stroke-opacity=".16" stroke-width="1"/><clipPath id="cp1123"><rect x="1123" y="396" width="446" height="201.500"/></clipPath><g clip-path="url(#cp1123)"><path d="M1123.0 588.0 1123.5 588.0 1124.0 588.0 1124.5 588.0 1125.0 588.0 1125.5 588.0 1126.0 588.0 1126.5 588.0 1127.0 588.0 1127.5 588.0 1128.0 588.0 1128.5 588.0 1129.0 588.0 1129.4 588.0 1129.9 588.0 1130.4 588.0 1130.9 588.0 1131.4 588.0 1131.9 588.0 1132.4 588.0 1132.9 588.0 1133.4 588.0 1133.9 588.0 1134.4 588.0 1134.9 588.0 1135.4 588.0 1135.9 588.0 1136.4 588.0 1136.9 588.0 1137.4 588.0 1137.9 588.0 1138.4 588.0 1138.9 588.0 1139.4 588.0 1139.9 588.0 1140.4 588.0 1140.9 588.0 1141.4 588.0 1141.9 588.0 1142.3 588.0 1142.8 588.0 1143.3 588.0 1143.8 588.0 1144.3 588.0 1144.8 588.0 1145.3 588.0 1145.8 588.0 1146.3 588.0 1146.8 588.0 1147.3 588.0 1147.8 588.0 1148.3 588.0 1148.8 588.0 1149.3 588.0 1149.8 588.0 1150.3 588.0 1150.8 588.0 1151.3 588.0 1151.8 588.0 1152.3 588.0 1152.8 588.0 1153.3 588.0 1153.8 588.0 1154.3 588.0 1154.8 588.0 1155.2 588.0 1155.7 588.0 1156.2 584.5 1156.7 580.9 1157.2 577.3 1157.7 577.3 1158.2 577.3 1158.7 577.3 1159.2 577.4 1159.7 577.4 1160.2 577.4 1160.7 577.4 1161.2 577.4 1161.7 577.4 1162.2 577.4 1162.7 577.4 1163.2 577.4 1163.7 577.4 1164.2 577.4 1164.7 577.4 1165.2 577.4 1165.7 577.4 1166.2 577.4 1166.7 577.4 1167.2 577.4 1167.6 577.4 1168.1 577.5 1168.6 577.5 1169.1 577.5 1169.6 577.5 1170.1 577.5 1170.6 577.5 1171.1 577.5 1171.6 577.5 1172.1 577.5 1172.6 577.5 1173.1 577.5 1173.6 577.5 1174.1 577.5 1174.6 577.5 1175.1 577.5 1175.6 577.5 1176.1 577.5 1176.6 577.5 1177.1 577.6 1177.6 577.6 1178.1 577.6 1178.6 577.6 1179.1 577.6 1179.6 577.6 1180.1 577.6 1180.5 577.6 1181.0 577.6 1181.5 577.6 1182.0 577.6 1182.5 577.6 1183.0 577.6 1183.5 577.6 1184.0 577.6 1184.5 577.6 1185.0 577.6 1185.5 577.6 1186.0 577.7 1186.5 577.7 1187.0 577.7 1187.5 577.7 1188.0 577.7 1188.5 577.7 1189.0 577.7 1189.5 577.7 1190.0 577.7 1190.5 577.7 1191.0 577.7 1191.5 577.7 1192.0 577.7 1192.5 577.7 1193.0 577.7 1193.4 577.7 1193.9 577.7 1194.4 577.8 1194.9 577.8 1195.4 577.8 1195.9 577.8 1196.4 577.8 1196.9 577.8 1197.4 577.8 1197.9 577.8 1198.4 577.8 1198.9 578.1 1199.4 580.8 1199.9 583.4 1200.4 586.1 1200.9 588.8 1201.4 588.8 1201.9 588.8 1202.4 588.8 1202.9 588.8 1203.4 588.8 1203.9 588.8 1204.4 588.8 1204.9 588.8 1205.4 588.8 1205.8 588.8 1206.3 588.7 1206.8 588.7 1207.3 588.7 1207.8 588.7 1208.3 588.7 1208.8 588.7 1209.3 588.7 1209.8 588.7 1210.3 588.7 1210.8 588.7 1211.3 588.7 1211.8 588.7 1212.3 588.7 1212.8 588.7 1213.3 588.7 1213.8 588.7 1214.3 588.7 1214.8 588.7 1215.3 588.7 1215.8 588.7 1216.3 588.7 1216.8 588.7 1217.3 588.7 1217.8 588.7 1218.3 588.7 1218.7 588.7 1219.2 588.7 1219.7 588.7 1220.2 588.7 1220.7 588.7 1221.2 588.7 1221.7 588.7 1222.2 588.7 1222.7 588.7 1223.2 588.7 1223.7 588.7 1224.2 588.7 1224.7 588.7 1225.2 588.7 1225.7 588.7 1226.2 588.6 1226.7 588.6 1227.2 588.6 1227.7 588.6 1228.2 588.6 1228.7 588.6 1229.2 588.6 1229.7 588.6 1230.2 588.6 1230.7 588.6 1231.2 588.6 1231.6 588.6 1232.1 588.6 1232.6 588.6 1233.1 588.6 1233.6 588.6 1234.1 588.6 1234.6 588.6 1235.1 588.6 1235.6 588.6 1236.1 588.6 1236.6 588.6 1237.1 588.6 1237.6 588.6 1238.1 588.6 1238.6 588.6 1239.1 588.6 1239.6 588.6 1240.1 588.6 1240.6 588.6 1241.1 588.6 1241.6 588.6 1242.1 588.6 1242.6 588.6 1243.1 588.6 1243.6 588.6 1244.1 588.6 1244.5 588.6 1245.0 588.6 1245.5 588.6 1246.0 588.6 1246.5 588.5 1247.0 588.5 1247.5 588.5 1248.0 588.5 1248.5 588.5 1249.0 588.5 1249.5 588.5 1250.0 588.5 1250.5 588.5 1251.0 588.5 1251.5 588.5 1252.0 588.5 1252.5 588.5 1253.0 588.5 1253.5 588.5 1254.0 588.5 1254.5 588.5 1255.0 588.5 1255.5 588.5 1256.0 588.5 1256.5 588.5 1256.9 588.5 1257.4 588.5 1257.9 588.5 1258.4 588.5 1258.9 588.5 1259.4 588.5 1259.9 588.5 1260.4 588.5 1260.9 588.5 1261.4 588.5 1261.9 588.5 1262.4 588.5 1262.9 588.5 1263.4 588.5 1263.9 588.5 1264.4 588.5 1264.9 588.5 1265.4 588.5 1265.9 588.5 1266.4 588.4 1266.9 588.4 1267.4 588.4 1267.9 588.4 1268.4 588.4 1268.9 588.4 1269.4 588.4 1269.8 588.4 1270.3 588.4 1270.8 588.4 1271.3 588.4 1271.8 588.4 1272.3 588.4 1272.8 588.4 1273.3 588.4 1273.8 588.4 1274.3 588.4 1274.8 588.4 1275.3 588.4 1275.8 588.4 1276.3 588.4 1276.8 588.4 1277.3 588.4 1277.8 588.4 1278.3 588.4 1278.8 588.4 1279.3 588.4 1279.8 588.4 1280.3 588.4 1280.8 588.4 1281.3 588.4 1281.8 588.4 1282.3 588.4 1282.7 588.4 1283.2 588.4 1283.7 588.4 1284.2 588.4 1284.7 588.4 1285.2 588.4 1285.7 588.4 1286.2 588.4 1286.7 588.3 1287.2 588.3 1287.7 588.3 1288.2 588.3 1288.7 588.3 1289.2 588.3 1289.7 588.3 1290.2 588.3 1290.7 588.3 1291.2 588.3 1291.7 588.3 1292.2 588.3 1292.7 588.3 1293.2 588.3 1293.7 588.3 1294.2 588.3 1294.7 588.3 1295.1 588.3 1295.6 588.3 1296.1 588.3 1296.6 588.3 1297.1 588.3 1297.6 588.3 1298.1 588.3 1298.6 588.3 1299.1 588.3 1299.6 588.3 1300.1 588.3 1300.6 588.3 1301.1 588.3 1301.6 588.3 1302.1 588.3 1302.6 588.3 1303.1 588.3 1303.6 588.3 1304.1 588.3 1304.6 588.3 1305.1 588.3 1305.6 588.3 1306.1 588.3 1306.6 588.2 1307.1 588.2 1307.6 588.2 1308.0 588.2 1308.5 588.2 1309.0 588.2 1309.5 588.2 1310.0 588.2 1310.5 588.2 1311.0 588.2 1311.5 588.2 1312.0 588.2 1312.5 588.2 1313.0 588.2 1313.5 588.2 1314.0 588.2 1314.5 588.2 1315.0 588.2 1315.5 588.2 1316.0 588.2 1316.5 588.2 1317.0 588.2 1317.5 588.2 1318.0 588.2 1318.5 588.2 1319.0 588.2 1319.5 588.2 1320.0 588.2 1320.5 588.2 1320.9 588.2 1321.4 588.2 1321.9 588.2 1322.4 588.2 1322.9 588.2 1323.4 588.2 1323.9 588.2 1324.4 588.2 1324.9 588.2 1325.4 588.2 1325.9 588.2 1326.4 588.2 1326.9 588.1 1327.4 588.1 1327.9 588.1 1328.4 588.1 1328.9 588.1 1329.4 588.1 1329.9 588.1 1330.4 588.1 1330.9 588.1 1331.4 588.1 1331.9 588.1 1332.4 588.1 1332.9 588.1 1333.3 588.1 1333.8 588.1 1334.3 588.1 1334.8 588.1 1335.3 588.1 1335.8 588.1 1336.3 588.1 1336.8 588.1 1337.3 588.1 1337.8 588.1 1338.3 588.1 1338.8 588.1 1339.3 588.1 1339.8 588.1 1340.3 588.1 1340.8 588.1 1341.3 588.1 1341.8 588.1 1342.3 588.1 1342.8 588.1 1343.3 588.1 1343.8 588.1 1344.3 588.1 1344.8 588.1 1345.3 588.1 1345.8 588.1 1346.2 588.1 1346.7 588.1 1347.2 588.0 1347.7 588.0 1348.2 588.0 1348.7 588.0 1349.2 588.0 1349.7 588.0 1350.2 588.0 1350.7 588.0 1351.2 588.0 1351.7 588.0 1352.2 588.0 1352.7 588.0 1353.2 588.0 1353.7 588.0 1354.2 588.0 1354.7 588.0 1355.2 588.0 1355.7 588.0 1356.2 588.0 1356.7 588.0 1357.2 588.0 1357.7 588.0 1358.2 588.0 1358.7 588.0 1359.1 588.0 1359.6 588.0 1360.1 588.0 1360.6 588.0 1361.1 588.0 1361.6 588.0 1362.1 588.0 1362.6 588.0 1363.1 588.0 1363.6 588.0 1364.1 588.0 1364.6 588.0 1365.1 588.0 1365.6 588.0 1366.1 588.0 1366.6 588.0 1367.1 587.9 1367.6 587.9 1368.1 587.9 1368.6 587.9 1369.1 587.9 1369.6 587.9 1370.1 587.9 1370.6 587.9 1371.1 587.9 1371.5 587.9 1372.0 587.9 1372.5 587.9 1373.0 587.9 1373.5 587.9 1374.0 587.9 1374.5 587.9 1375.0 587.9 1375.5 587.9 1376.0 587.9 1376.5 587.9 1377.0 587.9 1377.5 587.9 1378.0 587.9 1378.5 587.9 1379.0 587.9 1379.5 587.9 1380.0 587.9 1380.5 587.9 1381.0 587.9 1381.5 587.9 1382.0 587.9 1382.5 587.9 1383.0 587.9 1383.5 587.9 1384.0 587.9 1384.4 587.9 1384.9 587.9 1385.4 587.9 1385.9 587.9 1386.4 587.9 1386.9 587.9 1387.4 587.8 1387.9 587.8 1388.4 587.8 1388.9 587.8 1389.4 587.8 1389.9 587.8 1390.4 587.8 1390.9 587.8 1391.4 587.8 1391.9 587.8 1392.4 587.8 1392.9 587.8 1393.4 587.8 1393.9 587.8 1394.4 587.8 1394.9 587.8 1395.4 587.8 1395.9 587.8 1396.4 587.8 1396.9 587.8 1397.3 587.8 1397.8 587.8 1398.3 587.8 1398.8 587.8 1399.3 587.8 1399.8 587.8 1400.3 587.8 1400.8 587.8 1401.3 587.8 1401.8 587.8 1402.3 587.8 1402.8 587.8 1403.3 587.8 1403.8 587.8 1404.3 587.8 1404.8 587.8 1405.3 587.8 1405.8 587.8 1406.3 587.8 1406.8 587.8 1407.3 587.7 1407.8 587.7 1408.3 587.7 1408.8 587.7 1409.3 587.7 1409.7 587.7 1410.2 587.7 1410.7 587.7 1411.2 587.7 1411.7 587.7 1412.2 587.7 1412.7 587.7 1413.2 587.7 1413.7 587.7 1414.2 587.7 1414.7 587.7 1415.2 587.7 1415.7 587.7 1416.2 587.7 1416.7 587.7 1417.2 587.7 1417.7 587.7 1418.2 587.7 1418.7 587.7 1419.2 587.7 1419.7 587.7 1420.2 587.7 1420.7 587.7 1421.2 587.7 1421.7 587.7 1422.2 587.7 1422.6 587.7 1423.1 587.7 1423.6 587.7 1424.1 587.7 1424.6 587.7 1425.1 587.7 1425.6 587.7 1426.1 587.7 1426.6 587.7 1427.1 587.7 1427.6 587.6 1428.1 587.6 1428.6 587.6 1429.1 587.6 1429.6 587.6 1430.1 587.6 1430.6 587.6 1431.1 587.6 1431.6 587.6 1432.1 587.6 1432.6 587.6 1433.1 587.6 1433.6 587.6 1434.1 587.6 1434.6 587.6 1435.1 587.6 1435.5 587.6 1436.0 587.6 1436.5 587.6 1437.0 587.6 1437.5 587.6 1438.0 587.6 1438.5 587.6 1439.0 587.6 1439.5 587.6 1440.0 587.6 1440.5 587.6 1441.0 587.6 1441.5 587.6 1442.0 587.6 1442.5 587.6 1443.0 587.6 1443.5 587.6 1444.0 587.6 1444.5 587.6 1445.0 587.6 1445.5 587.6 1446.0 587.6 1446.5 587.6 1447.0 587.6 1447.5 587.5 1447.9 587.5 1448.4 587.5 1448.9 587.5 1449.4 587.5 1449.9 587.5 1450.4 587.5 1450.9 587.5 1451.4 587.5 1451.9 587.5 1452.4 587.5 1452.9 587.5 1453.4 587.5 1453.9 587.5 1454.4 587.5 1454.9 587.5 1455.4 587.5 1455.9 587.5 1456.4 587.5 1456.9 587.5 1457.4 587.5 1457.9 587.5 1458.4 587.5 1458.9 587.5 1459.4 587.5 1459.9 587.5 1460.4 587.5 1460.8 587.5 1461.3 587.5 1461.8 587.5 1462.3 587.5 1462.8 587.5 1463.3 587.5 1463.8 587.5 1464.3 587.5 1464.8 587.5 1465.3 587.5 1465.8 587.5 1466.3 587.5 1466.8 587.5 1467.3 587.5 1467.8 587.4 1468.3 587.4 1468.8 587.4 1469.3 587.4 1469.8 587.4 1470.3 587.4 1470.8 587.4 1471.3 587.4 1471.8 587.4 1472.3 587.4 1472.8 587.4 1473.3 587.4 1473.7 587.4 1474.2 587.4 1474.7 587.4 1475.2 587.4 1475.7 587.4 1476.2 587.4 1476.7 587.4 1477.2 587.4 1477.7 587.4 1478.2 587.4 1478.7 587.4 1479.2 587.4 1479.7 587.4 1480.2 587.4 1480.7 587.4 1481.2 587.4 1481.7 587.4 1482.2 587.4 1482.7 587.4 1483.2 587.4 1483.7 587.4 1484.2 587.4 1484.7 587.4 1485.2 587.4 1485.7 587.4 1486.2 587.4 1486.6 587.4 1487.1 587.4 1487.6 587.3 1488.1 587.3 1488.6 587.3 1489.1 587.3 1489.6 587.3 1490.1 587.3 1490.6 587.3 1491.1 587.3 1491.6 587.3 1492.1 587.3 1492.6 587.3 1493.1 587.3 1493.6 587.3 1494.1 587.3 1494.6 587.3 1495.1 587.3 1495.6 587.3 1496.1 587.3 1496.6 587.3 1497.1 587.3 1497.6 587.3 1498.1 587.3 1498.6 587.3 1499.0 587.3 1499.5 587.3 1500.0 587.3 1500.5 587.3 1501.0 587.3 1501.5 587.3 1502.0 587.3 1502.5 587.3 1503.0 587.3 1503.5 587.3 1504.0 587.3 1504.5 587.3 1505.0 587.3 1505.5 587.3 1506.0 587.3 1506.5 587.3 1507.0 587.3 1507.5 587.3 1508.0 587.2 1508.5 587.2 1509.0 587.2 1509.5 587.2 1510.0 587.2 1510.5 587.2 1511.0 587.2 1511.5 587.2 1511.9 587.2 1512.4 587.2 1512.9 587.2 1513.4 587.2 1513.9 587.2 1514.4 587.2 1514.9 587.2 1515.4 587.2 1515.9 587.2 1516.4 587.2 1516.9 587.2 1517.4 587.2 1517.9 587.2 1518.4 587.2 1518.9 587.2 1519.4 587.2 1519.9 587.2 1520.4 587.2 1520.9 587.2 1521.4 587.2 1521.9 587.2 1522.4 587.2 1522.9 587.2 1523.4 587.2 1523.9 587.2 1524.4 587.2 1524.8 587.2 1525.3 587.2 1525.8 587.2 1526.3 587.2 1526.8 587.2 1527.3 587.2 1527.8 587.1 1528.3 587.1 1528.8 587.1 1529.3 587.1 1529.8 587.1 1530.3 587.1 1530.8 587.1 1531.3 587.1 1531.8 587.1 1532.3 587.1 1532.8 587.1 1533.3 587.1 1533.8 587.1 1534.3 587.1 1534.8 587.1 1535.3 587.1 1535.8 587.1 1536.3 587.1 1536.8 587.1 1537.2 587.1 1537.7 587.1 1538.2 587.1 1538.7 587.1 1539.2 587.1 1539.7 587.1 1540.2 587.1 1540.7 587.1 1541.2 587.1 1541.7 587.1 1542.2 587.1 1542.7 587.1 1543.2 587.1 1543.7 587.1 1544.2 587.1 1544.7 587.1 1545.2 587.1 1545.7 587.1 1546.2 587.1 1546.7 587.1 1547.2 587.1 1547.7 587.1 1548.2 587.0 1548.7 587.0 1549.2 587.0 1549.7 587.0 1550.1 587.0 1550.6 587.0 1551.1 587.0 1551.6 587.0 1552.1 587.0 1552.6 587.0 1553.1 587.0 1553.6 587.0 1554.1 587.0 1554.6 587.0 1555.1 587.0 1555.6 587.0 1556.1 587.0 1556.6 587.0 1557.1 587.0 1557.6 587.0 1558.1 587.0 1558.6 587.0 1559.1 587.0 1559.6 587.0 1560.1 587.0 1560.6 587.0 1561.1 587.0 1561.6 587.0 1562.1 587.0 1562.6 587.0 1563.0 587.0 1563.5 587.0 1564.0 575.8 1564.5 575.8 1565.0 575.8 1565.5 575.8 1566.0 575.8 1566.5 575.8 1567.0 575.8 1567.5 575.8 1568.0 575.8 1568.5 575.8 1569.0 575.8 L1569.0 596 L1123.0 596Z" fill="#7eb26d" fill-opacity=".1"/><path d="M1123.0 588.0 1123.5 588.0 1124.0 588.0 1124.5 588.0 1125.0 588.0 1125.5 588.0 1126.0 588.0 1126.5 588.0 1127.0 588.0 1127.5 588.0 1128.0 588.0 1128.5 588.0 1129.0 588.0 1129.4 588.0 1129.9 588.0 1130.4 588.0 1130.9 588.0 1131.4 588.0 1131.9 588.0 1132.4 588.0 1132.9 588.0 1133.4 588.0 1133.9 588.0 1134.4 588.0 1134.9 588.0 1135.4 588.0 1135.9 588.0 1136.4 588.0 1136.9 588.0 1137.4 588.0 1137.9 588.0 1138.4 588.0 1138.9 588.0 1139.4 588.0 1139.9 588.0 1140.4 588.0 1140.9 588.0 1141.4 588.0 1141.9 588.0 1142.3 588.0 1142.8 588.0 1143.3 588.0 1143.8 588.0 1144.3 588.0 1144.8 588.0 1145.3 588.0 1145.8 588.0 1146.3 588.0 1146.8 588.0 1147.3 588.0 1147.8 588.0 1148.3 588.0 1148.8 588.0 1149.3 588.0 1149.8 588.0 1150.3 588.0 1150.8 588.0 1151.3 588.0 1151.8 588.0 1152.3 588.0 1152.8 588.0 1153.3 588.0 1153.8 588.0 1154.3 588.0 1154.8 588.0 1155.2 588.0 1155.7 588.0 1156.2 584.5 1156.7 580.9 1157.2 577.3 1157.7 577.3 1158.2 577.3 1158.7 577.3 1159.2 577.4 1159.7 577.4 1160.2 577.4 1160.7 577.4 1161.2 577.4 1161.7 577.4 1162.2 577.4 1162.7 577.4 1163.2 577.4 1163.7 577.4 1164.2 577.4 1164.7 577.4 1165.2 577.4 1165.7 577.4 1166.2 577.4 1166.7 577.4 1167.2 577.4 1167.6 577.4 1168.1 577.5 1168.6 577.5 1169.1 577.5 1169.6 577.5 1170.1 577.5 1170.6 577.5 1171.1 577.5 1171.6 577.5 1172.1 577.5 1172.6 577.5 1173.1 577.5 1173.6 577.5 1174.1 577.5 1174.6 577.5 1175.1 577.5 1175.6 577.5 1176.1 577.5 1176.6 577.5 1177.1 577.6 1177.6 577.6 1178.1 577.6 1178.6 577.6 1179.1 577.6 1179.6 577.6 1180.1 577.6 1180.5 577.6 1181.0 577.6 1181.5 577.6 1182.0 577.6 1182.5 577.6 1183.0 577.6 1183.5 577.6 1184.0 577.6 1184.5 577.6 1185.0 577.6 1185.5 577.6 1186.0 577.7 1186.5 577.7 1187.0 577.7 1187.5 577.7 1188.0 577.7 1188.5 577.7 1189.0 577.7 1189.5 577.7 1190.0 577.7 1190.5 577.7 1191.0 577.7 1191.5 577.7 1192.0 577.7 1192.5 577.7 1193.0 577.7 1193.4 577.7 1193.9 577.7 1194.4 577.8 1194.9 577.8 1195.4 577.8 1195.9 577.8 1196.4 577.8 1196.9 577.8 1197.4 577.8 1197.9 577.8 1198.4 577.8 1198.9 578.1 1199.4 580.8 1199.9 583.4 1200.4 586.1 1200.9 588.8 1201.4 588.8 1201.9 588.8 1202.4 588.8 1202.9 588.8 1203.4 588.8 1203.9 588.8 1204.4 588.8 1204.9 588.8 1205.4 588.8 1205.8 588.8 1206.3 588.7 1206.8 588.7 1207.3 588.7 1207.8 588.7 1208.3 588.7 1208.8 588.7 1209.3 588.7 1209.8 588.7 1210.3 588.7 1210.8 588.7 1211.3 588.7 1211.8 588.7 1212.3 588.7 1212.8 588.7 1213.3 588.7 1213.8 588.7 1214.3 588.7 1214.8 588.7 1215.3 588.7 1215.8 588.7 1216.3 588.7 1216.8 588.7 1217.3 588.7 1217.8 588.7 1218.3 588.7 1218.7 588.7 1219.2 588.7 1219.7 588.7 1220.2 588.7 1220.7 588.7 1221.2 588.7 1221.7 588.7 1222.2 588.7 1222.7 588.7 1223.2 588.7 1223.7 588.7 1224.2 588.7 1224.7 588.7 1225.2 588.7 1225.7 588.7 1226.2 588.6 1226.7 588.6 1227.2 588.6 1227.7 588.6 1228.2 588.6 1228.7 588.6 1229.2 588.6 1229.7 588.6 1230.2 588.6 1230.7 588.6 1231.2 588.6 1231.6 588.6 1232.1 588.6 1232.6 588.6 1233.1 588.6 1233.6 588.6 1234.1 588.6 1234.6 588.6 1235.1 588.6 1235.6 588.6 1236.1 588.6 1236.6 588.6 1237.1 588.6 1237.6 588.6 1238.1 588.6 1238.6 588.6 1239.1 588.6 1239.6 588.6 1240.1 588.6 1240.6 588.6 1241.1 588.6 1241.6 588.6 1242.1 588.6 1242.6 588.6 1243.1 588.6 1243.6 588.6 1244.1 588.6 1244.5 588.6 1245.0 588.6 1245.5 588.6 1246.0 588.6 1246.5 588.5 1247.0 588.5 1247.5 588.5 1248.0 588.5 1248.5 588.5 1249.0 588.5 1249.5 588.5 1250.0 588.5 1250.5 588.5 1251.0 588.5 1251.5 588.5 1252.0 588.5 1252.5 588.5 1253.0 588.5 1253.5 588.5 1254.0 588.5 1254.5 588.5 1255.0 588.5 1255.5 588.5 1256.0 588.5 1256.5 588.5 1256.9 588.5 1257.4 588.5 1257.9 588.5 1258.4 588.5 1258.9 588.5 1259.4 588.5 1259.9 588.5 1260.4 588.5 1260.9 588.5 1261.4 588.5 1261.9 588.5 1262.4 588.5 1262.9 588.5 1263.4 588.5 1263.9 588.5 1264.4 588.5 1264.9 588.5 1265.4 588.5 1265.9 588.5 1266.4 588.4 1266.9 588.4 1267.4 588.4 1267.9 588.4 1268.4 588.4 1268.9 588.4 1269.4 588.4 1269.8 588.4 1270.3 588.4 1270.8 588.4 1271.3 588.4 1271.8 588.4 1272.3 588.4 1272.8 588.4 1273.3 588.4 1273.8 588.4 1274.3 588.4 1274.8 588.4 1275.3 588.4 1275.8 588.4 1276.3 588.4 1276.8 588.4 1277.3 588.4 1277.8 588.4 1278.3 588.4 1278.8 588.4 1279.3 588.4 1279.8 588.4 1280.3 588.4 1280.8 588.4 1281.3 588.4 1281.8 588.4 1282.3 588.4 1282.7 588.4 1283.2 588.4 1283.7 588.4 1284.2 588.4 1284.7 588.4 1285.2 588.4 1285.7 588.4 1286.2 588.4 1286.7 588.3 1287.2 588.3 1287.7 588.3 1288.2 588.3 1288.7 588.3 1289.2 588.3 1289.7 588.3 1290.2 588.3 1290.7 588.3 1291.2 588.3 1291.7 588.3 1292.2 588.3 1292.7 588.3 1293.2 588.3 1293.7 588.3 1294.2 588.3 1294.7 588.3 1295.1 588.3 1295.6 588.3 1296.1 588.3 1296.6 588.3 1297.1 588.3 1297.6 588.3 1298.1 588.3 1298.6 588.3 1299.1 588.3 1299.6 588.3 1300.1 588.3 1300.6 588.3 1301.1 588.3 1301.6 588.3 1302.1 588.3 1302.6 588.3 1303.1 588.3 1303.6 588.3 1304.1 588.3 1304.6 588.3 1305.1 588.3 1305.6 588.3 1306.1 588.3 1306.6 588.2 1307.1 588.2 1307.6 588.2 1308.0 588.2 1308.5 588.2 1309.0 588.2 1309.5 588.2 1310.0 588.2 1310.5 588.2 1311.0 588.2 1311.5 588.2 1312.0 588.2 1312.5 588.2 1313.0 588.2 1313.5 588.2 1314.0 588.2 1314.5 588.2 1315.0 588.2 1315.5 588.2 1316.0 588.2 1316.5 588.2 1317.0 588.2 1317.5 588.2 1318.0 588.2 1318.5 588.2 1319.0 588.2 1319.5 588.2 1320.0 588.2 1320.5 588.2 1320.9 588.2 1321.4 588.2 1321.9 588.2 1322.4 588.2 1322.9 588.2 1323.4 588.2 1323.9 588.2 1324.4 588.2 1324.9 588.2 1325.4 588.2 1325.9 588.2 1326.4 588.2 1326.9 588.1 1327.4 588.1 1327.9 588.1 1328.4 588.1 1328.9 588.1 1329.4 588.1 1329.9 588.1 1330.4 588.1 1330.9 588.1 1331.4 588.1 1331.9 588.1 1332.4 588.1 1332.9 588.1 1333.3 588.1 1333.8 588.1 1334.3 588.1 1334.8 588.1 1335.3 588.1 1335.8 588.1 1336.3 588.1 1336.8 588.1 1337.3 588.1 1337.8 588.1 1338.3 588.1 1338.8 588.1 1339.3 588.1 1339.8 588.1 1340.3 588.1 1340.8 588.1 1341.3 588.1 1341.8 588.1 1342.3 588.1 1342.8 588.1 1343.3 588.1 1343.8 588.1 1344.3 588.1 1344.8 588.1 1345.3 588.1 1345.8 588.1 1346.2 588.1 1346.7 588.1 1347.2 588.0 1347.7 588.0 1348.2 588.0 1348.7 588.0 1349.2 588.0 1349.7 588.0 1350.2 588.0 1350.7 588.0 1351.2 588.0 1351.7 588.0 1352.2 588.0 1352.7 588.0 1353.2 588.0 1353.7 588.0 1354.2 588.0 1354.7 588.0 1355.2 588.0 1355.7 588.0 1356.2 588.0 1356.7 588.0 1357.2 588.0 1357.7 588.0 1358.2 588.0 1358.7 588.0 1359.1 588.0 1359.6 588.0 1360.1 588.0 1360.6 588.0 1361.1 588.0 1361.6 588.0 1362.1 588.0 1362.6 588.0 1363.1 588.0 1363.6 588.0 1364.1 588.0 1364.6 588.0 1365.1 588.0 1365.6 588.0 1366.1 588.0 1366.6 588.0 1367.1 587.9 1367.6 587.9 1368.1 587.9 1368.6 587.9 1369.1 587.9 1369.6 587.9 1370.1 587.9 1370.6 587.9 1371.1 587.9 1371.5 587.9 1372.0 587.9 1372.5 587.9 1373.0 587.9 1373.5 587.9 1374.0 587.9 1374.5 587.9 1375.0 587.9 1375.5 587.9 1376.0 587.9 1376.5 587.9 1377.0 587.9 1377.5 587.9 1378.0 587.9 1378.5 587.9 1379.0 587.9 1379.5 587.9 1380.0 587.9 1380.5 587.9 1381.0 587.9 1381.5 587.9 1382.0 587.9 1382.5 587.9 1383.0 587.9 1383.5 587.9 1384.0 587.9 1384.4 587.9 1384.9 587.9 1385.4 587.9 1385.9 587.9 1386.4 587.9 1386.9 587.9 1387.4 587.8 1387.9 587.8 1388.4 587.8 1388.9 587.8 1389.4 587.8 1389.9 587.8 1390.4 587.8 1390.9 587.8 1391.4 587.8 1391.9 587.8 1392.4 587.8 1392.9 587.8 1393.4 587.8 1393.9 587.8 1394.4 587.8 1394.9 587.8 1395.4 587.8 1395.9 587.8 1396.4 587.8 1396.9 587.8 1397.3 587.8 1397.8 587.8 1398.3 587.8 1398.8 587.8 1399.3 587.8 1399.8 587.8 1400.3 587.8 1400.8 587.8 1401.3 587.8 1401.8 587.8 1402.3 587.8 1402.8 587.8 1403.3 587.8 1403.8 587.8 1404.3 587.8 1404.8 587.8 1405.3 587.8 1405.8 587.8 1406.3 587.8 1406.8 587.8 1407.3 587.7 1407.8 587.7 1408.3 587.7 1408.8 587.7 1409.3 587.7 1409.7 587.7 1410.2 587.7 1410.7 587.7 1411.2 587.7 1411.7 587.7 1412.2 587.7 1412.7 587.7 1413.2 587.7 1413.7 587.7 1414.2 587.7 1414.7 587.7 1415.2 587.7 1415.7 587.7 1416.2 587.7 1416.7 587.7 1417.2 587.7 1417.7 587.7 1418.2 587.7 1418.7 587.7 1419.2 587.7 1419.7 587.7 1420.2 587.7 1420.7 587.7 1421.2 587.7 1421.7 587.7 1422.2 587.7 1422.6 587.7 1423.1 587.7 1423.6 587.7 1424.1 587.7 1424.6 587.7 1425.1 587.7 1425.6 587.7 1426.1 587.7 1426.6 587.7 1427.1 587.7 1427.6 587.6 1428.1 587.6 1428.6 587.6 1429.1 587.6 1429.6 587.6 1430.1 587.6 1430.6 587.6 1431.1 587.6 1431.6 587.6 1432.1 587.6 1432.6 587.6 1433.1 587.6 1433.6 587.6 1434.1 587.6 1434.6 587.6 1435.1 587.6 1435.5 587.6 1436.0 587.6 1436.5 587.6 1437.0 587.6 1437.5 587.6 1438.0 587.6 1438.5 587.6 1439.0 587.6 1439.5 587.6 1440.0 587.6 1440.5 587.6 1441.0 587.6 1441.5 587.6 1442.0 587.6 1442.5 587.6 1443.0 587.6 1443.5 587.6 1444.0 587.6 1444.5 587.6 1445.0 587.6 1445.5 587.6 1446.0 587.6 1446.5 587.6 1447.0 587.6 1447.5 587.5 1447.9 587.5 1448.4 587.5 1448.9 587.5 1449.4 587.5 1449.9 587.5 1450.4 587.5 1450.9 587.5 1451.4 587.5 1451.9 587.5 1452.4 587.5 1452.9 587.5 1453.4 587.5 1453.9 587.5 1454.4 587.5 1454.9 587.5 1455.4 587.5 1455.9 587.5 1456.4 587.5 1456.9 587.5 1457.4 587.5 1457.9 587.5 1458.4 587.5 1458.9 587.5 1459.4 587.5 1459.9 587.5 1460.4 587.5 1460.8 587.5 1461.3 587.5 1461.8 587.5 1462.3 587.5 1462.8 587.5 1463.3 587.5 1463.8 587.5 1464.3 587.5 1464.8 587.5 1465.3 587.5 1465.8 587.5 1466.3 587.5 1466.8 587.5 1467.3 587.5 1467.8 587.4 1468.3 587.4 1468.8 587.4 1469.3 587.4 1469.8 587.4 1470.3 587.4 1470.8 587.4 1471.3 587.4 1471.8 587.4 1472.3 587.4 1472.8 587.4 1473.3 587.4 1473.7 587.4 1474.2 587.4 1474.7 587.4 1475.2 587.4 1475.7 587.4 1476.2 587.4 1476.7 587.4 1477.2 587.4 1477.7 587.4 1478.2 587.4 1478.7 587.4 1479.2 587.4 1479.7 587.4 1480.2 587.4 1480.7 587.4 1481.2 587.4 1481.7 587.4 1482.2 587.4 1482.7 587.4 1483.2 587.4 1483.7 587.4 1484.2 587.4 1484.7 587.4 1485.2 587.4 1485.7 587.4 1486.2 587.4 1486.6 587.4 1487.1 587.4 1487.6 587.3 1488.1 587.3 1488.6 587.3 1489.1 587.3 1489.6 587.3 1490.1 587.3 1490.6 587.3 1491.1 587.3 1491.6 587.3 1492.1 587.3 1492.6 587.3 1493.1 587.3 1493.6 587.3 1494.1 587.3 1494.6 587.3 1495.1 587.3 1495.6 587.3 1496.1 587.3 1496.6 587.3 1497.1 587.3 1497.6 587.3 1498.1 587.3 1498.6 587.3 1499.0 587.3 1499.5 587.3 1500.0 587.3 1500.5 587.3 1501.0 587.3 1501.5 587.3 1502.0 587.3 1502.5 587.3 1503.0 587.3 1503.5 587.3 1504.0 587.3 1504.5 587.3 1505.0 587.3 1505.5 587.3 1506.0 587.3 1506.5 587.3 1507.0 587.3 1507.5 587.3 1508.0 587.2 1508.5 587.2 1509.0 587.2 1509.5 587.2 1510.0 587.2 1510.5 587.2 1511.0 587.2 1511.5 587.2 1511.9 587.2 1512.4 587.2 1512.9 587.2 1513.4 587.2 1513.9 587.2 1514.4 587.2 1514.9 587.2 1515.4 587.2 1515.9 587.2 1516.4 587.2 1516.9 587.2 1517.4 587.2 1517.9 587.2 1518.4 587.2 1518.9 587.2 1519.4 587.2 1519.9 587.2 1520.4 587.2 1520.9 587.2 1521.4 587.2 1521.9 587.2 1522.4 587.2 1522.9 587.2 1523.4 587.2 1523.9 587.2 1524.4 587.2 1524.8 587.2 1525.3 587.2 1525.8 587.2 1526.3 587.2 1526.8 587.2 1527.3 587.2 1527.8 587.1 1528.3 587.1 1528.8 587.1 1529.3 587.1 1529.8 587.1 1530.3 587.1 1530.8 587.1 1531.3 587.1 1531.8 587.1 1532.3 587.1 1532.8 587.1 1533.3 587.1 1533.8 587.1 1534.3 587.1 1534.8 587.1 1535.3 587.1 1535.8 587.1 1536.3 587.1 1536.8 587.1 1537.2 587.1 1537.7 587.1 1538.2 587.1 1538.7 587.1 1539.2 587.1 1539.7 587.1 1540.2 587.1 1540.7 587.1 1541.2 587.1 1541.7 587.1 1542.2 587.1 1542.7 587.1 1543.2 587.1 1543.7 587.1 1544.2 587.1 1544.7 587.1 1545.2 587.1 1545.7 587.1 1546.2 587.1 1546.7 587.1 1547.2 587.1 1547.7 587.1 1548.2 587.0 1548.7 587.0 1549.2 587.0 1549.7 587.0 1550.1 587.0 1550.6 587.0 1551.1 587.0 1551.6 587.0 1552.1 587.0 1552.6 587.0 1553.1 587.0 1553.6 587.0 1554.1 587.0 1554.6 587.0 1555.1 587.0 1555.6 587.0 1556.1 587.0 1556.6 587.0 1557.1 587.0 1557.6 587.0 1558.1 587.0 1558.6 587.0 1559.1 587.0 1559.6 587.0 1560.1 587.0 1560.6 587.0 1561.1 587.0 1561.6 587.0 1562.1 587.0 1562.6 587.0 1563.0 587.0 1563.5 587.0 1564.0 575.8 1564.5 575.8 1565.0 575.8 1565.5 575.8 1566.0 575.8 1566.5 575.8 1567.0 575.8 1567.5 575.8 1568.0 575.8 1568.5 575.8 1569.0 575.8" fill="none" stroke="#7eb26d" stroke-width="1" stroke-linejoin="round"/><path d="M1123.0 581.9 1123.5 581.7 1124.0 581.7 1124.5 582.0 1125.0 582.2 1125.5 581.7 1126.0 581.7 1126.5 581.8 1127.0 581.5 1127.5 581.7 1128.0 581.9 1128.5 581.9 1129.0 581.8 1129.4 581.9 1129.9 581.8 1130.4 581.8 1130.9 581.9 1131.4 580.0 1131.9 577.4 1132.4 577.4 1132.9 577.3 1133.4 577.6 1133.9 577.5 1134.4 577.3 1134.9 577.3 1135.4 577.6 1135.9 577.4 1136.4 577.0 1136.9 579.7 1137.4 579.8 1137.9 581.9 1138.4 581.9 1138.9 581.9 1139.4 581.6 1139.9 581.5 1140.4 581.7 1140.9 581.9 1141.4 582.2 1141.9 582.0 1142.3 581.7 1142.8 581.6 1143.3 581.6 1143.8 582.0 1144.3 581.9 1144.8 581.7 1145.3 581.6 1145.8 581.2 1146.3 580.7 1146.8 580.9 1147.3 580.3 1147.8 580.0 1148.3 579.8 1148.8 580.0 1149.3 580.2 1149.8 580.4 1150.3 581.3 1150.8 581.4 1151.3 581.8 1151.8 581.7 1152.3 579.7 1152.8 579.6 1153.3 577.1 1153.8 577.2 1154.3 576.9 1154.8 577.0 1155.2 577.1 1155.7 577.3 1156.2 577.6 1156.7 577.3 1157.2 577.2 1157.7 576.8 1158.2 579.1 1158.7 581.6 1158.8 582.0 1159.6 581.5 1160.1 510.9 1160.7 510.9 1161.2 548.4 1162.0 548.4 1162.8 475.9 1163.6 477.2 1164.2 532.9 1164.7 527.7 1165.0 446.6 1166.6 446.6 1167.1 589.8 1167.7 590.6 1167.9 518.6 1168.5 518.6 1169.0 590.6 1169.8 591.4 1170.1 587.1 1170.6 586.9 1171.1 586.7 1171.6 586.7 1172.1 586.6 1172.6 586.5 1173.1 586.6 1173.6 586.8 1174.1 587.0 1174.6 586.7 1175.1 586.8 1175.6 587.2 1176.1 590.0 1176.6 589.9 1177.1 591.5 1177.6 591.3 1178.1 591.4 1178.6 591.9 1179.1 591.8 1179.6 591.4 1180.1 591.4 1180.5 591.6 1181.0 591.5 1181.5 591.3 1182.0 591.4 1182.5 591.8 1183.0 591.9 1183.5 591.7 1184.0 591.9 1184.5 591.7 1185.0 591.6 1185.5 591.6 1186.0 591.5 1186.5 591.6 1187.0 591.4 1187.5 589.6 1188.0 589.9 1188.5 584.8 1189.0 584.6 1189.5 586.9 1190.0 587.2 1190.5 587.1 1191.0 586.8 1191.5 586.6 1192.0 586.8 1192.5 587.0 1193.0 587.1 1193.4 587.3 1193.9 587.2 1194.4 586.9 1194.9 589.8 1195.4 590.0 1195.9 591.8 1196.4 591.5 1196.9 591.5 1197.4 591.6 1197.9 591.6 1198.4 591.7 1198.9 591.7 1199.4 592.0 1199.9 591.9 1200.4 591.5 1200.9 591.8 1201.4 591.9 1201.9 591.7 1202.4 591.8 1202.9 591.8 1203.4 591.9 1203.9 591.8 1204.4 591.4 1204.9 591.6 1205.4 591.8 1205.8 591.4 1206.3 589.5 1206.8 589.8 1207.3 587.2 1207.8 587.1 1208.3 587.0 1208.8 587.0 1209.3 587.2 1209.8 587.1 1210.3 586.9 1210.8 587.0 1211.3 587.0 1211.8 587.3 1212.3 587.3 1212.8 587.3 1213.3 587.2 1213.8 589.7 1214.3 591.3 1214.8 591.4 1215.3 591.6 1215.8 591.7 1216.3 591.5 1216.8 591.3 1217.3 591.4 1217.8 591.6 1218.3 591.7 1218.7 591.7 1219.2 591.4 1219.7 591.9 1220.2 592.0 1220.7 591.6 1221.2 592.0 1221.7 591.9 1222.2 591.5 1222.7 591.5 1223.2 591.7 1223.7 591.5 1224.2 591.2 1224.7 591.6 1225.2 589.6 1225.7 586.7 1226.2 584.5 1226.7 584.5 1227.2 587.2 1227.7 587.1 1228.2 586.8 1228.7 587.0 1229.2 586.9 1229.7 587.0 1230.2 587.1 1230.7 586.9 1231.2 586.9 1231.6 587.0 1232.1 589.9 1232.6 590.2 1233.1 591.9 1233.6 591.7 1234.1 590.9 1234.6 591.0 1235.1 591.6 1235.6 591.6 1236.1 591.4 1236.6 591.3 1237.1 591.6 1237.6 591.6 1238.1 591.4 1238.6 591.4 1239.1 591.7 1239.6 592.1 1240.1 591.7 1240.6 591.8 1241.1 591.8 1241.6 591.5 1242.1 591.5 1242.6 591.5 1243.1 591.5 1243.6 591.5 1244.1 589.7 1244.5 587.1 1245.0 586.6 1245.5 586.4 1246.0 586.8 1246.5 586.9 1247.0 587.1 1247.5 587.1 1248.0 587.0 1248.5 586.9 1249.0 587.0 1249.5 587.5 1250.0 587.5 1250.5 587.0 1251.0 589.3 1251.5 589.2 1252.0 591.6 1252.5 591.7 1253.0 591.7 1253.5 591.7 1254.0 591.7 1254.5 592.0 1255.0 591.7 1255.5 591.5 1256.0 591.6 1256.5 591.5 1256.9 591.2 1257.4 591.2 1257.9 591.6 1258.4 591.5 1258.9 591.7 1259.4 591.7 1259.9 591.6 1260.4 591.8 1260.9 591.7 1261.4 591.3 1261.9 591.4 1262.4 589.7 1262.9 589.6 1263.4 584.9 1263.9 584.8 1264.4 587.0 1264.9 587.4 1265.4 587.4 1265.9 587.3 1266.4 587.1 1266.9 587.1 1267.4 586.9 1267.9 586.8 1268.4 587.1 1268.9 587.3 1269.4 587.1 1269.8 590.0 1270.3 590.4 1270.8 592.0 1271.3 591.6 1271.8 591.4 1272.3 591.5 1272.8 591.6 1273.3 591.9 1273.8 591.9 1274.3 591.9 1274.8 591.7 1275.3 591.4 1275.8 591.6 1276.3 591.5 1276.8 591.5 1277.3 591.5 1277.8 591.5 1278.3 591.6 1278.8 591.9 1279.3 591.7 1279.8 591.3 1280.3 591.2 1280.8 591.4 1281.3 589.7 1281.8 589.7 1282.3 587.0 1282.7 587.1 1283.2 587.1 1283.7 586.7 1284.2 586.6 1284.7 586.7 1285.2 586.9 1285.7 587.3 1286.2 587.1 1286.7 587.0 1287.2 587.0 1287.7 586.9 1288.2 587.0 1288.7 589.6 1289.2 591.2 1289.7 591.6 1290.2 591.6 1290.7 591.5 1291.2 591.4 1291.7 591.5 1292.2 591.6 1292.7 591.4 1293.2 591.9 1293.7 592.3 1294.2 591.8 1294.7 591.6 1295.1 591.4 1295.6 591.4 1296.1 591.7 1296.6 591.7 1297.1 591.6 1297.6 591.7 1298.1 591.7 1298.6 591.6 1299.1 591.7 1299.6 592.0 1300.1 590.3 1300.6 587.0 1301.1 584.6 1301.6 585.0 1302.1 587.3 1302.6 587.3 1303.1 587.2 1303.6 587.0 1304.1 586.9 1304.6 587.0 1305.1 587.1 1305.6 587.1 1306.1 586.9 1306.6 586.9 1307.1 589.7 1307.6 590.0 1308.0 591.8 1308.5 591.5 1309.0 591.3 1309.5 591.8 1310.0 592.0 1310.5 591.6 1311.0 591.6 1311.5 591.7 1312.0 591.6 1312.5 591.4 1313.0 591.5 1313.5 591.6 1314.0 591.6 1314.5 591.7 1315.0 591.6 1315.5 591.7 1316.0 592.0 1316.5 591.7 1317.0 591.6 1317.5 591.9 1318.0 591.8 1318.5 590.0 1319.0 590.0 1319.5 587.2 1320.0 587.2 1320.5 587.4 1320.9 587.2 1321.4 586.8 1321.9 586.8 1322.4 587.0 1322.9 587.2 1323.4 587.2 1323.9 587.0 1324.4 587.1 1324.9 587.0 1325.4 586.9 1325.9 589.7 1326.4 589.8 1326.9 591.7 1327.4 591.6 1327.9 591.5 1328.4 591.5 1328.9 591.7 1329.4 591.8 1329.9 591.7 1330.4 591.9 1330.9 591.7 1331.4 591.4 1331.9 591.5 1332.4 591.7 1332.9 591.6 1333.3 591.5 1333.8 591.3 1334.3 591.2 1334.8 591.7 1335.3 591.7 1335.8 591.6 1336.3 591.7 1336.8 591.7 1337.3 589.8 1337.8 589.8 1338.3 584.6 1338.8 584.6 1339.3 587.1 1339.8 587.4 1340.3 587.4 1340.8 587.1 1341.3 586.9 1341.8 586.6 1342.3 587.0 1342.8 587.2 1343.3 587.1 1343.8 587.1 1344.3 587.1 1344.8 589.8 1345.3 591.7 1345.8 591.7 1346.2 591.6 1346.7 591.4 1347.2 591.2 1347.7 591.4 1348.2 591.8 1348.7 591.8 1349.2 591.8 1349.7 590.0 1350.2 590.0 1350.7 584.9 1351.2 585.0 1351.7 588.1 1352.2 587.8 1352.7 587.5 1353.2 587.7 1353.7 587.9 1354.2 588.1 1354.7 588.3 1355.2 588.1 1355.7 590.3 1356.2 590.1 1356.7 591.4 1357.2 591.7 1357.7 591.8 1358.2 591.7 1358.7 591.5 1359.1 591.3 1359.6 591.5 1360.1 591.6 1360.6 591.6 1361.1 591.6 1361.6 591.7 1362.1 591.6 1362.6 591.4 1363.1 591.4 1363.6 591.5 1364.1 591.5 1364.6 591.6 1365.1 591.2 1365.6 591.2 1366.1 591.8 1366.6 591.5 1366.7 591.4 1367.5 586.7 1368.3 547.7 1369.1 588.0 1369.9 576.9 1371.2 575.0 1371.5 576.1 1372.0 576.2 1372.5 576.0 1373.0 575.8 1373.5 576.0 1374.0 576.3 1374.5 576.2 1375.0 575.8 1375.5 576.0 1376.0 579.1 1376.5 580.9 1377.0 581.2 1377.5 581.7 1378.0 581.8 1378.5 581.6 1379.0 581.4 1379.5 581.6 1380.0 581.3 1380.5 580.7 1381.0 581.2 1381.5 581.9 1382.0 581.8 1382.5 581.4 1383.0 581.2 1383.5 581.1 1384.0 581.4 1384.4 581.8 1384.9 581.7 1385.4 581.3 1385.9 581.4 1386.4 581.5 1386.9 581.4 1387.4 581.5 1387.9 581.7 1388.4 581.6 1388.9 581.6 1389.4 579.3 1389.9 576.1 1390.4 576.2 1390.9 576.2 1391.4 576.2 1391.9 576.1 1392.4 576.1 1392.9 576.2 1393.4 576.5 1393.9 576.5 1394.4 576.3 1394.9 576.5 1395.4 576.5 1395.9 579.7 1396.4 579.6 1396.9 581.5 1397.3 581.5 1397.8 581.1 1398.3 581.0 1398.8 581.4 1399.3 581.3 1399.8 581.4 1400.3 580.7 1400.8 580.5 1401.3 578.9 1401.8 579.5 1402.3 579.7 1402.8 579.3 1403.3 579.3 1403.8 580.5 1404.3 581.4 1404.8 581.4 1405.3 581.4 1405.8 580.7 1406.3 579.1 1406.8 579.2 1407.3 579.3 1407.8 579.4 1408.3 579.5 1408.8 580.6 1409.1 584.1 1409.9 548.4 1410.4 512.1 1411.0 431.8 1411.8 431.8 1412.1 481.0 1412.6 468.1 1413.1 426.1 1413.9 426.1 1414.5 496.6 1415.3 488.3 1416.1 488.3 1416.6 548.4 1417.7 575.0 1418.8 578.4 1419.2 581.6 1419.7 581.5 1420.2 581.6 1420.7 581.6 1421.2 581.3 1421.7 581.3 1422.2 581.2 1422.6 581.0 1423.1 581.2 1423.6 581.6 1424.1 581.7 1424.6 581.5 1425.1 581.3 1425.6 581.1 1426.1 581.4 1426.6 581.5 1427.1 581.5 1427.9 576.3 1428.4 536.0 1429.0 536.0 1429.8 578.9 1430.9 580.5 1431.1 577.2 1431.6 577.3 1432.1 577.2 1432.6 576.9 1433.1 576.8 1433.6 576.8 1434.1 576.8 1434.6 576.6 1435.1 577.0 1435.5 577.2 1436.0 579.9 1436.5 580.0 1437.0 581.6 1437.5 581.5 1438.0 581.3 1438.5 580.9 1439.0 581.1 1439.5 581.4 1440.0 581.5 1440.5 581.5 1441.0 581.4 1441.5 581.5 1442.0 581.5 1442.5 581.4 1443.0 581.3 1443.5 581.1 1444.0 581.0 1444.5 581.2 1445.0 581.7 1445.5 581.9 1446.0 581.8 1446.5 581.7 1447.0 581.9 1447.5 591.9 1447.9 591.8 1448.4 591.6 1448.9 591.2 1449.4 591.3 1449.6 591.9 1450.7 586.7 1451.5 571.2 1451.8 537.3 1452.3 548.4 1453.1 576.3 1454.5 577.6 1454.9 576.9 1455.4 576.8 1455.9 576.9 1456.4 577.0 1456.9 576.9 1457.4 576.8 1457.9 579.8 1458.4 581.4 1458.9 581.3 1459.4 581.4 1459.9 581.5 1460.4 581.9 1460.8 581.7 1461.3 581.6 1461.8 581.4 1462.3 581.5 1462.8 581.7 1463.3 580.7 1463.8 580.6 1464.3 579.1 1464.8 579.2 1465.3 578.9 1465.8 578.9 1466.3 579.0 1466.8 580.6 1467.3 581.7 1467.8 581.5 1468.3 581.4 1468.8 581.5 1469.3 581.6 1469.8 580.2 1470.3 580.2 1470.8 577.1 1471.3 577.1 1471.8 576.8 1472.3 576.4 1472.8 576.5 1473.3 576.7 1473.7 576.7 1474.2 576.7 1474.7 576.7 1475.2 576.9 1475.7 577.0 1476.2 576.9 1476.7 579.3 1477.2 581.1 1477.7 581.1 1478.2 581.4 1478.7 581.6 1479.2 581.3 1479.7 581.3 1480.2 581.6 1480.7 581.9 1481.2 582.0 1481.7 585.2 1482.2 584.5 1482.7 584.4 1483.2 584.9 1483.7 584.9 1484.2 584.8 1484.7 584.8 1485.2 584.8 1485.7 585.0 1486.2 585.0 1486.6 584.7 1487.1 584.6 1487.6 584.5 1488.1 581.4 1488.6 581.4 1489.1 581.3 1489.6 581.4 1490.1 581.2 1490.6 581.3 1491.1 581.4 1491.6 581.3 1492.1 581.2 1492.6 581.2 1493.1 581.1 1493.6 581.2 1494.1 581.4 1494.6 584.8 1495.1 584.7 1495.6 585.0 1496.1 585.1 1496.6 585.5 1497.1 585.5 1497.6 585.2 1498.1 585.0 1498.6 585.0 1499.0 581.3 1499.5 581.2 1500.0 581.1 1500.5 581.3 1501.0 581.4 1501.5 581.4 1502.0 581.6 1502.5 581.3 1503.0 581.4 1503.5 581.6 1504.0 581.4 1504.5 579.6 1505.0 579.5 1505.5 576.1 1506.0 576.2 1506.5 576.2 1507.0 576.4 1507.5 576.3 1508.0 576.1 1508.5 576.0 1509.0 575.9 1509.5 576.3 1510.0 576.2 1510.5 575.8 1511.0 575.9 1511.5 579.1 1511.9 579.3 1512.4 581.5 1512.9 581.4 1513.4 581.0 1513.9 581.0 1514.4 581.6 1514.9 581.6 1515.4 581.3 1515.9 581.3 1516.4 581.9 1516.9 581.6 1517.4 581.2 1517.9 581.5 1518.4 581.4 1518.9 581.5 1519.4 581.7 1519.9 581.5 1520.4 581.4 1520.9 581.4 1521.4 581.3 1521.9 581.3 1522.4 581.3 1522.9 581.7 1523.4 581.6 1523.9 581.4 1524.4 581.4 1524.8 581.3 1525.3 581.2 1525.8 581.3 1526.3 580.0 1526.8 577.3 1527.3 576.9 1527.8 576.9 1528.3 577.0 1528.8 576.7 1529.3 576.7 1529.8 576.8 1530.3 576.7 1530.8 577.1 1531.3 577.3 1531.8 577.1 1532.3 576.9 1532.8 579.7 1533.3 579.9 1533.8 581.8 1534.3 581.7 1534.8 581.6 1535.3 581.6 1535.8 581.2 1536.3 581.1 1536.8 581.5 1537.2 581.6 1537.7 581.2 1538.2 581.1 1538.7 581.3 1539.2 581.6 1539.7 581.9 1540.2 581.7 1540.7 581.5 1541.2 580.8 1541.7 581.0 1542.2 579.4 1542.7 579.5 1543.2 579.8 1543.7 579.4 1544.2 579.1 1544.7 580.4 1545.2 581.2 1545.7 581.0 1546.2 581.1 1546.7 581.3 1547.2 581.1 1547.7 579.0 1548.2 576.5 1548.7 576.9 1549.2 577.0 1549.7 577.1 1550.1 577.3 1550.6 577.3 1551.1 577.3 1551.6 576.8 1552.1 576.7 1552.6 576.6 1553.1 576.6 1553.6 576.9 1554.1 576.9 1554.6 579.6 1555.1 581.3 1555.6 581.2 1556.1 581.0 1556.6 581.1 1557.1 581.5 1557.6 580.6 1558.1 578.9 1558.6 578.9 1559.1 579.0 1559.6 579.0 1560.1 578.8 1560.6 580.7 1561.1 580.7 1561.6 581.1 1562.1 581.2 1562.6 581.4 1563.0 581.5 1563.5 581.3 1564.0 581.6 1564.5 581.5 1565.0 581.3 1565.5 581.2 1566.0 581.1 1566.5 581.3 1567.0 581.4 1567.5 581.3 1568.0 581.3 1568.5 581.3 1569.0 581.4 L1569.0 596 L1123.0 596Z" fill="#eab839" fill-opacity=".1"/><path d="M1123.0 581.9 1123.5 581.7 1124.0 581.7 1124.5 582.0 1125.0 582.2 1125.5 581.7 1126.0 581.7 1126.5 581.8 1127.0 581.5 1127.5 581.7 1128.0 581.9 1128.5 581.9 1129.0 581.8 1129.4 581.9 1129.9 581.8 1130.4 581.8 1130.9 581.9 1131.4 580.0 1131.9 577.4 1132.4 577.4 1132.9 577.3 1133.4 577.6 1133.9 577.5 1134.4 577.3 1134.9 577.3 1135.4 577.6 1135.9 577.4 1136.4 577.0 1136.9 579.7 1137.4 579.8 1137.9 581.9 1138.4 581.9 1138.9 581.9 1139.4 581.6 1139.9 581.5 1140.4 581.7 1140.9 581.9 1141.4 582.2 1141.9 582.0 1142.3 581.7 1142.8 581.6 1143.3 581.6 1143.8 582.0 1144.3 581.9 1144.8 581.7 1145.3 581.6 1145.8 581.2 1146.3 580.7 1146.8 580.9 1147.3 580.3 1147.8 580.0 1148.3 579.8 1148.8 580.0 1149.3 580.2 1149.8 580.4 1150.3 581.3 1150.8 581.4 1151.3 581.8 1151.8 581.7 1152.3 579.7 1152.8 579.6 1153.3 577.1 1153.8 577.2 1154.3 576.9 1154.8 577.0 1155.2 577.1 1155.7 577.3 1156.2 577.6 1156.7 577.3 1157.2 577.2 1157.7 576.8 1158.2 579.1 1158.7 581.6 1158.8 582.0 1159.6 581.5 1160.1 510.9 1160.7 510.9 1161.2 548.4 1162.0 548.4 1162.8 475.9 1163.6 477.2 1164.2 532.9 1164.7 527.7 1165.0 446.6 1166.6 446.6 1167.1 589.8 1167.7 590.6 1167.9 518.6 1168.5 518.6 1169.0 590.6 1169.8 591.4 1170.1 587.1 1170.6 586.9 1171.1 586.7 1171.6 586.7 1172.1 586.6 1172.6 586.5 1173.1 586.6 1173.6 586.8 1174.1 587.0 1174.6 586.7 1175.1 586.8 1175.6 587.2 1176.1 590.0 1176.6 589.9 1177.1 591.5 1177.6 591.3 1178.1 591.4 1178.6 591.9 1179.1 591.8 1179.6 591.4 1180.1 591.4 1180.5 591.6 1181.0 591.5 1181.5 591.3 1182.0 591.4 1182.5 591.8 1183.0 591.9 1183.5 591.7 1184.0 591.9 1184.5 591.7 1185.0 591.6 1185.5 591.6 1186.0 591.5 1186.5 591.6 1187.0 591.4 1187.5 589.6 1188.0 589.9 1188.5 584.8 1189.0 584.6 1189.5 586.9 1190.0 587.2 1190.5 587.1 1191.0 586.8 1191.5 586.6 1192.0 586.8 1192.5 587.0 1193.0 587.1 1193.4 587.3 1193.9 587.2 1194.4 586.9 1194.9 589.8 1195.4 590.0 1195.9 591.8 1196.4 591.5 1196.9 591.5 1197.4 591.6 1197.9 591.6 1198.4 591.7 1198.9 591.7 1199.4 592.0 1199.9 591.9 1200.4 591.5 1200.9 591.8 1201.4 591.9 1201.9 591.7 1202.4 591.8 1202.9 591.8 1203.4 591.9 1203.9 591.8 1204.4 591.4 1204.9 591.6 1205.4 591.8 1205.8 591.4 1206.3 589.5 1206.8 589.8 1207.3 587.2 1207.8 587.1 1208.3 587.0 1208.8 587.0 1209.3 587.2 1209.8 587.1 1210.3 586.9 1210.8 587.0 1211.3 587.0 1211.8 587.3 1212.3 587.3 1212.8 587.3 1213.3 587.2 1213.8 589.7 1214.3 591.3 1214.8 591.4 1215.3 591.6 1215.8 591.7 1216.3 591.5 1216.8 591.3 1217.3 591.4 1217.8 591.6 1218.3 591.7 1218.7 591.7 1219.2 591.4 1219.7 591.9 1220.2 592.0 1220.7 591.6 1221.2 592.0 1221.7 591.9 1222.2 591.5 1222.7 591.5 1223.2 591.7 1223.7 591.5 1224.2 591.2 1224.7 591.6 1225.2 589.6 1225.7 586.7 1226.2 584.5 1226.7 584.5 1227.2 587.2 1227.7 587.1 1228.2 586.8 1228.7 587.0 1229.2 586.9 1229.7 587.0 1230.2 587.1 1230.7 586.9 1231.2 586.9 1231.6 587.0 1232.1 589.9 1232.6 590.2 1233.1 591.9 1233.6 591.7 1234.1 590.9 1234.6 591.0 1235.1 591.6 1235.6 591.6 1236.1 591.4 1236.6 591.3 1237.1 591.6 1237.6 591.6 1238.1 591.4 1238.6 591.4 1239.1 591.7 1239.6 592.1 1240.1 591.7 1240.6 591.8 1241.1 591.8 1241.6 591.5 1242.1 591.5 1242.6 591.5 1243.1 591.5 1243.6 591.5 1244.1 589.7 1244.5 587.1 1245.0 586.6 1245.5 586.4 1246.0 586.8 1246.5 586.9 1247.0 587.1 1247.5 587.1 1248.0 587.0 1248.5 586.9 1249.0 587.0 1249.5 587.5 1250.0 587.5 1250.5 587.0 1251.0 589.3 1251.5 589.2 1252.0 591.6 1252.5 591.7 1253.0 591.7 1253.5 591.7 1254.0 591.7 1254.5 592.0 1255.0 591.7 1255.5 591.5 1256.0 591.6 1256.5 591.5 1256.9 591.2 1257.4 591.2 1257.9 591.6 1258.4 591.5 1258.9 591.7 1259.4 591.7 1259.9 591.6 1260.4 591.8 1260.9 591.7 1261.4 591.3 1261.9 591.4 1262.4 589.7 1262.9 589.6 1263.4 584.9 1263.9 584.8 1264.4 587.0 1264.9 587.4 1265.4 587.4 1265.9 587.3 1266.4 587.1 1266.9 587.1 1267.4 586.9 1267.9 586.8 1268.4 587.1 1268.9 587.3 1269.4 587.1 1269.8 590.0 1270.3 590.4 1270.8 592.0 1271.3 591.6 1271.8 591.4 1272.3 591.5 1272.8 591.6 1273.3 591.9 1273.8 591.9 1274.3 591.9 1274.8 591.7 1275.3 591.4 1275.8 591.6 1276.3 591.5 1276.8 591.5 1277.3 591.5 1277.8 591.5 1278.3 591.6 1278.8 591.9 1279.3 591.7 1279.8 591.3 1280.3 591.2 1280.8 591.4 1281.3 589.7 1281.8 589.7 1282.3 587.0 1282.7 587.1 1283.2 587.1 1283.7 586.7 1284.2 586.6 1284.7 586.7 1285.2 586.9 1285.7 587.3 1286.2 587.1 1286.7 587.0 1287.2 587.0 1287.7 586.9 1288.2 587.0 1288.7 589.6 1289.2 591.2 1289.7 591.6 1290.2 591.6 1290.7 591.5 1291.2 591.4 1291.7 591.5 1292.2 591.6 1292.7 591.4 1293.2 591.9 1293.7 592.3 1294.2 591.8 1294.7 591.6 1295.1 591.4 1295.6 591.4 1296.1 591.7 1296.6 591.7 1297.1 591.6 1297.6 591.7 1298.1 591.7 1298.6 591.6 1299.1 591.7 1299.6 592.0 1300.1 590.3 1300.6 587.0 1301.1 584.6 1301.6 585.0 1302.1 587.3 1302.6 587.3 1303.1 587.2 1303.6 587.0 1304.1 586.9 1304.6 587.0 1305.1 587.1 1305.6 587.1 1306.1 586.9 1306.6 586.9 1307.1 589.7 1307.6 590.0 1308.0 591.8 1308.5 591.5 1309.0 591.3 1309.5 591.8 1310.0 592.0 1310.5 591.6 1311.0 591.6 1311.5 591.7 1312.0 591.6 1312.5 591.4 1313.0 591.5 1313.5 591.6 1314.0 591.6 1314.5 591.7 1315.0 591.6 1315.5 591.7 1316.0 592.0 1316.5 591.7 1317.0 591.6 1317.5 591.9 1318.0 591.8 1318.5 590.0 1319.0 590.0 1319.5 587.2 1320.0 587.2 1320.5 587.4 1320.9 587.2 1321.4 586.8 1321.9 586.8 1322.4 587.0 1322.9 587.2 1323.4 587.2 1323.9 587.0 1324.4 587.1 1324.9 587.0 1325.4 586.9 1325.9 589.7 1326.4 589.8 1326.9 591.7 1327.4 591.6 1327.9 591.5 1328.4 591.5 1328.9 591.7 1329.4 591.8 1329.9 591.7 1330.4 591.9 1330.9 591.7 1331.4 591.4 1331.9 591.5 1332.4 591.7 1332.9 591.6 1333.3 591.5 1333.8 591.3 1334.3 591.2 1334.8 591.7 1335.3 591.7 1335.8 591.6 1336.3 591.7 1336.8 591.7 1337.3 589.8 1337.8 589.8 1338.3 584.6 1338.8 584.6 1339.3 587.1 1339.8 587.4 1340.3 587.4 1340.8 587.1 1341.3 586.9 1341.8 586.6 1342.3 587.0 1342.8 587.2 1343.3 587.1 1343.8 587.1 1344.3 587.1 1344.8 589.8 1345.3 591.7 1345.8 591.7 1346.2 591.6 1346.7 591.4 1347.2 591.2 1347.7 591.4 1348.2 591.8 1348.7 591.8 1349.2 591.8 1349.7 590.0 1350.2 590.0 1350.7 584.9 1351.2 585.0 1351.7 588.1 1352.2 587.8 1352.7 587.5 1353.2 587.7 1353.7 587.9 1354.2 588.1 1354.7 588.3 1355.2 588.1 1355.7 590.3 1356.2 590.1 1356.7 591.4 1357.2 591.7 1357.7 591.8 1358.2 591.7 1358.7 591.5 1359.1 591.3 1359.6 591.5 1360.1 591.6 1360.6 591.6 1361.1 591.6 1361.6 591.7 1362.1 591.6 1362.6 591.4 1363.1 591.4 1363.6 591.5 1364.1 591.5 1364.6 591.6 1365.1 591.2 1365.6 591.2 1366.1 591.8 1366.6 591.5 1366.7 591.4 1367.5 586.7 1368.3 547.7 1369.1 588.0 1369.9 576.9 1371.2 575.0 1371.5 576.1 1372.0 576.2 1372.5 576.0 1373.0 575.8 1373.5 576.0 1374.0 576.3 1374.5 576.2 1375.0 575.8 1375.5 576.0 1376.0 579.1 1376.5 580.9 1377.0 581.2 1377.5 581.7 1378.0 581.8 1378.5 581.6 1379.0 581.4 1379.5 581.6 1380.0 581.3 1380.5 580.7 1381.0 581.2 1381.5 581.9 1382.0 581.8 1382.5 581.4 1383.0 581.2 1383.5 581.1 1384.0 581.4 1384.4 581.8 1384.9 581.7 1385.4 581.3 1385.9 581.4 1386.4 581.5 1386.9 581.4 1387.4 581.5 1387.9 581.7 1388.4 581.6 1388.9 581.6 1389.4 579.3 1389.9 576.1 1390.4 576.2 1390.9 576.2 1391.4 576.2 1391.9 576.1 1392.4 576.1 1392.9 576.2 1393.4 576.5 1393.9 576.5 1394.4 576.3 1394.9 576.5 1395.4 576.5 1395.9 579.7 1396.4 579.6 1396.9 581.5 1397.3 581.5 1397.8 581.1 1398.3 581.0 1398.8 581.4 1399.3 581.3 1399.8 581.4 1400.3 580.7 1400.8 580.5 1401.3 578.9 1401.8 579.5 1402.3 579.7 1402.8 579.3 1403.3 579.3 1403.8 580.5 1404.3 581.4 1404.8 581.4 1405.3 581.4 1405.8 580.7 1406.3 579.1 1406.8 579.2 1407.3 579.3 1407.8 579.4 1408.3 579.5 1408.8 580.6 1409.1 584.1 1409.9 548.4 1410.4 512.1 1411.0 431.8 1411.8 431.8 1412.1 481.0 1412.6 468.1 1413.1 426.1 1413.9 426.1 1414.5 496.6 1415.3 488.3 1416.1 488.3 1416.6 548.4 1417.7 575.0 1418.8 578.4 1419.2 581.6 1419.7 581.5 1420.2 581.6 1420.7 581.6 1421.2 581.3 1421.7 581.3 1422.2 581.2 1422.6 581.0 1423.1 581.2 1423.6 581.6 1424.1 581.7 1424.6 581.5 1425.1 581.3 1425.6 581.1 1426.1 581.4 1426.6 581.5 1427.1 581.5 1427.9 576.3 1428.4 536.0 1429.0 536.0 1429.8 578.9 1430.9 580.5 1431.1 577.2 1431.6 577.3 1432.1 577.2 1432.6 576.9 1433.1 576.8 1433.6 576.8 1434.1 576.8 1434.6 576.6 1435.1 577.0 1435.5 577.2 1436.0 579.9 1436.5 580.0 1437.0 581.6 1437.5 581.5 1438.0 581.3 1438.5 580.9 1439.0 581.1 1439.5 581.4 1440.0 581.5 1440.5 581.5 1441.0 581.4 1441.5 581.5 1442.0 581.5 1442.5 581.4 1443.0 581.3 1443.5 581.1 1444.0 581.0 1444.5 581.2 1445.0 581.7 1445.5 581.9 1446.0 581.8 1446.5 581.7 1447.0 581.9 1447.5 591.9 1447.9 591.8 1448.4 591.6 1448.9 591.2 1449.4 591.3 1449.6 591.9 1450.7 586.7 1451.5 571.2 1451.8 537.3 1452.3 548.4 1453.1 576.3 1454.5 577.6 1454.9 576.9 1455.4 576.8 1455.9 576.9 1456.4 577.0 1456.9 576.9 1457.4 576.8 1457.9 579.8 1458.4 581.4 1458.9 581.3 1459.4 581.4 1459.9 581.5 1460.4 581.9 1460.8 581.7 1461.3 581.6 1461.8 581.4 1462.3 581.5 1462.8 581.7 1463.3 580.7 1463.8 580.6 1464.3 579.1 1464.8 579.2 1465.3 578.9 1465.8 578.9 1466.3 579.0 1466.8 580.6 1467.3 581.7 1467.8 581.5 1468.3 581.4 1468.8 581.5 1469.3 581.6 1469.8 580.2 1470.3 580.2 1470.8 577.1 1471.3 577.1 1471.8 576.8 1472.3 576.4 1472.8 576.5 1473.3 576.7 1473.7 576.7 1474.2 576.7 1474.7 576.7 1475.2 576.9 1475.7 577.0 1476.2 576.9 1476.7 579.3 1477.2 581.1 1477.7 581.1 1478.2 581.4 1478.7 581.6 1479.2 581.3 1479.7 581.3 1480.2 581.6 1480.7 581.9 1481.2 582.0 1481.7 585.2 1482.2 584.5 1482.7 584.4 1483.2 584.9 1483.7 584.9 1484.2 584.8 1484.7 584.8 1485.2 584.8 1485.7 585.0 1486.2 585.0 1486.6 584.7 1487.1 584.6 1487.6 584.5 1488.1 581.4 1488.6 581.4 1489.1 581.3 1489.6 581.4 1490.1 581.2 1490.6 581.3 1491.1 581.4 1491.6 581.3 1492.1 581.2 1492.6 581.2 1493.1 581.1 1493.6 581.2 1494.1 581.4 1494.6 584.8 1495.1 584.7 1495.6 585.0 1496.1 585.1 1496.6 585.5 1497.1 585.5 1497.6 585.2 1498.1 585.0 1498.6 585.0 1499.0 581.3 1499.5 581.2 1500.0 581.1 1500.5 581.3 1501.0 581.4 1501.5 581.4 1502.0 581.6 1502.5 581.3 1503.0 581.4 1503.5 581.6 1504.0 581.4 1504.5 579.6 1505.0 579.5 1505.5 576.1 1506.0 576.2 1506.5 576.2 1507.0 576.4 1507.5 576.3 1508.0 576.1 1508.5 576.0 1509.0 575.9 1509.5 576.3 1510.0 576.2 1510.5 575.8 1511.0 575.9 1511.5 579.1 1511.9 579.3 1512.4 581.5 1512.9 581.4 1513.4 581.0 1513.9 581.0 1514.4 581.6 1514.9 581.6 1515.4 581.3 1515.9 581.3 1516.4 581.9 1516.9 581.6 1517.4 581.2 1517.9 581.5 1518.4 581.4 1518.9 581.5 1519.4 581.7 1519.9 581.5 1520.4 581.4 1520.9 581.4 1521.4 581.3 1521.9 581.3 1522.4 581.3 1522.9 581.7 1523.4 581.6 1523.9 581.4 1524.4 581.4 1524.8 581.3 1525.3 581.2 1525.8 581.3 1526.3 580.0 1526.8 577.3 1527.3 576.9 1527.8 576.9 1528.3 577.0 1528.8 576.7 1529.3 576.7 1529.8 576.8 1530.3 576.7 1530.8 577.1 1531.3 577.3 1531.8 577.1 1532.3 576.9 1532.8 579.7 1533.3 579.9 1533.8 581.8 1534.3 581.7 1534.8 581.6 1535.3 581.6 1535.8 581.2 1536.3 581.1 1536.8 581.5 1537.2 581.6 1537.7 581.2 1538.2 581.1 1538.7 581.3 1539.2 581.6 1539.7 581.9 1540.2 581.7 1540.7 581.5 1541.2 580.8 1541.7 581.0 1542.2 579.4 1542.7 579.5 1543.2 579.8 1543.7 579.4 1544.2 579.1 1544.7 580.4 1545.2 581.2 1545.7 581.0 1546.2 581.1 1546.7 581.3 1547.2 581.1 1547.7 579.0 1548.2 576.5 1548.7 576.9 1549.2 577.0 1549.7 577.1 1550.1 577.3 1550.6 577.3 1551.1 577.3 1551.6 576.8 1552.1 576.7 1552.6 576.6 1553.1 576.6 1553.6 576.9 1554.1 576.9 1554.6 579.6 1555.1 581.3 1555.6 581.2 1556.1 581.0 1556.6 581.1 1557.1 581.5 1557.6 580.6 1558.1 578.9 1558.6 578.9 1559.1 579.0 1559.6 579.0 1560.1 578.8 1560.6 580.7 1561.1 580.7 1561.6 581.1 1562.1 581.2 1562.6 581.4 1563.0 581.5 1563.5 581.3 1564.0 581.6 1564.5 581.5 1565.0 581.3 1565.5 581.2 1566.0 581.1 1566.5 581.3 1567.0 581.4 1567.5 581.3 1568.0 581.3 1568.5 581.3 1569.0 581.4" fill="none" stroke="#eab839" stroke-width="1" stroke-linejoin="round"/><path d="M1123.0 595.9 1123.5 595.9 1124.0 595.9 1124.5 595.9 1125.0 595.9 1125.5 595.9 1126.0 595.9 1126.5 595.9 1127.0 595.9 1127.5 595.9 1128.0 595.9 1128.5 595.9 1129.0 595.9 1129.4 595.9 1129.9 595.9 1130.4 595.9 1130.9 595.9 1131.4 595.9 1131.9 595.9 1132.4 595.9 1132.9 595.9 1133.4 595.9 1133.9 595.9 1134.4 595.9 1134.9 595.9 1135.4 595.9 1135.9 595.9 1136.4 595.9 1136.9 595.9 1137.4 595.9 1137.9 595.9 1138.4 595.9 1138.9 595.9 1139.4 595.9 1139.9 595.9 1140.4 595.9 1140.9 595.9 1141.4 595.9 1141.9 595.9 1142.3 595.9 1142.8 595.9 1143.3 595.9 1143.8 595.9 1144.3 595.9 1144.8 595.9 1145.3 595.9 1145.8 595.9 1146.3 595.9 1146.8 595.9 1147.3 595.9 1147.8 595.9 1148.3 595.9 1148.8 595.9 1149.3 595.9 1149.8 595.9 1150.3 595.9 1150.8 595.9 1151.3 595.9 1151.8 595.9 1152.3 595.9 1152.8 595.9 1153.3 595.9 1153.8 595.9 1154.3 595.9 1154.8 595.9 1155.2 595.9 1155.7 595.9 1156.2 595.9 1156.7 595.9 1157.2 595.9 1157.7 595.9 1158.2 595.9 1158.7 595.9 1159.2 595.9 1159.7 595.9 1160.2 595.9 1160.7 595.9 1161.2 595.9 1161.7 595.9 1162.2 595.9 1162.7 595.9 1163.2 595.9 1163.7 595.9 1164.2 595.9 1164.7 595.9 1165.2 595.9 1165.7 595.9 1166.2 595.9 1166.7 595.9 1167.2 595.9 1167.6 595.9 1168.1 595.9 1168.6 595.9 1169.1 595.9 1169.6 595.9 1170.1 595.9 1170.6 595.9 1171.1 595.9 1171.6 595.9 1172.1 595.9 1172.6 595.9 1173.1 595.9 1173.6 595.9 1174.1 595.9 1174.6 595.9 1175.1 595.9 1175.6 595.9 1176.1 595.9 1176.6 595.9 1177.1 595.9 1177.6 595.9 1178.1 595.9 1178.6 595.9 1179.1 595.9 1179.6 595.9 1180.1 595.9 1180.5 595.9 1181.0 595.9 1181.5 595.9 1182.0 595.9 1182.5 595.9 1183.0 595.9 1183.5 595.9 1184.0 595.9 1184.5 595.9 1185.0 595.9 1185.5 595.9 1186.0 595.9 1186.5 595.9 1187.0 595.9 1187.5 595.9 1188.0 595.9 1188.5 595.9 1189.0 595.9 1189.5 595.9 1190.0 595.9 1190.5 595.9 1191.0 595.9 1191.5 595.9 1192.0 595.9 1192.5 595.9 1193.0 595.9 1193.4 595.9 1193.9 595.9 1194.4 595.9 1194.9 595.9 1195.4 595.9 1195.9 595.9 1196.4 595.9 1196.9 595.9 1197.4 595.9 1197.9 595.9 1198.4 595.9 1198.9 595.9 1199.4 595.9 1199.9 595.9 1200.4 595.9 1200.9 595.9 1201.4 595.9 1201.9 595.9 1202.4 595.9 1202.9 595.9 1203.4 595.9 1203.9 595.9 1204.4 595.9 1204.9 595.9 1205.4 595.9 1205.8 595.9 1206.3 595.9 1206.8 595.9 1207.3 595.9 1207.8 595.9 1208.3 595.9 1208.8 595.9 1209.3 595.9 1209.8 595.9 1210.3 595.9 1210.8 595.9 1211.3 595.9 1211.8 595.9 1212.3 595.9 1212.8 595.9 1213.3 595.9 1213.8 595.9 1214.3 595.9 1214.8 595.9 1215.3 595.9 1215.8 595.9 1216.3 595.9 1216.8 595.9 1217.3 595.9 1217.8 595.9 1218.3 595.9 1218.7 595.9 1219.2 595.9 1219.7 595.9 1220.2 595.9 1220.7 595.9 1221.2 595.9 1221.7 595.9 1222.2 595.9 1222.7 595.9 1223.2 595.9 1223.7 595.9 1224.2 595.9 1224.7 595.9 1225.2 595.9 1225.7 595.9 1226.2 595.9 1226.7 595.9 1227.2 595.9 1227.7 595.9 1228.2 595.9 1228.7 595.9 1229.2 595.9 1229.7 595.9 1230.2 595.9 1230.7 595.9 1231.2 595.9 1231.6 595.9 1232.1 595.9 1232.6 595.9 1233.1 595.9 1233.6 595.9 1234.1 595.9 1234.6 595.9 1235.1 595.9 1235.6 595.9 1236.1 595.9 1236.6 595.9 1237.1 595.9 1237.6 595.9 1238.1 595.9 1238.6 595.9 1239.1 595.9 1239.6 595.9 1240.1 595.9 1240.6 595.9 1241.1 595.9 1241.6 595.9 1242.1 595.9 1242.6 595.9 1243.1 595.9 1243.6 595.9 1244.1 595.9 1244.5 595.9 1245.0 595.9 1245.5 595.9 1246.0 595.9 1246.5 595.9 1247.0 595.9 1247.5 595.9 1248.0 595.9 1248.5 595.9 1249.0 595.9 1249.5 595.9 1250.0 595.9 1250.5 595.9 1251.0 595.9 1251.5 595.9 1252.0 595.9 1252.5 595.9 1253.0 595.9 1253.5 595.9 1254.0 595.9 1254.5 595.9 1255.0 595.9 1255.5 595.9 1256.0 595.9 1256.5 595.9 1256.9 595.9 1257.4 595.9 1257.9 595.9 1258.4 595.9 1258.9 595.9 1259.4 595.9 1259.9 595.9 1260.4 595.9 1260.9 595.9 1261.4 595.9 1261.9 595.9 1262.4 595.9 1262.9 595.9 1263.4 595.9 1263.9 595.9 1264.4 595.9 1264.9 595.9 1265.4 595.9 1265.9 595.9 1266.4 595.9 1266.9 595.9 1267.4 595.9 1267.9 595.9 1268.4 595.9 1268.9 595.9 1269.4 595.9 1269.8 595.9 1270.3 595.9 1270.8 595.9 1271.3 595.9 1271.8 595.9 1272.3 595.9 1272.8 595.9 1273.3 595.9 1273.8 595.9 1274.3 595.9 1274.8 595.9 1275.3 595.9 1275.8 595.9 1276.3 595.9 1276.8 595.9 1277.3 595.9 1277.8 595.9 1278.3 595.9 1278.8 595.9 1279.3 595.9 1279.8 595.9 1280.3 595.9 1280.8 595.9 1281.3 595.9 1281.8 595.9 1282.3 595.9 1282.7 595.9 1283.2 595.9 1283.7 595.9 1284.2 595.9 1284.7 595.9 1285.2 595.9 1285.7 595.9 1286.2 595.9 1286.7 595.9 1287.2 595.9 1287.7 595.9 1288.2 595.9 1288.7 595.9 1289.2 595.9 1289.7 595.9 1290.2 595.9 1290.7 595.9 1291.2 595.9 1291.7 595.9 1292.2 595.9 1292.7 595.9 1293.2 595.9 1293.7 595.9 1294.2 595.9 1294.7 595.9 1295.1 595.9 1295.6 595.9 1296.1 595.9 1296.6 595.9 1297.1 595.9 1297.6 595.9 1298.1 595.9 1298.6 595.9 1299.1 595.9 1299.6 595.9 1300.1 595.9 1300.6 595.9 1301.1 595.9 1301.6 595.9 1302.1 595.9 1302.6 595.9 1303.1 595.9 1303.6 595.9 1304.1 595.9 1304.6 595.9 1305.1 595.9 1305.6 595.9 1306.1 595.9 1306.6 595.9 1307.1 595.9 1307.6 595.9 1308.0 595.9 1308.5 595.9 1309.0 595.9 1309.5 595.9 1310.0 595.9 1310.5 595.9 1311.0 595.9 1311.5 595.9 1312.0 595.9 1312.5 595.9 1313.0 595.9 1313.5 595.9 1314.0 595.9 1314.5 595.9 1315.0 595.9 1315.5 595.9 1316.0 595.9 1316.5 595.9 1317.0 595.9 1317.5 595.9 1318.0 595.9 1318.5 595.9 1319.0 595.9 1319.5 595.9 1320.0 595.9 1320.5 595.9 1320.9 595.9 1321.4 595.9 1321.9 595.9 1322.4 595.9 1322.9 595.9 1323.4 595.9 1323.9 595.9 1324.4 595.9 1324.9 595.9 1325.4 595.9 1325.9 595.9 1326.4 595.9 1326.9 595.9 1327.4 595.9 1327.9 595.9 1328.4 595.9 1328.9 595.9 1329.4 595.9 1329.9 595.9 1330.4 595.9 1330.9 595.9 1331.4 595.9 1331.9 595.9 1332.4 595.9 1332.9 595.9 1333.3 595.9 1333.8 595.9 1334.3 595.9 1334.8 595.9 1335.3 595.9 1335.8 595.9 1336.3 595.9 1336.8 595.9 1337.3 595.9 1337.8 595.9 1338.3 595.9 1338.8 595.9 1339.3 595.9 1339.8 595.9 1340.3 595.9 1340.8 595.9 1341.3 595.9 1341.8 595.9 1342.3 595.9 1342.8 595.9 1343.3 595.9 1343.8 595.9 1344.3 595.9 1344.8 595.9 1345.3 595.9 1345.8 595.9 1346.2 595.9 1346.7 595.9 1347.2 595.9 1347.7 595.9 1348.2 595.9 1348.7 595.9 1349.2 595.9 1349.7 595.9 1350.2 595.9 1350.7 595.9 1351.2 595.9 1351.7 595.9 1352.2 595.9 1352.7 595.9 1353.2 595.9 1353.7 595.9 1354.2 595.9 1354.7 595.9 1355.2 595.9 1355.7 595.9 1356.2 595.9 1356.7 595.9 1357.2 595.9 1357.7 595.9 1358.2 595.9 1358.7 595.9 1359.1 595.9 1359.6 595.9 1360.1 595.9 1360.6 595.9 1361.1 595.9 1361.6 595.9 1362.1 595.9 1362.6 595.9 1363.1 595.9 1363.6 595.9 1364.1 595.9 1364.6 595.9 1365.1 595.9 1365.6 595.9 1366.1 595.9 1366.6 595.9 1367.1 595.9 1367.6 595.9 1368.1 595.9 1368.6 595.9 1369.1 595.9 1369.6 595.9 1370.1 595.9 1370.6 595.9 1371.1 595.9 1371.5 595.9 1372.0 595.9 1372.5 595.9 1373.0 595.9 1373.5 595.9 1374.0 595.9 1374.5 595.9 1375.0 595.9 1375.5 595.9 1376.0 595.9 1376.5 595.9 1377.0 595.9 1377.5 595.9 1378.0 595.9 1378.5 595.9 1379.0 595.9 1379.5 595.9 1380.0 595.9 1380.5 595.9 1381.0 595.9 1381.5 595.9 1382.0 595.9 1382.5 595.9 1383.0 595.9 1383.5 595.9 1384.0 595.9 1384.4 595.9 1384.9 595.9 1385.4 595.9 1385.9 595.9 1386.4 595.9 1386.9 595.9 1387.4 595.9 1387.9 595.9 1388.4 595.9 1388.9 595.9 1389.4 595.9 1389.9 595.9 1390.4 595.9 1390.9 595.9 1391.4 595.9 1391.9 595.9 1392.4 595.9 1392.9 595.9 1393.4 595.9 1393.9 595.9 1394.4 595.9 1394.9 595.9 1395.4 595.9 1395.9 595.9 1396.4 595.9 1396.9 595.9 1397.3 595.9 1397.8 595.9 1398.3 595.9 1398.8 595.9 1399.3 595.9 1399.8 595.9 1400.3 595.9 1400.8 595.9 1401.3 595.9 1401.8 595.9 1402.3 595.9 1402.8 595.9 1403.3 595.9 1403.8 595.9 1404.3 595.9 1404.8 595.9 1405.3 595.9 1405.8 595.9 1406.3 595.9 1406.8 595.9 1407.3 595.9 1407.8 595.9 1408.3 595.9 1408.8 595.9 1408.8 595.9 1409.9 595.6 1410.7 510.1 1411.5 511.4 1412.3 596.1 1413.1 596.1 1413.9 541.5 1415.0 542.8 1415.8 596.1 1416.9 595.9 1417.2 595.9 1417.7 595.9 1418.2 595.9 1418.7 595.9 1419.2 595.9 1419.7 595.9 1420.2 595.9 1420.7 595.9 1421.2 595.9 1421.7 595.9 1422.2 595.9 1422.6 595.9 1423.1 595.9 1423.6 595.9 1424.1 595.9 1424.6 595.9 1425.1 595.9 1425.6 595.9 1426.1 595.9 1426.6 595.9 1427.1 595.9 1427.6 595.9 1428.1 595.9 1428.6 595.9 1429.1 595.9 1429.6 595.9 1430.1 595.9 1430.6 595.9 1431.1 595.9 1431.6 595.9 1432.1 595.9 1432.6 595.9 1433.1 595.9 1433.6 595.9 1434.1 595.9 1434.6 595.9 1435.1 595.9 1435.5 595.9 1436.0 595.9 1436.5 595.9 1437.0 595.9 1437.5 595.9 1438.0 595.9 1438.5 595.9 1439.0 595.9 1439.5 595.9 1440.0 595.9 1440.5 595.9 1441.0 595.9 1441.5 595.9 1442.0 595.9 1442.5 595.9 1443.0 595.9 1443.5 595.9 1444.0 595.9 1444.5 595.9 1445.0 595.9 1445.5 595.9 1446.0 595.9 1446.5 595.9 1447.0 595.9 1447.5 595.9 1447.9 595.9 1448.4 595.9 1448.9 595.9 1449.4 595.9 1449.9 595.9 1450.4 595.9 1450.9 595.9 1451.4 595.9 1451.9 595.9 1452.4 595.9 1452.9 595.9 1453.4 595.9 1453.9 595.9 1454.4 595.9 1454.9 595.9 1455.4 595.9 1455.9 595.9 1456.4 595.9 1456.9 595.9 1457.4 595.9 1457.9 595.9 1458.4 595.9 1458.9 595.9 1459.4 595.9 1459.9 595.9 1460.4 595.9 1460.8 595.9 1461.3 595.9 1461.8 595.9 1462.3 595.9 1462.8 595.9 1463.3 595.9 1463.8 595.9 1464.3 595.9 1464.8 595.9 1465.3 595.9 1465.8 595.9 1466.3 595.9 1466.8 595.9 1467.3 595.9 1467.8 595.9 1468.3 595.9 1468.8 595.9 1469.3 595.9 1469.8 595.9 1470.3 595.9 1470.8 595.9 1471.3 595.9 1471.8 595.9 1472.3 595.9 1472.8 595.9 1473.3 595.9 1473.7 595.9 1474.2 595.9 1474.7 595.9 1475.2 595.9 1475.7 595.9 1476.2 595.9 1476.7 595.9 1477.2 595.9 1477.7 595.9 1478.2 595.9 1478.7 595.9 1479.2 595.9 1479.7 595.9 1480.2 595.9 1480.7 595.9 1481.2 595.9 1481.7 595.9 1482.2 595.9 1482.7 595.9 1483.2 595.9 1483.7 595.9 1484.2 595.9 1484.7 595.9 1485.2 595.9 1485.7 595.9 1486.2 595.9 1486.6 595.9 1487.1 595.9 1487.6 595.9 1488.1 595.9 1488.6 595.9 1489.1 595.9 1489.6 595.9 1490.1 595.9 1490.6 595.9 1491.1 595.9 1491.6 595.9 1492.1 595.9 1492.6 595.9 1493.1 595.9 1493.6 595.9 1494.1 595.9 1494.6 595.9 1495.1 595.9 1495.6 595.9 1496.1 595.9 1496.6 595.9 1497.1 595.9 1497.6 595.9 1498.1 595.9 1498.6 595.9 1499.0 595.9 1499.5 595.9 1500.0 595.9 1500.5 595.9 1501.0 595.9 1501.5 595.9 1502.0 595.9 1502.5 595.9 1503.0 595.9 1503.5 595.9 1504.0 595.9 1504.5 595.9 1505.0 595.9 1505.5 595.9 1506.0 595.9 1506.5 595.9 1507.0 595.9 1507.5 595.9 1508.0 595.9 1508.5 595.9 1509.0 595.9 1509.5 595.9 1510.0 595.9 1510.5 595.9 1511.0 595.9 1511.5 595.9 1511.9 595.9 1512.4 595.9 1512.9 595.9 1513.4 595.9 1513.9 595.9 1514.4 595.9 1514.9 595.9 1515.4 595.9 1515.9 595.9 1516.4 595.9 1516.9 595.9 1517.4 595.9 1517.9 595.9 1518.4 595.9 1518.9 595.9 1519.4 595.9 1519.9 595.9 1520.4 595.9 1520.9 595.9 1521.4 595.9 1521.9 595.9 1522.4 595.9 1522.9 595.9 1523.4 595.9 1523.9 595.9 1524.4 595.9 1524.8 595.9 1525.3 595.9 1525.8 595.9 1526.3 595.9 1526.8 595.9 1527.3 595.9 1527.8 595.9 1528.3 595.9 1528.8 595.9 1529.3 595.9 1529.8 595.9 1530.3 595.9 1530.8 595.9 1531.3 595.9 1531.8 595.9 1532.3 595.9 1532.8 595.9 1533.3 595.9 1533.8 595.9 1534.3 595.9 1534.8 595.9 1535.3 595.9 1535.8 595.9 1536.3 595.9 1536.8 595.9 1537.2 595.9 1537.7 595.9 1538.2 595.9 1538.7 595.9 1539.2 595.9 1539.7 595.9 1540.2 595.9 1540.7 595.9 1541.2 595.9 1541.7 595.9 1542.2 595.9 1542.7 595.9 1543.2 595.9 1543.7 595.9 1544.2 595.9 1544.7 595.9 1545.2 595.9 1545.7 595.9 1546.2 595.9 1546.7 595.9 1547.2 595.9 1547.7 595.9 1548.2 595.9 1548.7 595.9 1549.2 595.9 1549.7 595.9 1550.1 595.9 1550.6 595.9 1551.1 595.9 1551.6 595.9 1552.1 595.9 1552.6 595.9 1553.1 595.9 1553.6 595.9 1554.1 595.9 1554.6 595.9 1555.1 595.9 1555.6 595.9 1556.1 595.9 1556.6 595.9 1557.1 595.9 1557.6 595.9 1558.1 595.9 1558.6 595.9 1559.1 595.9 1559.6 595.9 1560.1 595.9 1560.6 595.9 1561.1 595.9 1561.6 595.9 1562.1 595.9 1562.6 595.9 1563.0 595.9 1563.5 595.9 1564.0 595.9 1564.5 595.9 1565.0 595.9 1565.5 595.9 1566.0 595.9 1566.5 595.9 1567.0 595.9 1567.5 595.9 1568.0 595.9 1568.5 595.9 1569.0 595.9 L1569.0 596 L1123.0 596Z" fill="#6ed0e0" fill-opacity=".1"/><path d="M1123.0 595.9 1123.5 595.9 1124.0 595.9 1124.5 595.9 1125.0 595.9 1125.5 595.9 1126.0 595.9 1126.5 595.9 1127.0 595.9 1127.5 595.9 1128.0 595.9 1128.5 595.9 1129.0 595.9 1129.4 595.9 1129.9 595.9 1130.4 595.9 1130.9 595.9 1131.4 595.9 1131.9 595.9 1132.4 595.9 1132.9 595.9 1133.4 595.9 1133.9 595.9 1134.4 595.9 1134.9 595.9 1135.4 595.9 1135.9 595.9 1136.4 595.9 1136.9 595.9 1137.4 595.9 1137.9 595.9 1138.4 595.9 1138.9 595.9 1139.4 595.9 1139.9 595.9 1140.4 595.9 1140.9 595.9 1141.4 595.9 1141.9 595.9 1142.3 595.9 1142.8 595.9 1143.3 595.9 1143.8 595.9 1144.3 595.9 1144.8 595.9 1145.3 595.9 1145.8 595.9 1146.3 595.9 1146.8 595.9 1147.3 595.9 1147.8 595.9 1148.3 595.9 1148.8 595.9 1149.3 595.9 1149.8 595.9 1150.3 595.9 1150.8 595.9 1151.3 595.9 1151.8 595.9 1152.3 595.9 1152.8 595.9 1153.3 595.9 1153.8 595.9 1154.3 595.9 1154.8 595.9 1155.2 595.9 1155.7 595.9 1156.2 595.9 1156.7 595.9 1157.2 595.9 1157.7 595.9 1158.2 595.9 1158.7 595.9 1159.2 595.9 1159.7 595.9 1160.2 595.9 1160.7 595.9 1161.2 595.9 1161.7 595.9 1162.2 595.9 1162.7 595.9 1163.2 595.9 1163.7 595.9 1164.2 595.9 1164.7 595.9 1165.2 595.9 1165.7 595.9 1166.2 595.9 1166.7 595.9 1167.2 595.9 1167.6 595.9 1168.1 595.9 1168.6 595.9 1169.1 595.9 1169.6 595.9 1170.1 595.9 1170.6 595.9 1171.1 595.9 1171.6 595.9 1172.1 595.9 1172.6 595.9 1173.1 595.9 1173.6 595.9 1174.1 595.9 1174.6 595.9 1175.1 595.9 1175.6 595.9 1176.1 595.9 1176.6 595.9 1177.1 595.9 1177.6 595.9 1178.1 595.9 1178.6 595.9 1179.1 595.9 1179.6 595.9 1180.1 595.9 1180.5 595.9 1181.0 595.9 1181.5 595.9 1182.0 595.9 1182.5 595.9 1183.0 595.9 1183.5 595.9 1184.0 595.9 1184.5 595.9 1185.0 595.9 1185.5 595.9 1186.0 595.9 1186.5 595.9 1187.0 595.9 1187.5 595.9 1188.0 595.9 1188.5 595.9 1189.0 595.9 1189.5 595.9 1190.0 595.9 1190.5 595.9 1191.0 595.9 1191.5 595.9 1192.0 595.9 1192.5 595.9 1193.0 595.9 1193.4 595.9 1193.9 595.9 1194.4 595.9 1194.9 595.9 1195.4 595.9 1195.9 595.9 1196.4 595.9 1196.9 595.9 1197.4 595.9 1197.9 595.9 1198.4 595.9 1198.9 595.9 1199.4 595.9 1199.9 595.9 1200.4 595.9 1200.9 595.9 1201.4 595.9 1201.9 595.9 1202.4 595.9 1202.9 595.9 1203.4 595.9 1203.9 595.9 1204.4 595.9 1204.9 595.9 1205.4 595.9 1205.8 595.9 1206.3 595.9 1206.8 595.9 1207.3 595.9 1207.8 595.9 1208.3 595.9 1208.8 595.9 1209.3 595.9 1209.8 595.9 1210.3 595.9 1210.8 595.9 1211.3 595.9 1211.8 595.9 1212.3 595.9 1212.8 595.9 1213.3 595.9 1213.8 595.9 1214.3 595.9 1214.8 595.9 1215.3 595.9 1215.8 595.9 1216.3 595.9 1216.8 595.9 1217.3 595.9 1217.8 595.9 1218.3 595.9 1218.7 595.9 1219.2 595.9 1219.7 595.9 1220.2 595.9 1220.7 595.9 1221.2 595.9 1221.7 595.9 1222.2 595.9 1222.7 595.9 1223.2 595.9 1223.7 595.9 1224.2 595.9 1224.7 595.9 1225.2 595.9 1225.7 595.9 1226.2 595.9 1226.7 595.9 1227.2 595.9 1227.7 595.9 1228.2 595.9 1228.7 595.9 1229.2 595.9 1229.7 595.9 1230.2 595.9 1230.7 595.9 1231.2 595.9 1231.6 595.9 1232.1 595.9 1232.6 595.9 1233.1 595.9 1233.6 595.9 1234.1 595.9 1234.6 595.9 1235.1 595.9 1235.6 595.9 1236.1 595.9 1236.6 595.9 1237.1 595.9 1237.6 595.9 1238.1 595.9 1238.6 595.9 1239.1 595.9 1239.6 595.9 1240.1 595.9 1240.6 595.9 1241.1 595.9 1241.6 595.9 1242.1 595.9 1242.6 595.9 1243.1 595.9 1243.6 595.9 1244.1 595.9 1244.5 595.9 1245.0 595.9 1245.5 595.9 1246.0 595.9 1246.5 595.9 1247.0 595.9 1247.5 595.9 1248.0 595.9 1248.5 595.9 1249.0 595.9 1249.5 595.9 1250.0 595.9 1250.5 595.9 1251.0 595.9 1251.5 595.9 1252.0 595.9 1252.5 595.9 1253.0 595.9 1253.5 595.9 1254.0 595.9 1254.5 595.9 1255.0 595.9 1255.5 595.9 1256.0 595.9 1256.5 595.9 1256.9 595.9 1257.4 595.9 1257.9 595.9 1258.4 595.9 1258.9 595.9 1259.4 595.9 1259.9 595.9 1260.4 595.9 1260.9 595.9 1261.4 595.9 1261.9 595.9 1262.4 595.9 1262.9 595.9 1263.4 595.9 1263.9 595.9 1264.4 595.9 1264.9 595.9 1265.4 595.9 1265.9 595.9 1266.4 595.9 1266.9 595.9 1267.4 595.9 1267.9 595.9 1268.4 595.9 1268.9 595.9 1269.4 595.9 1269.8 595.9 1270.3 595.9 1270.8 595.9 1271.3 595.9 1271.8 595.9 1272.3 595.9 1272.8 595.9 1273.3 595.9 1273.8 595.9 1274.3 595.9 1274.8 595.9 1275.3 595.9 1275.8 595.9 1276.3 595.9 1276.8 595.9 1277.3 595.9 1277.8 595.9 1278.3 595.9 1278.8 595.9 1279.3 595.9 1279.8 595.9 1280.3 595.9 1280.8 595.9 1281.3 595.9 1281.8 595.9 1282.3 595.9 1282.7 595.9 1283.2 595.9 1283.7 595.9 1284.2 595.9 1284.7 595.9 1285.2 595.9 1285.7 595.9 1286.2 595.9 1286.7 595.9 1287.2 595.9 1287.7 595.9 1288.2 595.9 1288.7 595.9 1289.2 595.9 1289.7 595.9 1290.2 595.9 1290.7 595.9 1291.2 595.9 1291.7 595.9 1292.2 595.9 1292.7 595.9 1293.2 595.9 1293.7 595.9 1294.2 595.9 1294.7 595.9 1295.1 595.9 1295.6 595.9 1296.1 595.9 1296.6 595.9 1297.1 595.9 1297.6 595.9 1298.1 595.9 1298.6 595.9 1299.1 595.9 1299.6 595.9 1300.1 595.9 1300.6 595.9 1301.1 595.9 1301.6 595.9 1302.1 595.9 1302.6 595.9 1303.1 595.9 1303.6 595.9 1304.1 595.9 1304.6 595.9 1305.1 595.9 1305.6 595.9 1306.1 595.9 1306.6 595.9 1307.1 595.9 1307.6 595.9 1308.0 595.9 1308.5 595.9 1309.0 595.9 1309.5 595.9 1310.0 595.9 1310.5 595.9 1311.0 595.9 1311.5 595.9 1312.0 595.9 1312.5 595.9 1313.0 595.9 1313.5 595.9 1314.0 595.9 1314.5 595.9 1315.0 595.9 1315.5 595.9 1316.0 595.9 1316.5 595.9 1317.0 595.9 1317.5 595.9 1318.0 595.9 1318.5 595.9 1319.0 595.9 1319.5 595.9 1320.0 595.9 1320.5 595.9 1320.9 595.9 1321.4 595.9 1321.9 595.9 1322.4 595.9 1322.9 595.9 1323.4 595.9 1323.9 595.9 1324.4 595.9 1324.9 595.9 1325.4 595.9 1325.9 595.9 1326.4 595.9 1326.9 595.9 1327.4 595.9 1327.9 595.9 1328.4 595.9 1328.9 595.9 1329.4 595.9 1329.9 595.9 1330.4 595.9 1330.9 595.9 1331.4 595.9 1331.9 595.9 1332.4 595.9 1332.9 595.9 1333.3 595.9 1333.8 595.9 1334.3 595.9 1334.8 595.9 1335.3 595.9 1335.8 595.9 1336.3 595.9 1336.8 595.9 1337.3 595.9 1337.8 595.9 1338.3 595.9 1338.8 595.9 1339.3 595.9 1339.8 595.9 1340.3 595.9 1340.8 595.9 1341.3 595.9 1341.8 595.9 1342.3 595.9 1342.8 595.9 1343.3 595.9 1343.8 595.9 1344.3 595.9 1344.8 595.9 1345.3 595.9 1345.8 595.9 1346.2 595.9 1346.7 595.9 1347.2 595.9 1347.7 595.9 1348.2 595.9 1348.7 595.9 1349.2 595.9 1349.7 595.9 1350.2 595.9 1350.7 595.9 1351.2 595.9 1351.7 595.9 1352.2 595.9 1352.7 595.9 1353.2 595.9 1353.7 595.9 1354.2 595.9 1354.7 595.9 1355.2 595.9 1355.7 595.9 1356.2 595.9 1356.7 595.9 1357.2 595.9 1357.7 595.9 1358.2 595.9 1358.7 595.9 1359.1 595.9 1359.6 595.9 1360.1 595.9 1360.6 595.9 1361.1 595.9 1361.6 595.9 1362.1 595.9 1362.6 595.9 1363.1 595.9 1363.6 595.9 1364.1 595.9 1364.6 595.9 1365.1 595.9 1365.6 595.9 1366.1 595.9 1366.6 595.9 1367.1 595.9 1367.6 595.9 1368.1 595.9 1368.6 595.9 1369.1 595.9 1369.6 595.9 1370.1 595.9 1370.6 595.9 1371.1 595.9 1371.5 595.9 1372.0 595.9 1372.5 595.9 1373.0 595.9 1373.5 595.9 1374.0 595.9 1374.5 595.9 1375.0 595.9 1375.5 595.9 1376.0 595.9 1376.5 595.9 1377.0 595.9 1377.5 595.9 1378.0 595.9 1378.5 595.9 1379.0 595.9 1379.5 595.9 1380.0 595.9 1380.5 595.9 1381.0 595.9 1381.5 595.9 1382.0 595.9 1382.5 595.9 1383.0 595.9 1383.5 595.9 1384.0 595.9 1384.4 595.9 1384.9 595.9 1385.4 595.9 1385.9 595.9 1386.4 595.9 1386.9 595.9 1387.4 595.9 1387.9 595.9 1388.4 595.9 1388.9 595.9 1389.4 595.9 1389.9 595.9 1390.4 595.9 1390.9 595.9 1391.4 595.9 1391.9 595.9 1392.4 595.9 1392.9 595.9 1393.4 595.9 1393.9 595.9 1394.4 595.9 1394.9 595.9 1395.4 595.9 1395.9 595.9 1396.4 595.9 1396.9 595.9 1397.3 595.9 1397.8 595.9 1398.3 595.9 1398.8 595.9 1399.3 595.9 1399.8 595.9 1400.3 595.9 1400.8 595.9 1401.3 595.9 1401.8 595.9 1402.3 595.9 1402.8 595.9 1403.3 595.9 1403.8 595.9 1404.3 595.9 1404.8 595.9 1405.3 595.9 1405.8 595.9 1406.3 595.9 1406.8 595.9 1407.3 595.9 1407.8 595.9 1408.3 595.9 1408.8 595.9 1408.8 595.9 1409.9 595.6 1410.7 510.1 1411.5 511.4 1412.3 596.1 1413.1 596.1 1413.9 541.5 1415.0 542.8 1415.8 596.1 1416.9 595.9 1417.2 595.9 1417.7 595.9 1418.2 595.9 1418.7 595.9 1419.2 595.9 1419.7 595.9 1420.2 595.9 1420.7 595.9 1421.2 595.9 1421.7 595.9 1422.2 595.9 1422.6 595.9 1423.1 595.9 1423.6 595.9 1424.1 595.9 1424.6 595.9 1425.1 595.9 1425.6 595.9 1426.1 595.9 1426.6 595.9 1427.1 595.9 1427.6 595.9 1428.1 595.9 1428.6 595.9 1429.1 595.9 1429.6 595.9 1430.1 595.9 1430.6 595.9 1431.1 595.9 1431.6 595.9 1432.1 595.9 1432.6 595.9 1433.1 595.9 1433.6 595.9 1434.1 595.9 1434.6 595.9 1435.1 595.9 1435.5 595.9 1436.0 595.9 1436.5 595.9 1437.0 595.9 1437.5 595.9 1438.0 595.9 1438.5 595.9 1439.0 595.9 1439.5 595.9 1440.0 595.9 1440.5 595.9 1441.0 595.9 1441.5 595.9 1442.0 595.9 1442.5 595.9 1443.0 595.9 1443.5 595.9 1444.0 595.9 1444.5 595.9 1445.0 595.9 1445.5 595.9 1446.0 595.9 1446.5 595.9 1447.0 595.9 1447.5 595.9 1447.9 595.9 1448.4 595.9 1448.9 595.9 1449.4 595.9 1449.9 595.9 1450.4 595.9 1450.9 595.9 1451.4 595.9 1451.9 595.9 1452.4 595.9 1452.9 595.9 1453.4 595.9 1453.9 595.9 1454.4 595.9 1454.9 595.9 1455.4 595.9 1455.9 595.9 1456.4 595.9 1456.9 595.9 1457.4 595.9 1457.9 595.9 1458.4 595.9 1458.9 595.9 1459.4 595.9 1459.9 595.9 1460.4 595.9 1460.8 595.9 1461.3 595.9 1461.8 595.9 1462.3 595.9 1462.8 595.9 1463.3 595.9 1463.8 595.9 1464.3 595.9 1464.8 595.9 1465.3 595.9 1465.8 595.9 1466.3 595.9 1466.8 595.9 1467.3 595.9 1467.8 595.9 1468.3 595.9 1468.8 595.9 1469.3 595.9 1469.8 595.9 1470.3 595.9 1470.8 595.9 1471.3 595.9 1471.8 595.9 1472.3 595.9 1472.8 595.9 1473.3 595.9 1473.7 595.9 1474.2 595.9 1474.7 595.9 1475.2 595.9 1475.7 595.9 1476.2 595.9 1476.7 595.9 1477.2 595.9 1477.7 595.9 1478.2 595.9 1478.7 595.9 1479.2 595.9 1479.7 595.9 1480.2 595.9 1480.7 595.9 1481.2 595.9 1481.7 595.9 1482.2 595.9 1482.7 595.9 1483.2 595.9 1483.7 595.9 1484.2 595.9 1484.7 595.9 1485.2 595.9 1485.7 595.9 1486.2 595.9 1486.6 595.9 1487.1 595.9 1487.6 595.9 1488.1 595.9 1488.6 595.9 1489.1 595.9 1489.6 595.9 1490.1 595.9 1490.6 595.9 1491.1 595.9 1491.6 595.9 1492.1 595.9 1492.6 595.9 1493.1 595.9 1493.6 595.9 1494.1 595.9 1494.6 595.9 1495.1 595.9 1495.6 595.9 1496.1 595.9 1496.6 595.9 1497.1 595.9 1497.6 595.9 1498.1 595.9 1498.6 595.9 1499.0 595.9 1499.5 595.9 1500.0 595.9 1500.5 595.9 1501.0 595.9 1501.5 595.9 1502.0 595.9 1502.5 595.9 1503.0 595.9 1503.5 595.9 1504.0 595.9 1504.5 595.9 1505.0 595.9 1505.5 595.9 1506.0 595.9 1506.5 595.9 1507.0 595.9 1507.5 595.9 1508.0 595.9 1508.5 595.9 1509.0 595.9 1509.5 595.9 1510.0 595.9 1510.5 595.9 1511.0 595.9 1511.5 595.9 1511.9 595.9 1512.4 595.9 1512.9 595.9 1513.4 595.9 1513.9 595.9 1514.4 595.9 1514.9 595.9 1515.4 595.9 1515.9 595.9 1516.4 595.9 1516.9 595.9 1517.4 595.9 1517.9 595.9 1518.4 595.9 1518.9 595.9 1519.4 595.9 1519.9 595.9 1520.4 595.9 1520.9 595.9 1521.4 595.9 1521.9 595.9 1522.4 595.9 1522.9 595.9 1523.4 595.9 1523.9 595.9 1524.4 595.9 1524.8 595.9 1525.3 595.9 1525.8 595.9 1526.3 595.9 1526.8 595.9 1527.3 595.9 1527.8 595.9 1528.3 595.9 1528.8 595.9 1529.3 595.9 1529.8 595.9 1530.3 595.9 1530.8 595.9 1531.3 595.9 1531.8 595.9 1532.3 595.9 1532.8 595.9 1533.3 595.9 1533.8 595.9 1534.3 595.9 1534.8 595.9 1535.3 595.9 1535.8 595.9 1536.3 595.9 1536.8 595.9 1537.2 595.9 1537.7 595.9 1538.2 595.9 1538.7 595.9 1539.2 595.9 1539.7 595.9 1540.2 595.9 1540.7 595.9 1541.2 595.9 1541.7 595.9 1542.2 595.9 1542.7 595.9 1543.2 595.9 1543.7 595.9 1544.2 595.9 1544.7 595.9 1545.2 595.9 1545.7 595.9 1546.2 595.9 1546.7 595.9 1547.2 595.9 1547.7 595.9 1548.2 595.9 1548.7 595.9 1549.2 595.9 1549.7 595.9 1550.1 595.9 1550.6 595.9 1551.1 595.9 1551.6 595.9 1552.1 595.9 1552.6 595.9 1553.1 595.9 1553.6 595.9 1554.1 595.9 1554.6 595.9 1555.1 595.9 1555.6 595.9 1556.1 595.9 1556.6 595.9 1557.1 595.9 1557.6 595.9 1558.1 595.9 1558.6 595.9 1559.1 595.9 1559.6 595.9 1560.1 595.9 1560.6 595.9 1561.1 595.9 1561.6 595.9 1562.1 595.9 1562.6 595.9 1563.0 595.9 1563.5 595.9 1564.0 595.9 1564.5 595.9 1565.0 595.9 1565.5 595.9 1566.0 595.9 1566.5 595.9 1567.0 595.9 1567.5 595.9 1568.0 595.9 1568.5 595.9 1569.0 595.9" fill="none" stroke="#6ed0e0" stroke-width="1" stroke-linejoin="round"/></g></svg>
<div class="a ax r" style="left:1038px;width:80px;top:392.7px"><span class="sr" style="transform:scaleX(.955)">3.0 kW</span></div>
<div class="a ax r" style="left:1038px;width:80px;top:425.5px"><span class="sr" style="transform:scaleX(.955)">2.5 kW</span></div>
<div class="a ax r" style="left:1038px;width:80px;top:458.3px"><span class="sr" style="transform:scaleX(.955)">2.0 kW</span></div>
<div class="a ax r" style="left:1038px;width:80px;top:491.1px"><span class="sr" style="transform:scaleX(.955)">1.5 kW</span></div>
<div class="a ax r" style="left:1038px;width:80px;top:523.9px"><span class="sr" style="transform:scaleX(.955)">1.0 kW</span></div>
<div class="a ax r" style="left:1038px;width:80px;top:556.7px"><span class="sr" style="transform:scaleX(.955)">500 W</span></div>
<div class="a ax r" style="left:1038px;width:80px;top:589.5px"><span class="sr" style="transform:scaleX(.955)">0 W</span></div>
<div class="a ax c" style="left:1147.6px;width:60px;top:603px"><span class="sc" style="transform:scaleX(.957)">00:00</span></div>
<div class="a ax c" style="left:1221.9px;width:60px;top:603px"><span class="sc" style="transform:scaleX(.957)">04:00</span></div>
<div class="a ax c" style="left:1296.2px;width:60px;top:603px"><span class="sc" style="transform:scaleX(.957)">08:00</span></div>
<div class="a ax c" style="left:1370.5px;width:60px;top:603px"><span class="sc" style="transform:scaleX(.957)">12:00</span></div>
<div class="a ax c" style="left:1444.8px;width:60px;top:603px"><span class="sc" style="transform:scaleX(.957)">16:00</span></div>
<div class="a ax c" style="left:1519.1px;width:60px;top:603px"><span class="sc" style="transform:scaleX(.957)">20:00</span></div>
<div class="a lh r" style="left:1368.0px;width:70px;top:626px">min</div>
<div class="a lh r" style="left:1438.5px;width:70px;top:626px">max</div>
<div class="a lh r" style="left:1495.5px;width:70px;top:626px">current</div>
<div class="a" style="left:1090px;top:663px;width:485px;height:21px;background:#262628"></div>
<div class="a" style="left:1090px;top:654px;width:12px;height:3px;background:#7eb26d;border-radius:1px"></div>
<div class="a ln" style="left:1109px;top:646px"><span class="sl" style="transform:scaleX(.9)">L1</span></div>
<div class="a lg r" style="left:1348.0px;width:90px;top:646px">116 W</div>
<div class="a lg r" style="left:1418.5px;width:90px;top:646px">309 W</div>
<div class="a lg r" style="left:1475.5px;width:90px;top:646px">301 W</div>
<div class="a" style="left:1090px;top:674px;width:12px;height:3px;background:#eab839;border-radius:1px"></div>
<div class="a ln" style="left:1109px;top:666px"><span class="sl" style="transform:scaleX(.9)">L2</span></div>
<div class="a lg r" style="left:1348.0px;width:90px;top:666px">74 W</div>
<div class="a lg r" style="left:1418.5px;width:90px;top:666px">2.591 kW</div>
<div class="a lg r" style="left:1475.5px;width:90px;top:666px">206 W</div>
<div class="a" style="left:1090px;top:695px;width:12px;height:3px;background:#6ed0e0;border-radius:1px"></div>
<div class="a ln" style="left:1109px;top:687px"><span class="sl" style="transform:scaleX(.9)">L3</span></div>
<div class="a lg r" style="left:1348.0px;width:90px;top:687px">7 W</div>
<div class="a lg r" style="left:1418.5px;width:90px;top:687px">1.323 kW</div>
<div class="a lg r" style="left:1475.5px;width:90px;top:687px">7 W</div>
<div class="a ttl" style="left:16.0px;top:731px;width:1576.4px"><span>Import (1h)</span></div>
<svg class="a" style="left:1497px;top:731px" width="10" height="10" viewBox="0 0 10 10"><circle cx="5" cy="5" r="4" fill="none" stroke="#33b5e5" stroke-width="1.100"/><path d="M5.300 2.600v2.800H3.300" fill="none" stroke="#33b5e5" stroke-width="1"/></svg>
<div class="a tinfo" style="left:1509px;top:729px"><span>Last 1 month</span></div>
<div class="a ax" style="left:28px;top:753px;font-size:11px"><span class="sl" style="transform:scaleX(.975)">0.040 kWh</span></div>
<div class="a" style="left:85px;top:759px;width:1484px;height:1px;background:#3b3b3e"></div>
</body></html>
